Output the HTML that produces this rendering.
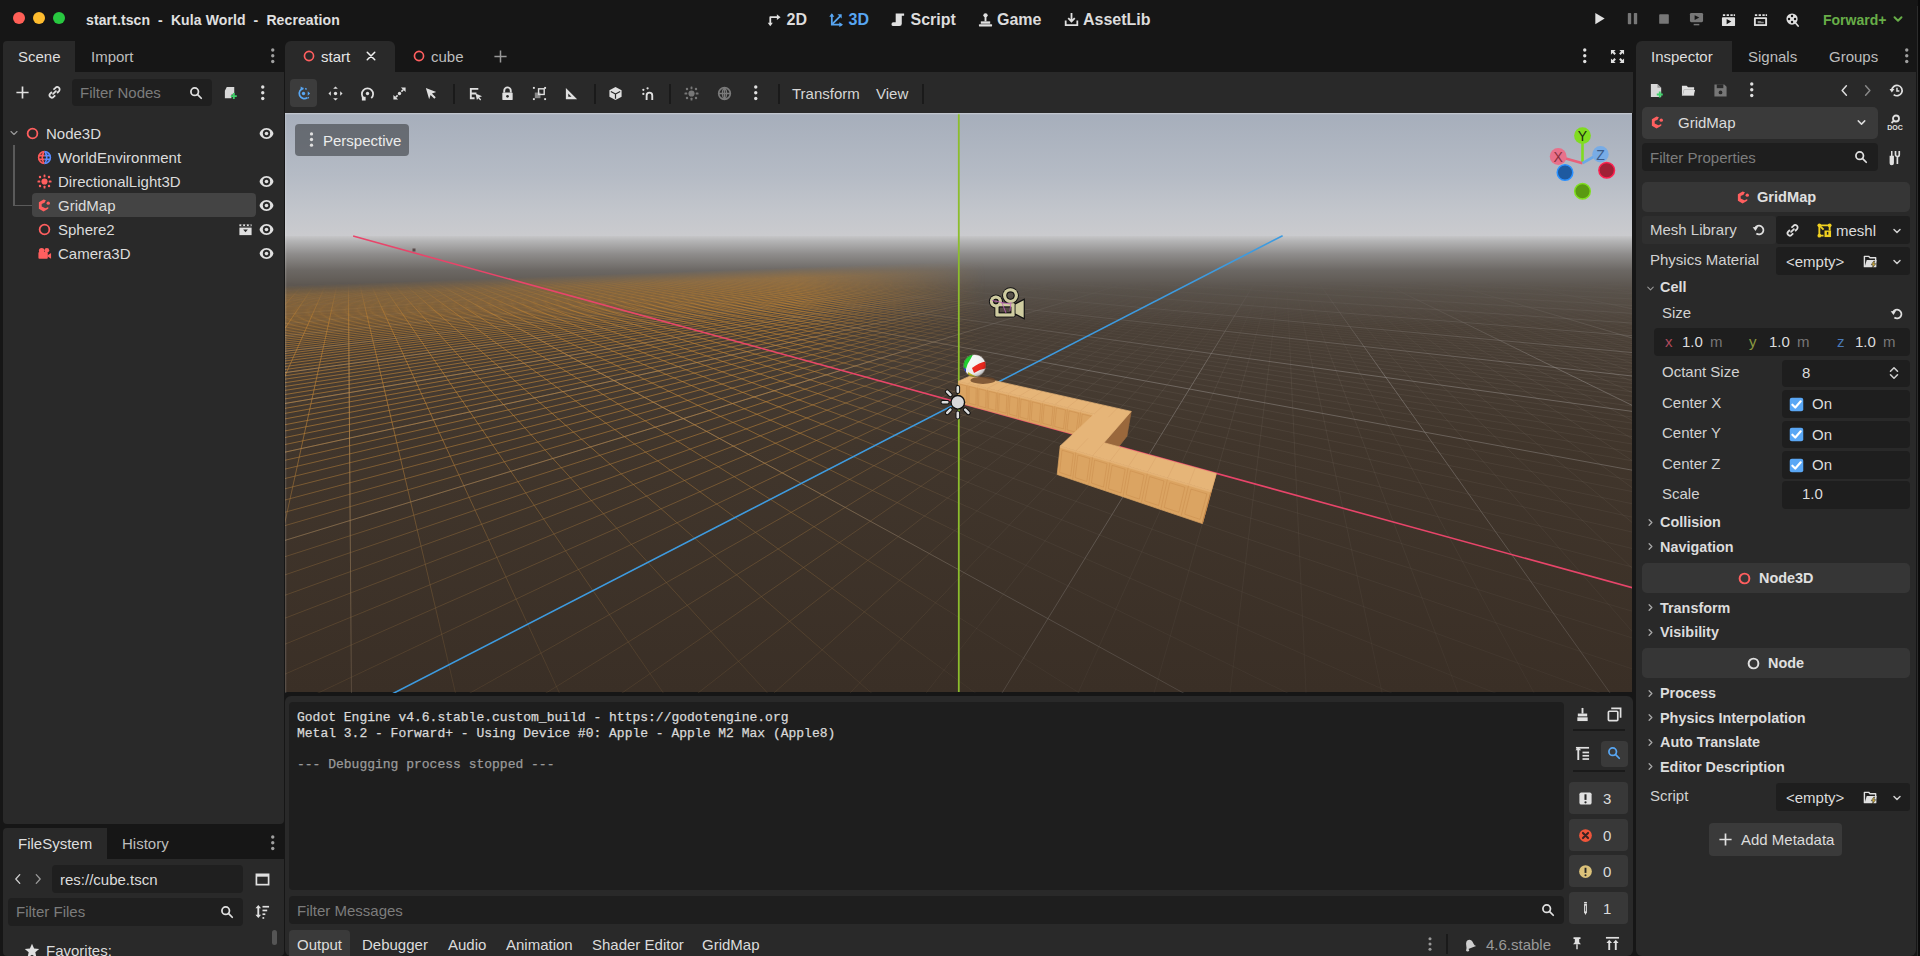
<!DOCTYPE html>
<html><head><meta charset="utf-8"><style>
html,body{margin:0;padding:0;}
body{width:1920px;height:956px;background:#161616;position:relative;overflow:hidden;font-family:"Liberation Sans", sans-serif;}
.t{position:absolute;white-space:pre;line-height:1;}
.r{position:absolute;}
.i{position:absolute;overflow:visible;}
</style></head><body>
<div class="r" style="left:12.5px;top:11.9px;width:12.6px;height:12.6px;background:#ff5f57;border-radius:6.3px;"></div>
<div class="r" style="left:32.6px;top:11.9px;width:12.6px;height:12.6px;background:#febc2e;border-radius:6.3px;"></div>
<div class="r" style="left:52.7px;top:11.9px;width:12.6px;height:12.6px;background:#28c840;border-radius:6.3px;"></div>
<div class="t" style="left:86px;top:12.7px;font-size:14px;font-weight:700;color:#e0e0e0;letter-spacing:0.11px;">start.tscn&nbsp; - &nbsp;Kula World &nbsp;- &nbsp;Recreation</div>
<div class="t" style="left:786.5px;top:12.2px;font-size:16px;font-weight:700;color:#dcdcdc;">2D</div>
<div class="t" style="left:848.5px;top:12.2px;font-size:16px;font-weight:700;color:#58a6f2;">3D</div>
<div class="t" style="left:910.5px;top:12.2px;font-size:16px;font-weight:700;color:#dcdcdc;">Script</div>
<div class="t" style="left:997px;top:12.2px;font-size:16px;font-weight:700;color:#dcdcdc;">Game</div>
<div class="t" style="left:1083px;top:12.2px;font-size:16px;font-weight:700;color:#dcdcdc;">AssetLib</div>
<div class="t" style="left:1823px;top:12.5px;font-size:14px;font-weight:700;color:#68ae48;">Forward+</div>
<div class="r" style="left:3px;top:41px;width:280.5px;height:783px;background:#292929;border-radius:4px;"></div>
<div class="r" style="left:75px;top:41px;width:209px;height:31px;background:#161616;"></div>
<div class="t" style="left:18px;top:48.7px;font-size:15px;color:#dedede;">Scene</div>
<div class="t" style="left:91px;top:48.7px;font-size:15px;color:#bdbdbd;">Import</div>
<div class="r" style="left:72px;top:79px;width:140px;height:27px;background:#1f1f1f;border-radius:4px;"></div>
<div class="t" style="left:80px;top:85.2px;font-size:15px;color:#7c7c7c;">Filter Nodes</div>
<div class="r" style="left:32px;top:193px;width:224px;height:24px;background:#444444;border-radius:4px;"></div>
<div class="t" style="left:46px;top:125.7px;font-size:15px;color:#dcdcdc;">Node3D</div>
<div class="t" style="left:58px;top:149.7px;font-size:15px;color:#dcdcdc;">WorldEnvironment</div>
<div class="t" style="left:58px;top:173.7px;font-size:15px;color:#dcdcdc;">DirectionalLight3D</div>
<div class="t" style="left:58px;top:197.7px;font-size:15px;color:#dcdcdc;">GridMap</div>
<div class="t" style="left:58px;top:221.7px;font-size:15px;color:#dcdcdc;">Sphere2</div>
<div class="t" style="left:58px;top:245.7px;font-size:15px;color:#dcdcdc;">Camera3D</div>
<div class="r" style="left:13px;top:145px;width:1.5px;height:61px;background:#5a5a5a;"></div>
<div class="r" style="left:13px;top:204.5px;width:19px;height:1.5px;background:#5a5a5a;"></div>
<div class="r" style="left:3px;top:828px;width:280.5px;height:128px;background:#292929;border-radius:4px;"></div>
<div class="r" style="left:107px;top:828px;width:177px;height:31px;background:#161616;"></div>
<div class="t" style="left:18px;top:835.7px;font-size:15px;color:#dedede;">FileSystem</div>
<div class="t" style="left:122px;top:835.7px;font-size:15px;color:#bdbdbd;">History</div>
<div class="r" style="left:52px;top:865px;width:191px;height:28px;background:#1f1f1f;border-radius:4px;"></div>
<div class="t" style="left:60px;top:871.7px;font-size:15px;color:#dcdcdc;">res://cube.tscn</div>
<div class="r" style="left:8px;top:898px;width:235px;height:28px;background:#1f1f1f;border-radius:4px;"></div>
<div class="t" style="left:16px;top:904.2px;font-size:15px;color:#7c7c7c;">Filter Files</div>
<div class="t" style="left:46px;top:942.7px;font-size:15px;color:#dcdcdc;">Favorites:</div>
<div class="r" style="left:285px;top:41px;width:110px;height:32px;background:#292929;border-radius:6px;border-bottom-left-radius:0;border-bottom-right-radius:0;"></div>
<div class="r" style="left:285px;top:72px;width:1348px;height:41px;background:#292929;"></div>
<div class="t" style="left:321px;top:48.7px;font-size:15px;color:#e6e6e6;">start</div>
<div class="t" style="left:431px;top:48.7px;font-size:15px;color:#bdbdbd;">cube</div>
<div class="r" style="left:290px;top:79px;width:27px;height:28px;background:#3c3c3c;border-radius:4px;"></div>
<div class="t" style="left:792px;top:85.7px;font-size:15px;color:#d6d6d6;">Transform</div>
<div class="t" style="left:876px;top:85.7px;font-size:15px;color:#d6d6d6;">View</div>
<div class="r" style="left:453px;top:84px;width:1.5px;height:20px;background:#1a1a1a;"></div>
<div class="r" style="left:594px;top:84px;width:1.5px;height:20px;background:#1a1a1a;"></div>
<div class="r" style="left:669px;top:84px;width:1.5px;height:20px;background:#1a1a1a;"></div>
<div class="r" style="left:778px;top:84px;width:1.5px;height:20px;background:#1a1a1a;"></div>
<div class="r" style="left:922px;top:84px;width:1.5px;height:20px;background:#1a1a1a;"></div>
<svg width="1347" height="580" viewBox="285 113 1347 580" style="position:absolute;left:285px;top:113px;display:block">
<defs>
<linearGradient id="sky" x1="0" y1="113" x2="0" y2="238" gradientUnits="userSpaceOnUse">
<stop offset="0" stop-color="#a6aebb"/><stop offset="0.5" stop-color="#b5bbc5"/><stop offset="0.8" stop-color="#c3c6cc"/><stop offset="1" stop-color="#cbcbce"/></linearGradient>
<linearGradient id="gnd" x1="0" y1="236" x2="0" y2="692" gradientUnits="userSpaceOnUse">
<stop offset="0" stop-color="#c6c6c8"/>
<stop offset="0.011" stop-color="#b4b4b5"/>
<stop offset="0.04" stop-color="#8e8c8b"/>
<stop offset="0.075" stop-color="#6c6864"/>
<stop offset="0.12" stop-color="#58514a"/>
<stop offset="0.2" stop-color="#4a4037"/>
<stop offset="0.45" stop-color="#41362c"/>
<stop offset="1" stop-color="#3a2f26"/></linearGradient>
<linearGradient id="fogv" x1="500" y1="236" x2="516.4" y2="692" gradientUnits="userSpaceOnUse">
<stop offset="0" stop-color="#fff" stop-opacity="0"/>
<stop offset="0.092" stop-color="#fff" stop-opacity="0"/>
<stop offset="0.115" stop-color="#fff" stop-opacity="0.55"/>
<stop offset="0.17" stop-color="#fff" stop-opacity="1"/>
<stop offset="0.38" stop-color="#fff" stop-opacity="1"/>
<stop offset="0.68" stop-color="#fff" stop-opacity="0.4"/>
<stop offset="1" stop-color="#fff" stop-opacity="0.14"/></linearGradient>
<linearGradient id="grayv" x1="0" y1="236" x2="0" y2="692" gradientUnits="userSpaceOnUse">
<stop offset="0" stop-color="#fff" stop-opacity="0"/>
<stop offset="0.1" stop-color="#fff" stop-opacity="0"/>
<stop offset="0.3" stop-color="#fff" stop-opacity="1"/>
<stop offset="0.6" stop-color="#fff" stop-opacity="0.75"/>
<stop offset="1" stop-color="#fff" stop-opacity="0.45"/></linearGradient>
<linearGradient id="orh" x1="285" y1="0" x2="1632" y2="0" gradientUnits="userSpaceOnUse">
<stop offset="0" stop-color="#fff" stop-opacity="1"/>
<stop offset="0.38" stop-color="#fff" stop-opacity="1"/>
<stop offset="0.52" stop-color="#fff" stop-opacity="0"/>
<stop offset="1" stop-color="#fff" stop-opacity="0"/></linearGradient>
<mask id="mfog" maskUnits="userSpaceOnUse" x="285" y="113" width="1347" height="580"><rect x="285" y="113" width="1347" height="580" fill="url(#fogv)"/></mask>
<mask id="mgray" maskUnits="userSpaceOnUse" x="285" y="113" width="1347" height="580"><rect x="285" y="113" width="1347" height="580" fill="url(#grayv)"/></mask>
<mask id="mor" maskUnits="userSpaceOnUse" x="285" y="113" width="1347" height="580"><rect x="285" y="113" width="1347" height="580" fill="url(#orh)"/></mask>
<clipPath id="vpclip"><rect x="285" y="113" width="1347" height="580"/></clipPath>
</defs>
<g clip-path="url(#vpclip)">
<rect x="285" y="113" width="1347" height="124" fill="url(#sky)"/>
<rect x="285" y="236" width="1347" height="456" fill="url(#gnd)"/>
<g mask="url(#mgray)"><line x1="-145336.6" y1="6409.7" x2="-13742.6" y2="831.9" stroke="rgba(155,150,145,0.5)" stroke-width="1"/><line x1="112173.1" y1="6409.7" x2="2248.4" y2="288.4" stroke="rgba(155,150,145,0.5)" stroke-width="1"/><line x1="-143935.4" y1="6409.7" x2="-11842.9" y2="756.4" stroke="rgba(125,115,105,0.2)" stroke-width="1"/><line x1="111149.0" y1="6409.7" x2="2230.5" y2="287.9" stroke="rgba(125,115,105,0.2)" stroke-width="1"/><line x1="-142534.1" y1="6409.7" x2="-10369.6" y2="697.9" stroke="rgba(125,115,105,0.2)" stroke-width="1"/><line x1="110125.0" y1="6409.7" x2="2212.9" y2="287.4" stroke="rgba(125,115,105,0.2)" stroke-width="1"/><line x1="-141132.9" y1="6409.7" x2="-9193.6" y2="651.2" stroke="rgba(125,115,105,0.2)" stroke-width="1"/><line x1="109100.9" y1="6409.7" x2="2195.7" y2="286.9" stroke="rgba(125,115,105,0.2)" stroke-width="1"/><line x1="-139731.6" y1="6409.7" x2="-8233.2" y2="613.0" stroke="rgba(125,115,105,0.2)" stroke-width="1"/><line x1="108076.8" y1="6409.7" x2="2178.8" y2="286.4" stroke="rgba(125,115,105,0.2)" stroke-width="1"/><line x1="-138330.4" y1="6409.7" x2="-7434.1" y2="581.2" stroke="rgba(125,115,105,0.2)" stroke-width="1"/><line x1="107052.8" y1="6409.7" x2="2162.2" y2="285.9" stroke="rgba(125,115,105,0.2)" stroke-width="1"/><line x1="-136929.1" y1="6409.7" x2="-6758.8" y2="554.4" stroke="rgba(125,115,105,0.2)" stroke-width="1"/><line x1="106028.7" y1="6409.7" x2="2145.8" y2="285.5" stroke="rgba(125,115,105,0.2)" stroke-width="1"/><line x1="-135527.8" y1="6409.7" x2="-6180.6" y2="531.4" stroke="rgba(125,115,105,0.2)" stroke-width="1"/><line x1="105004.6" y1="6409.7" x2="2129.8" y2="285.0" stroke="rgba(125,115,105,0.2)" stroke-width="1"/><line x1="-134126.6" y1="6409.7" x2="-5679.9" y2="511.5" stroke="rgba(155,150,145,0.5)" stroke-width="1"/><line x1="103980.6" y1="6409.7" x2="2114.1" y2="284.6" stroke="rgba(155,150,145,0.5)" stroke-width="1"/><line x1="-132725.3" y1="6409.7" x2="-5242.2" y2="494.1" stroke="rgba(125,115,105,0.2)" stroke-width="1"/><line x1="102956.5" y1="6409.7" x2="2098.6" y2="284.1" stroke="rgba(125,115,105,0.2)" stroke-width="1"/><line x1="-131324.1" y1="6409.7" x2="-4856.2" y2="478.8" stroke="rgba(125,115,105,0.2)" stroke-width="1"/><line x1="101932.5" y1="6409.7" x2="2083.4" y2="283.7" stroke="rgba(125,115,105,0.2)" stroke-width="1"/><line x1="-129922.8" y1="6409.7" x2="-4513.3" y2="465.1" stroke="rgba(125,115,105,0.2)" stroke-width="1"/><line x1="100908.4" y1="6409.7" x2="2068.5" y2="283.3" stroke="rgba(125,115,105,0.2)" stroke-width="1"/><line x1="-128521.6" y1="6409.7" x2="-4206.7" y2="453.0" stroke="rgba(125,115,105,0.2)" stroke-width="1"/><line x1="99884.3" y1="6409.7" x2="2053.8" y2="282.9" stroke="rgba(125,115,105,0.2)" stroke-width="1"/><line x1="-127120.3" y1="6409.7" x2="-3930.9" y2="442.0" stroke="rgba(125,115,105,0.2)" stroke-width="1"/><line x1="98860.3" y1="6409.7" x2="2039.4" y2="282.5" stroke="rgba(125,115,105,0.2)" stroke-width="1"/><line x1="-125719.1" y1="6409.7" x2="-3681.5" y2="432.1" stroke="rgba(125,115,105,0.2)" stroke-width="1"/><line x1="97836.2" y1="6409.7" x2="2025.2" y2="282.1" stroke="rgba(125,115,105,0.2)" stroke-width="1"/><line x1="-124317.8" y1="6409.7" x2="-3454.9" y2="423.1" stroke="rgba(125,115,105,0.2)" stroke-width="1"/><line x1="96812.1" y1="6409.7" x2="2011.3" y2="281.7" stroke="rgba(125,115,105,0.2)" stroke-width="1"/><line x1="-122916.5" y1="6409.7" x2="-3248.0" y2="414.8" stroke="rgba(155,150,145,0.5)" stroke-width="1"/><line x1="95788.1" y1="6409.7" x2="1997.5" y2="281.3" stroke="rgba(155,150,145,0.5)" stroke-width="1"/><line x1="-121515.3" y1="6409.7" x2="-3058.4" y2="407.3" stroke="rgba(125,115,105,0.2)" stroke-width="1"/><line x1="94764.0" y1="6409.7" x2="1984.0" y2="280.9" stroke="rgba(125,115,105,0.2)" stroke-width="1"/><line x1="-120114.0" y1="6409.7" x2="-2884.1" y2="400.4" stroke="rgba(125,115,105,0.2)" stroke-width="1"/><line x1="93740.0" y1="6409.7" x2="1970.8" y2="280.5" stroke="rgba(125,115,105,0.2)" stroke-width="1"/><line x1="-118712.8" y1="6409.7" x2="-2723.2" y2="394.0" stroke="rgba(125,115,105,0.2)" stroke-width="1"/><line x1="92715.9" y1="6409.7" x2="1957.7" y2="280.2" stroke="rgba(125,115,105,0.2)" stroke-width="1"/><line x1="-117311.5" y1="6409.7" x2="-2574.3" y2="388.1" stroke="rgba(125,115,105,0.2)" stroke-width="1"/><line x1="91691.8" y1="6409.7" x2="1944.8" y2="279.8" stroke="rgba(125,115,105,0.2)" stroke-width="1"/><line x1="-115910.3" y1="6409.7" x2="-2436.0" y2="382.6" stroke="rgba(125,115,105,0.2)" stroke-width="1"/><line x1="90667.8" y1="6409.7" x2="1932.2" y2="279.4" stroke="rgba(125,115,105,0.2)" stroke-width="1"/><line x1="-114509.0" y1="6409.7" x2="-2307.3" y2="377.5" stroke="rgba(125,115,105,0.2)" stroke-width="1"/><line x1="89643.7" y1="6409.7" x2="1919.7" y2="279.1" stroke="rgba(125,115,105,0.2)" stroke-width="1"/><line x1="-113107.8" y1="6409.7" x2="-2187.2" y2="372.7" stroke="rgba(125,115,105,0.2)" stroke-width="1"/><line x1="88619.6" y1="6409.7" x2="1907.5" y2="278.7" stroke="rgba(125,115,105,0.2)" stroke-width="1"/><line x1="-111706.5" y1="6409.7" x2="-2074.9" y2="368.2" stroke="rgba(155,150,145,0.5)" stroke-width="1"/><line x1="87595.6" y1="6409.7" x2="1895.4" y2="278.4" stroke="rgba(155,150,145,0.5)" stroke-width="1"/><line x1="-110305.2" y1="6409.7" x2="-1969.6" y2="364.0" stroke="rgba(125,115,105,0.2)" stroke-width="1"/><line x1="86571.5" y1="6409.7" x2="1883.5" y2="278.1" stroke="rgba(125,115,105,0.2)" stroke-width="1"/><line x1="-108904.0" y1="6409.7" x2="-1870.8" y2="360.1" stroke="rgba(125,115,105,0.2)" stroke-width="1"/><line x1="85547.5" y1="6409.7" x2="1871.8" y2="277.7" stroke="rgba(125,115,105,0.2)" stroke-width="1"/><line x1="-107502.7" y1="6409.7" x2="-1777.7" y2="356.4" stroke="rgba(125,115,105,0.2)" stroke-width="1"/><line x1="84523.4" y1="6409.7" x2="1860.3" y2="277.4" stroke="rgba(125,115,105,0.2)" stroke-width="1"/><line x1="-106101.5" y1="6409.7" x2="-1690.0" y2="352.9" stroke="rgba(125,115,105,0.2)" stroke-width="1"/><line x1="83499.3" y1="6409.7" x2="1849.0" y2="277.1" stroke="rgba(125,115,105,0.2)" stroke-width="1"/><line x1="-104700.2" y1="6409.7" x2="-1607.2" y2="349.6" stroke="rgba(125,115,105,0.2)" stroke-width="1"/><line x1="82475.3" y1="6409.7" x2="1837.8" y2="276.8" stroke="rgba(125,115,105,0.2)" stroke-width="1"/><line x1="-103299.0" y1="6409.7" x2="-1528.8" y2="346.5" stroke="rgba(125,115,105,0.2)" stroke-width="1"/><line x1="81451.2" y1="6409.7" x2="1826.8" y2="276.5" stroke="rgba(125,115,105,0.2)" stroke-width="1"/><line x1="-101897.7" y1="6409.7" x2="-1454.6" y2="343.6" stroke="rgba(125,115,105,0.2)" stroke-width="1"/><line x1="80427.1" y1="6409.7" x2="1815.9" y2="276.2" stroke="rgba(125,115,105,0.2)" stroke-width="1"/><line x1="-100496.4" y1="6409.7" x2="-1384.2" y2="340.8" stroke="rgba(155,150,145,0.5)" stroke-width="1"/><line x1="79403.1" y1="6409.7" x2="1805.2" y2="275.9" stroke="rgba(155,150,145,0.5)" stroke-width="1"/><line x1="-99095.2" y1="6409.7" x2="-1317.3" y2="338.1" stroke="rgba(125,115,105,0.2)" stroke-width="1"/><line x1="78379.0" y1="6409.7" x2="1794.7" y2="275.6" stroke="rgba(125,115,105,0.2)" stroke-width="1"/><line x1="-97693.9" y1="6409.7" x2="-1253.7" y2="335.6" stroke="rgba(125,115,105,0.2)" stroke-width="1"/><line x1="77355.0" y1="6409.7" x2="1784.3" y2="275.3" stroke="rgba(125,115,105,0.2)" stroke-width="1"/><line x1="-96292.7" y1="6409.7" x2="-1193.2" y2="333.2" stroke="rgba(125,115,105,0.2)" stroke-width="1"/><line x1="76330.9" y1="6409.7" x2="1774.0" y2="275.0" stroke="rgba(125,115,105,0.2)" stroke-width="1"/><line x1="-94891.4" y1="6409.7" x2="-1135.4" y2="330.9" stroke="rgba(125,115,105,0.2)" stroke-width="1"/><line x1="75306.8" y1="6409.7" x2="1763.9" y2="274.7" stroke="rgba(125,115,105,0.2)" stroke-width="1"/><line x1="-93490.2" y1="6409.7" x2="-1080.3" y2="328.7" stroke="rgba(125,115,105,0.2)" stroke-width="1"/><line x1="74282.8" y1="6409.7" x2="1754.0" y2="274.4" stroke="rgba(125,115,105,0.2)" stroke-width="1"/><line x1="-92088.9" y1="6409.7" x2="-1027.7" y2="326.6" stroke="rgba(125,115,105,0.2)" stroke-width="1"/><line x1="73258.7" y1="6409.7" x2="1744.2" y2="274.1" stroke="rgba(125,115,105,0.2)" stroke-width="1"/><line x1="-90687.7" y1="6409.7" x2="-977.3" y2="324.6" stroke="rgba(125,115,105,0.2)" stroke-width="1"/><line x1="72234.6" y1="6409.7" x2="1734.5" y2="273.9" stroke="rgba(125,115,105,0.2)" stroke-width="1"/><line x1="-89286.4" y1="6409.7" x2="-929.1" y2="322.7" stroke="rgba(155,150,145,0.5)" stroke-width="1"/><line x1="71210.6" y1="6409.7" x2="1724.9" y2="273.6" stroke="rgba(155,150,145,0.5)" stroke-width="1"/><line x1="-87885.1" y1="6409.7" x2="-882.9" y2="320.8" stroke="rgba(125,115,105,0.2)" stroke-width="1"/><line x1="70186.5" y1="6409.7" x2="1715.5" y2="273.3" stroke="rgba(125,115,105,0.2)" stroke-width="1"/><line x1="-86483.9" y1="6409.7" x2="-838.6" y2="319.1" stroke="rgba(125,115,105,0.2)" stroke-width="1"/><line x1="69162.5" y1="6409.7" x2="1706.2" y2="273.1" stroke="rgba(125,115,105,0.2)" stroke-width="1"/><line x1="-85082.6" y1="6409.7" x2="-796.0" y2="317.4" stroke="rgba(125,115,105,0.2)" stroke-width="1"/><line x1="68138.4" y1="6409.7" x2="1697.1" y2="272.8" stroke="rgba(125,115,105,0.2)" stroke-width="1"/><line x1="-83681.4" y1="6409.7" x2="-755.2" y2="315.8" stroke="rgba(125,115,105,0.2)" stroke-width="1"/><line x1="67114.3" y1="6409.7" x2="1688.0" y2="272.5" stroke="rgba(125,115,105,0.2)" stroke-width="1"/><line x1="-82280.1" y1="6409.7" x2="-715.9" y2="314.2" stroke="rgba(125,115,105,0.2)" stroke-width="1"/><line x1="66090.3" y1="6409.7" x2="1679.1" y2="272.3" stroke="rgba(125,115,105,0.2)" stroke-width="1"/><line x1="-80878.9" y1="6409.7" x2="-678.1" y2="312.7" stroke="rgba(125,115,105,0.2)" stroke-width="1"/><line x1="65066.2" y1="6409.7" x2="1670.3" y2="272.0" stroke="rgba(125,115,105,0.2)" stroke-width="1"/><line x1="-79477.6" y1="6409.7" x2="-641.6" y2="311.3" stroke="rgba(125,115,105,0.2)" stroke-width="1"/><line x1="64042.1" y1="6409.7" x2="1661.6" y2="271.8" stroke="rgba(125,115,105,0.2)" stroke-width="1"/><line x1="-78076.4" y1="6409.7" x2="-606.6" y2="309.9" stroke="rgba(155,150,145,0.5)" stroke-width="1"/><line x1="63018.1" y1="6409.7" x2="1653.0" y2="271.6" stroke="rgba(155,150,145,0.5)" stroke-width="1"/><line x1="-76675.1" y1="6409.7" x2="-572.7" y2="308.5" stroke="rgba(125,115,105,0.2)" stroke-width="1"/><line x1="61994.0" y1="6409.7" x2="1644.6" y2="271.3" stroke="rgba(125,115,105,0.2)" stroke-width="1"/><line x1="-75273.8" y1="6409.7" x2="-540.1" y2="307.2" stroke="rgba(125,115,105,0.2)" stroke-width="1"/><line x1="60970.0" y1="6409.7" x2="1636.2" y2="271.1" stroke="rgba(125,115,105,0.2)" stroke-width="1"/><line x1="-73872.6" y1="6409.7" x2="-508.6" y2="306.0" stroke="rgba(125,115,105,0.2)" stroke-width="1"/><line x1="59945.9" y1="6409.7" x2="1628.0" y2="270.8" stroke="rgba(125,115,105,0.2)" stroke-width="1"/><line x1="-72471.3" y1="6409.7" x2="-478.2" y2="304.8" stroke="rgba(125,115,105,0.2)" stroke-width="1"/><line x1="58921.8" y1="6409.7" x2="1619.8" y2="270.6" stroke="rgba(125,115,105,0.2)" stroke-width="1"/><line x1="-71070.1" y1="6409.7" x2="-448.7" y2="303.6" stroke="rgba(125,115,105,0.2)" stroke-width="1"/><line x1="57897.8" y1="6409.7" x2="1611.8" y2="270.4" stroke="rgba(125,115,105,0.2)" stroke-width="1"/><line x1="-69668.8" y1="6409.7" x2="-420.3" y2="302.5" stroke="rgba(125,115,105,0.2)" stroke-width="1"/><line x1="56873.7" y1="6409.7" x2="1603.9" y2="270.2" stroke="rgba(125,115,105,0.2)" stroke-width="1"/><line x1="-68267.6" y1="6409.7" x2="-392.7" y2="301.4" stroke="rgba(125,115,105,0.2)" stroke-width="1"/><line x1="55849.6" y1="6409.7" x2="1596.0" y2="269.9" stroke="rgba(125,115,105,0.2)" stroke-width="1"/><line x1="-66866.3" y1="6409.7" x2="-366.1" y2="300.3" stroke="rgba(155,150,145,0.5)" stroke-width="1"/><line x1="54825.6" y1="6409.7" x2="1588.3" y2="269.7" stroke="rgba(155,150,145,0.5)" stroke-width="1"/><line x1="-65465.1" y1="6409.7" x2="-340.3" y2="299.3" stroke="rgba(125,115,105,0.2)" stroke-width="1"/><line x1="53801.5" y1="6409.7" x2="1580.6" y2="269.5" stroke="rgba(125,115,105,0.2)" stroke-width="1"/><line x1="-64063.8" y1="6409.7" x2="-315.2" y2="298.3" stroke="rgba(125,115,105,0.2)" stroke-width="1"/><line x1="52777.4" y1="6409.7" x2="1573.1" y2="269.3" stroke="rgba(125,115,105,0.2)" stroke-width="1"/><line x1="-62662.5" y1="6409.7" x2="-291.0" y2="297.3" stroke="rgba(125,115,105,0.2)" stroke-width="1"/><line x1="51753.4" y1="6409.7" x2="1565.6" y2="269.1" stroke="rgba(125,115,105,0.2)" stroke-width="1"/><line x1="-61261.3" y1="6409.7" x2="-267.4" y2="296.4" stroke="rgba(125,115,105,0.2)" stroke-width="1"/><line x1="50729.3" y1="6409.7" x2="1558.2" y2="268.9" stroke="rgba(125,115,105,0.2)" stroke-width="1"/><line x1="-59860.0" y1="6409.7" x2="-244.6" y2="295.5" stroke="rgba(125,115,105,0.2)" stroke-width="1"/><line x1="49705.3" y1="6409.7" x2="1551.0" y2="268.7" stroke="rgba(125,115,105,0.2)" stroke-width="1"/><line x1="-58458.8" y1="6409.7" x2="-222.4" y2="294.6" stroke="rgba(125,115,105,0.2)" stroke-width="1"/><line x1="48681.2" y1="6409.7" x2="1543.8" y2="268.5" stroke="rgba(125,115,105,0.2)" stroke-width="1"/><line x1="-57057.5" y1="6409.7" x2="-200.8" y2="293.7" stroke="rgba(125,115,105,0.2)" stroke-width="1"/><line x1="47657.1" y1="6409.7" x2="1536.7" y2="268.3" stroke="rgba(125,115,105,0.2)" stroke-width="1"/><line x1="-55656.3" y1="6409.7" x2="-179.9" y2="292.9" stroke="rgba(155,150,145,0.5)" stroke-width="1"/><line x1="46633.1" y1="6409.7" x2="1529.6" y2="268.1" stroke="rgba(155,150,145,0.5)" stroke-width="1"/><line x1="-54255.0" y1="6409.7" x2="-159.5" y2="292.1" stroke="rgba(125,115,105,0.2)" stroke-width="1"/><line x1="45609.0" y1="6409.7" x2="1522.7" y2="267.9" stroke="rgba(125,115,105,0.2)" stroke-width="1"/><line x1="-52853.8" y1="6409.7" x2="-139.7" y2="291.3" stroke="rgba(125,115,105,0.2)" stroke-width="1"/><line x1="44584.9" y1="6409.7" x2="1515.8" y2="267.7" stroke="rgba(125,115,105,0.2)" stroke-width="1"/><line x1="-51452.5" y1="6409.7" x2="-120.4" y2="290.5" stroke="rgba(125,115,105,0.2)" stroke-width="1"/><line x1="43560.9" y1="6409.7" x2="1509.1" y2="267.5" stroke="rgba(125,115,105,0.2)" stroke-width="1"/><line x1="-50051.2" y1="6409.7" x2="-101.7" y2="289.8" stroke="rgba(125,115,105,0.2)" stroke-width="1"/><line x1="42536.8" y1="6409.7" x2="1502.4" y2="267.3" stroke="rgba(125,115,105,0.2)" stroke-width="1"/><line x1="-48650.0" y1="6409.7" x2="-83.4" y2="289.1" stroke="rgba(125,115,105,0.2)" stroke-width="1"/><line x1="41512.8" y1="6409.7" x2="1495.7" y2="267.1" stroke="rgba(125,115,105,0.2)" stroke-width="1"/><line x1="-47248.7" y1="6409.7" x2="-65.6" y2="288.4" stroke="rgba(125,115,105,0.2)" stroke-width="1"/><line x1="40488.7" y1="6409.7" x2="1489.2" y2="266.9" stroke="rgba(125,115,105,0.2)" stroke-width="1"/><line x1="-45847.5" y1="6409.7" x2="-48.3" y2="287.7" stroke="rgba(125,115,105,0.2)" stroke-width="1"/><line x1="39464.6" y1="6409.7" x2="1482.7" y2="266.7" stroke="rgba(125,115,105,0.2)" stroke-width="1"/><line x1="-44446.2" y1="6409.7" x2="-31.4" y2="287.0" stroke="rgba(155,150,145,0.5)" stroke-width="1"/><line x1="38440.6" y1="6409.7" x2="1476.3" y2="266.6" stroke="rgba(155,150,145,0.5)" stroke-width="1"/><line x1="-43045.0" y1="6409.7" x2="-14.9" y2="286.3" stroke="rgba(125,115,105,0.2)" stroke-width="1"/><line x1="37416.5" y1="6409.7" x2="1470.0" y2="266.4" stroke="rgba(125,115,105,0.2)" stroke-width="1"/><line x1="-41643.7" y1="6409.7" x2="1.1" y2="285.7" stroke="rgba(125,115,105,0.2)" stroke-width="1"/><line x1="36392.4" y1="6409.7" x2="1463.7" y2="266.2" stroke="rgba(125,115,105,0.2)" stroke-width="1"/><line x1="-40242.4" y1="6409.7" x2="16.8" y2="285.1" stroke="rgba(125,115,105,0.2)" stroke-width="1"/><line x1="35368.4" y1="6409.7" x2="1457.5" y2="266.0" stroke="rgba(125,115,105,0.2)" stroke-width="1"/><line x1="-38841.2" y1="6409.7" x2="32.1" y2="284.5" stroke="rgba(125,115,105,0.2)" stroke-width="1"/><line x1="34344.3" y1="6409.7" x2="1451.4" y2="265.9" stroke="rgba(125,115,105,0.2)" stroke-width="1"/><line x1="-37439.9" y1="6409.7" x2="47.0" y2="283.9" stroke="rgba(125,115,105,0.2)" stroke-width="1"/><line x1="33320.3" y1="6409.7" x2="1445.3" y2="265.7" stroke="rgba(125,115,105,0.2)" stroke-width="1"/><line x1="-36038.7" y1="6409.7" x2="61.6" y2="283.3" stroke="rgba(125,115,105,0.2)" stroke-width="1"/><line x1="32296.2" y1="6409.7" x2="1439.4" y2="265.5" stroke="rgba(125,115,105,0.2)" stroke-width="1"/><line x1="-34637.4" y1="6409.7" x2="75.8" y2="282.7" stroke="rgba(125,115,105,0.2)" stroke-width="1"/><line x1="31272.1" y1="6409.7" x2="1433.4" y2="265.4" stroke="rgba(125,115,105,0.2)" stroke-width="1"/><line x1="-33236.2" y1="6409.7" x2="89.7" y2="282.2" stroke="rgba(155,150,145,0.5)" stroke-width="1"/><line x1="30248.1" y1="6409.7" x2="1427.6" y2="265.2" stroke="rgba(155,150,145,0.5)" stroke-width="1"/><line x1="-31834.9" y1="6409.7" x2="103.3" y2="281.6" stroke="rgba(125,115,105,0.2)" stroke-width="1"/><line x1="29224.0" y1="6409.7" x2="1421.8" y2="265.0" stroke="rgba(125,115,105,0.2)" stroke-width="1"/><line x1="-30433.7" y1="6409.7" x2="116.6" y2="281.1" stroke="rgba(125,115,105,0.2)" stroke-width="1"/><line x1="28199.9" y1="6409.7" x2="1416.0" y2="264.9" stroke="rgba(125,115,105,0.2)" stroke-width="1"/><line x1="-29032.4" y1="6409.7" x2="129.6" y2="280.6" stroke="rgba(125,115,105,0.2)" stroke-width="1"/><line x1="27175.9" y1="6409.7" x2="1410.4" y2="264.7" stroke="rgba(125,115,105,0.2)" stroke-width="1"/><line x1="-27631.1" y1="6409.7" x2="142.3" y2="280.1" stroke="rgba(125,115,105,0.2)" stroke-width="1"/><line x1="26151.8" y1="6409.7" x2="1404.7" y2="264.5" stroke="rgba(125,115,105,0.2)" stroke-width="1"/><line x1="-26229.9" y1="6409.7" x2="154.7" y2="279.6" stroke="rgba(125,115,105,0.2)" stroke-width="1"/><line x1="25127.8" y1="6409.7" x2="1399.2" y2="264.4" stroke="rgba(125,115,105,0.2)" stroke-width="1"/><line x1="-24828.6" y1="6409.7" x2="166.9" y2="279.1" stroke="rgba(125,115,105,0.2)" stroke-width="1"/><line x1="24103.7" y1="6409.7" x2="1393.7" y2="264.2" stroke="rgba(125,115,105,0.2)" stroke-width="1"/><line x1="-23427.4" y1="6409.7" x2="178.8" y2="278.6" stroke="rgba(125,115,105,0.2)" stroke-width="1"/><line x1="23079.6" y1="6409.7" x2="1388.3" y2="264.1" stroke="rgba(125,115,105,0.2)" stroke-width="1"/><line x1="-22026.1" y1="6409.7" x2="190.4" y2="278.2" stroke="rgba(155,150,145,0.5)" stroke-width="1"/><line x1="22055.6" y1="6409.7" x2="1382.9" y2="263.9" stroke="rgba(155,150,145,0.5)" stroke-width="1"/><line x1="-20624.9" y1="6409.7" x2="201.9" y2="277.7" stroke="rgba(125,115,105,0.2)" stroke-width="1"/><line x1="21031.5" y1="6409.7" x2="1377.5" y2="263.8" stroke="rgba(125,115,105,0.2)" stroke-width="1"/><line x1="-19223.6" y1="6409.7" x2="213.0" y2="277.3" stroke="rgba(125,115,105,0.2)" stroke-width="1"/><line x1="20007.4" y1="6409.7" x2="1372.3" y2="263.6" stroke="rgba(125,115,105,0.2)" stroke-width="1"/><line x1="-17822.4" y1="6409.7" x2="224.0" y2="276.9" stroke="rgba(125,115,105,0.2)" stroke-width="1"/><line x1="18983.4" y1="6409.7" x2="1367.0" y2="263.5" stroke="rgba(125,115,105,0.2)" stroke-width="1"/><line x1="-16421.1" y1="6409.7" x2="234.7" y2="276.4" stroke="rgba(125,115,105,0.2)" stroke-width="1"/><line x1="17959.3" y1="6409.7" x2="1361.9" y2="263.3" stroke="rgba(125,115,105,0.2)" stroke-width="1"/><line x1="-15019.8" y1="6409.7" x2="245.2" y2="276.0" stroke="rgba(125,115,105,0.2)" stroke-width="1"/><line x1="16935.3" y1="6409.7" x2="1356.8" y2="263.2" stroke="rgba(125,115,105,0.2)" stroke-width="1"/><line x1="-13618.6" y1="6409.7" x2="255.5" y2="275.6" stroke="rgba(125,115,105,0.2)" stroke-width="1"/><line x1="15911.2" y1="6409.7" x2="1351.7" y2="263.0" stroke="rgba(125,115,105,0.2)" stroke-width="1"/><line x1="-12217.3" y1="6409.7" x2="265.6" y2="275.2" stroke="rgba(125,115,105,0.2)" stroke-width="1"/><line x1="14887.1" y1="6409.7" x2="1346.7" y2="262.9" stroke="rgba(125,115,105,0.2)" stroke-width="1"/><line x1="-10816.1" y1="6409.7" x2="275.5" y2="274.8" stroke="rgba(155,150,145,0.5)" stroke-width="1"/><line x1="13863.1" y1="6409.7" x2="1341.7" y2="262.8" stroke="rgba(155,150,145,0.5)" stroke-width="1"/><line x1="-9414.8" y1="6409.7" x2="285.2" y2="274.4" stroke="rgba(125,115,105,0.2)" stroke-width="1"/><line x1="12839.0" y1="6409.7" x2="1336.8" y2="262.6" stroke="rgba(125,115,105,0.2)" stroke-width="1"/><line x1="-8013.6" y1="6409.7" x2="294.7" y2="274.0" stroke="rgba(125,115,105,0.2)" stroke-width="1"/><line x1="11814.9" y1="6409.7" x2="1331.9" y2="262.5" stroke="rgba(125,115,105,0.2)" stroke-width="1"/><line x1="-6612.3" y1="6409.7" x2="304.1" y2="273.7" stroke="rgba(125,115,105,0.2)" stroke-width="1"/><line x1="10790.9" y1="6409.7" x2="1327.1" y2="262.4" stroke="rgba(125,115,105,0.2)" stroke-width="1"/><line x1="-5211.1" y1="6409.7" x2="313.3" y2="273.3" stroke="rgba(125,115,105,0.2)" stroke-width="1"/><line x1="9766.8" y1="6409.7" x2="1322.4" y2="262.2" stroke="rgba(125,115,105,0.2)" stroke-width="1"/><line x1="-3809.8" y1="6409.7" x2="322.3" y2="272.9" stroke="rgba(125,115,105,0.2)" stroke-width="1"/><line x1="8742.8" y1="6409.7" x2="1317.6" y2="262.1" stroke="rgba(125,115,105,0.2)" stroke-width="1"/><line x1="-2408.5" y1="6409.7" x2="331.1" y2="272.6" stroke="rgba(125,115,105,0.2)" stroke-width="1"/><line x1="7718.7" y1="6409.7" x2="1313.0" y2="262.0" stroke="rgba(125,115,105,0.2)" stroke-width="1"/><line x1="-1007.3" y1="6409.7" x2="339.8" y2="272.3" stroke="rgba(125,115,105,0.2)" stroke-width="1"/><line x1="6694.6" y1="6409.7" x2="1308.3" y2="261.8" stroke="rgba(125,115,105,0.2)" stroke-width="1"/><line x1="394.0" y1="6409.7" x2="348.3" y2="271.9" stroke="rgba(155,150,145,0.5)" stroke-width="1"/><line x1="5670.6" y1="6409.7" x2="1303.7" y2="261.7" stroke="rgba(155,150,145,0.5)" stroke-width="1"/><line x1="1795.2" y1="6409.7" x2="356.7" y2="271.6" stroke="rgba(125,115,105,0.2)" stroke-width="1"/><line x1="4646.5" y1="6409.7" x2="1299.2" y2="261.6" stroke="rgba(125,115,105,0.2)" stroke-width="1"/><line x1="3196.5" y1="6409.7" x2="364.9" y2="271.3" stroke="rgba(125,115,105,0.2)" stroke-width="1"/><line x1="3622.4" y1="6409.7" x2="1294.7" y2="261.4" stroke="rgba(125,115,105,0.2)" stroke-width="1"/><line x1="4597.7" y1="6409.7" x2="372.9" y2="270.9" stroke="rgba(125,115,105,0.2)" stroke-width="1"/><line x1="2598.4" y1="6409.7" x2="1290.2" y2="261.3" stroke="rgba(125,115,105,0.2)" stroke-width="1"/><line x1="5999.0" y1="6409.7" x2="380.9" y2="270.6" stroke="rgba(125,115,105,0.2)" stroke-width="1"/><line x1="1574.3" y1="6409.7" x2="1285.8" y2="261.2" stroke="rgba(125,115,105,0.2)" stroke-width="1"/><line x1="7400.2" y1="6409.7" x2="388.7" y2="270.3" stroke="rgba(125,115,105,0.2)" stroke-width="1"/><line x1="550.3" y1="6409.7" x2="1281.4" y2="261.1" stroke="rgba(125,115,105,0.2)" stroke-width="1"/><line x1="8801.5" y1="6409.7" x2="396.3" y2="270.0" stroke="rgba(125,115,105,0.2)" stroke-width="1"/><line x1="-473.8" y1="6409.7" x2="1277.1" y2="260.9" stroke="rgba(125,115,105,0.2)" stroke-width="1"/><line x1="10202.8" y1="6409.7" x2="403.9" y2="269.7" stroke="rgba(125,115,105,0.2)" stroke-width="1"/><line x1="-1497.9" y1="6409.7" x2="1272.8" y2="260.8" stroke="rgba(125,115,105,0.2)" stroke-width="1"/><line x1="11604.0" y1="6409.7" x2="411.3" y2="269.4" stroke="rgba(155,150,145,0.5)" stroke-width="1"/><line x1="-2521.9" y1="6409.7" x2="1268.5" y2="260.7" stroke="rgba(155,150,145,0.5)" stroke-width="1"/><line x1="13005.3" y1="6409.7" x2="418.6" y2="269.1" stroke="rgba(125,115,105,0.2)" stroke-width="1"/><line x1="-3546.0" y1="6409.7" x2="1264.3" y2="260.6" stroke="rgba(125,115,105,0.2)" stroke-width="1"/><line x1="14406.5" y1="6409.7" x2="425.7" y2="268.8" stroke="rgba(125,115,105,0.2)" stroke-width="1"/><line x1="-4570.1" y1="6409.7" x2="1260.1" y2="260.5" stroke="rgba(125,115,105,0.2)" stroke-width="1"/><line x1="15807.8" y1="6409.7" x2="432.8" y2="268.6" stroke="rgba(125,115,105,0.2)" stroke-width="1"/><line x1="-5594.1" y1="6409.7" x2="1256.0" y2="260.3" stroke="rgba(125,115,105,0.2)" stroke-width="1"/><line x1="17209.0" y1="6409.7" x2="439.7" y2="268.3" stroke="rgba(125,115,105,0.2)" stroke-width="1"/><line x1="-6618.2" y1="6409.7" x2="1251.9" y2="260.2" stroke="rgba(125,115,105,0.2)" stroke-width="1"/><line x1="18610.3" y1="6409.7" x2="446.5" y2="268.0" stroke="rgba(125,115,105,0.2)" stroke-width="1"/><line x1="-7642.3" y1="6409.7" x2="1247.8" y2="260.1" stroke="rgba(125,115,105,0.2)" stroke-width="1"/><line x1="20011.6" y1="6409.7" x2="453.2" y2="267.7" stroke="rgba(125,115,105,0.2)" stroke-width="1"/><line x1="-8666.3" y1="6409.7" x2="1243.8" y2="260.0" stroke="rgba(125,115,105,0.2)" stroke-width="1"/><line x1="21412.8" y1="6409.7" x2="459.8" y2="267.5" stroke="rgba(125,115,105,0.2)" stroke-width="1"/><line x1="-9690.4" y1="6409.7" x2="1239.8" y2="259.9" stroke="rgba(125,115,105,0.2)" stroke-width="1"/><line x1="24215.3" y1="6409.7" x2="472.7" y2="267.0" stroke="rgba(125,115,105,0.2)" stroke-width="1"/><line x1="-11738.5" y1="6409.7" x2="1231.9" y2="259.7" stroke="rgba(125,115,105,0.2)" stroke-width="1"/><line x1="25616.6" y1="6409.7" x2="479.0" y2="266.7" stroke="rgba(125,115,105,0.2)" stroke-width="1"/><line x1="-12762.6" y1="6409.7" x2="1228.0" y2="259.6" stroke="rgba(125,115,105,0.2)" stroke-width="1"/><line x1="27017.8" y1="6409.7" x2="485.2" y2="266.5" stroke="rgba(125,115,105,0.2)" stroke-width="1"/><line x1="-13786.6" y1="6409.7" x2="1224.2" y2="259.4" stroke="rgba(125,115,105,0.2)" stroke-width="1"/><line x1="28419.1" y1="6409.7" x2="491.3" y2="266.2" stroke="rgba(125,115,105,0.2)" stroke-width="1"/><line x1="-14810.7" y1="6409.7" x2="1220.3" y2="259.3" stroke="rgba(125,115,105,0.2)" stroke-width="1"/><line x1="29820.3" y1="6409.7" x2="497.3" y2="266.0" stroke="rgba(125,115,105,0.2)" stroke-width="1"/><line x1="-15834.8" y1="6409.7" x2="1216.6" y2="259.2" stroke="rgba(125,115,105,0.2)" stroke-width="1"/><line x1="31221.6" y1="6409.7" x2="503.3" y2="265.8" stroke="rgba(125,115,105,0.2)" stroke-width="1"/><line x1="-16858.8" y1="6409.7" x2="1212.8" y2="259.1" stroke="rgba(125,115,105,0.2)" stroke-width="1"/><line x1="32622.9" y1="6409.7" x2="509.1" y2="265.5" stroke="rgba(125,115,105,0.2)" stroke-width="1"/><line x1="-17882.9" y1="6409.7" x2="1209.1" y2="259.0" stroke="rgba(125,115,105,0.2)" stroke-width="1"/><line x1="34024.1" y1="6409.7" x2="514.8" y2="265.3" stroke="rgba(155,150,145,0.5)" stroke-width="1"/><line x1="-18906.9" y1="6409.7" x2="1205.4" y2="258.9" stroke="rgba(155,150,145,0.5)" stroke-width="1"/><line x1="35425.4" y1="6409.7" x2="520.5" y2="265.1" stroke="rgba(125,115,105,0.2)" stroke-width="1"/><line x1="-19931.0" y1="6409.7" x2="1201.7" y2="258.8" stroke="rgba(125,115,105,0.2)" stroke-width="1"/><line x1="36826.6" y1="6409.7" x2="526.1" y2="264.8" stroke="rgba(125,115,105,0.2)" stroke-width="1"/><line x1="-20955.1" y1="6409.7" x2="1198.1" y2="258.7" stroke="rgba(125,115,105,0.2)" stroke-width="1"/><line x1="38227.9" y1="6409.7" x2="531.6" y2="264.6" stroke="rgba(125,115,105,0.2)" stroke-width="1"/><line x1="-21979.1" y1="6409.7" x2="1194.5" y2="258.6" stroke="rgba(125,115,105,0.2)" stroke-width="1"/><line x1="39629.1" y1="6409.7" x2="537.0" y2="264.4" stroke="rgba(125,115,105,0.2)" stroke-width="1"/><line x1="-23003.2" y1="6409.7" x2="1190.9" y2="258.5" stroke="rgba(125,115,105,0.2)" stroke-width="1"/><line x1="41030.4" y1="6409.7" x2="542.4" y2="264.2" stroke="rgba(125,115,105,0.2)" stroke-width="1"/><line x1="-24027.3" y1="6409.7" x2="1187.4" y2="258.4" stroke="rgba(125,115,105,0.2)" stroke-width="1"/><line x1="42431.6" y1="6409.7" x2="547.6" y2="264.0" stroke="rgba(125,115,105,0.2)" stroke-width="1"/><line x1="-25051.3" y1="6409.7" x2="1183.9" y2="258.3" stroke="rgba(125,115,105,0.2)" stroke-width="1"/><line x1="43832.9" y1="6409.7" x2="552.8" y2="263.8" stroke="rgba(125,115,105,0.2)" stroke-width="1"/><line x1="-26075.4" y1="6409.7" x2="1180.4" y2="258.2" stroke="rgba(125,115,105,0.2)" stroke-width="1"/><line x1="45234.2" y1="6409.7" x2="557.9" y2="263.6" stroke="rgba(155,150,145,0.5)" stroke-width="1"/><line x1="-27099.4" y1="6409.7" x2="1176.9" y2="258.1" stroke="rgba(155,150,145,0.5)" stroke-width="1"/><line x1="46635.4" y1="6409.7" x2="563.0" y2="263.4" stroke="rgba(125,115,105,0.2)" stroke-width="1"/><line x1="-28123.5" y1="6409.7" x2="1173.5" y2="258.0" stroke="rgba(125,115,105,0.2)" stroke-width="1"/><line x1="48036.7" y1="6409.7" x2="568.0" y2="263.2" stroke="rgba(125,115,105,0.2)" stroke-width="1"/><line x1="-29147.6" y1="6409.7" x2="1170.1" y2="257.9" stroke="rgba(125,115,105,0.2)" stroke-width="1"/><line x1="49437.9" y1="6409.7" x2="572.9" y2="263.0" stroke="rgba(125,115,105,0.2)" stroke-width="1"/><line x1="-30171.6" y1="6409.7" x2="1166.8" y2="257.8" stroke="rgba(125,115,105,0.2)" stroke-width="1"/><line x1="50839.2" y1="6409.7" x2="577.7" y2="262.8" stroke="rgba(125,115,105,0.2)" stroke-width="1"/><line x1="-31195.7" y1="6409.7" x2="1163.4" y2="257.7" stroke="rgba(125,115,105,0.2)" stroke-width="1"/><line x1="52240.4" y1="6409.7" x2="582.5" y2="262.6" stroke="rgba(125,115,105,0.2)" stroke-width="1"/><line x1="-32219.8" y1="6409.7" x2="1160.1" y2="257.6" stroke="rgba(125,115,105,0.2)" stroke-width="1"/><line x1="53641.7" y1="6409.7" x2="587.2" y2="262.4" stroke="rgba(125,115,105,0.2)" stroke-width="1"/><line x1="-33243.8" y1="6409.7" x2="1156.8" y2="257.5" stroke="rgba(125,115,105,0.2)" stroke-width="1"/><line x1="55042.9" y1="6409.7" x2="591.9" y2="262.2" stroke="rgba(125,115,105,0.2)" stroke-width="1"/><line x1="-34267.9" y1="6409.7" x2="1153.6" y2="257.5" stroke="rgba(125,115,105,0.2)" stroke-width="1"/><line x1="56444.2" y1="6409.7" x2="596.5" y2="262.0" stroke="rgba(155,150,145,0.5)" stroke-width="1"/><line x1="-35291.9" y1="6409.7" x2="1150.3" y2="257.4" stroke="rgba(155,150,145,0.5)" stroke-width="1"/><line x1="57845.5" y1="6409.7" x2="601.0" y2="261.9" stroke="rgba(125,115,105,0.2)" stroke-width="1"/><line x1="-36316.0" y1="6409.7" x2="1147.1" y2="257.3" stroke="rgba(125,115,105,0.2)" stroke-width="1"/><line x1="59246.7" y1="6409.7" x2="605.5" y2="261.7" stroke="rgba(125,115,105,0.2)" stroke-width="1"/><line x1="-37340.1" y1="6409.7" x2="1144.0" y2="257.2" stroke="rgba(125,115,105,0.2)" stroke-width="1"/><line x1="60648.0" y1="6409.7" x2="609.9" y2="261.5" stroke="rgba(125,115,105,0.2)" stroke-width="1"/><line x1="-38364.1" y1="6409.7" x2="1140.8" y2="257.1" stroke="rgba(125,115,105,0.2)" stroke-width="1"/><line x1="62049.2" y1="6409.7" x2="614.2" y2="261.3" stroke="rgba(125,115,105,0.2)" stroke-width="1"/><line x1="-39388.2" y1="6409.7" x2="1137.7" y2="257.0" stroke="rgba(125,115,105,0.2)" stroke-width="1"/><line x1="63450.5" y1="6409.7" x2="618.5" y2="261.2" stroke="rgba(125,115,105,0.2)" stroke-width="1"/><line x1="-40412.3" y1="6409.7" x2="1134.6" y2="256.9" stroke="rgba(125,115,105,0.2)" stroke-width="1"/><line x1="64851.7" y1="6409.7" x2="622.8" y2="261.0" stroke="rgba(125,115,105,0.2)" stroke-width="1"/><line x1="-41436.3" y1="6409.7" x2="1131.5" y2="256.8" stroke="rgba(125,115,105,0.2)" stroke-width="1"/><line x1="66253.0" y1="6409.7" x2="627.0" y2="260.8" stroke="rgba(125,115,105,0.2)" stroke-width="1"/><line x1="-42460.4" y1="6409.7" x2="1128.4" y2="256.7" stroke="rgba(125,115,105,0.2)" stroke-width="1"/><line x1="67654.2" y1="6409.7" x2="631.1" y2="260.7" stroke="rgba(155,150,145,0.5)" stroke-width="1"/><line x1="-43484.4" y1="6409.7" x2="1125.4" y2="256.7" stroke="rgba(155,150,145,0.5)" stroke-width="1"/><line x1="69055.5" y1="6409.7" x2="635.2" y2="260.5" stroke="rgba(125,115,105,0.2)" stroke-width="1"/><line x1="-44508.5" y1="6409.7" x2="1122.4" y2="256.6" stroke="rgba(125,115,105,0.2)" stroke-width="1"/><line x1="70456.8" y1="6409.7" x2="639.2" y2="260.3" stroke="rgba(125,115,105,0.2)" stroke-width="1"/><line x1="-45532.6" y1="6409.7" x2="1119.4" y2="256.5" stroke="rgba(125,115,105,0.2)" stroke-width="1"/><line x1="71858.0" y1="6409.7" x2="643.2" y2="260.2" stroke="rgba(125,115,105,0.2)" stroke-width="1"/><line x1="-46556.6" y1="6409.7" x2="1116.4" y2="256.4" stroke="rgba(125,115,105,0.2)" stroke-width="1"/><line x1="73259.3" y1="6409.7" x2="647.1" y2="260.0" stroke="rgba(125,115,105,0.2)" stroke-width="1"/><line x1="-47580.7" y1="6409.7" x2="1113.5" y2="256.3" stroke="rgba(125,115,105,0.2)" stroke-width="1"/><line x1="74660.5" y1="6409.7" x2="651.0" y2="259.9" stroke="rgba(125,115,105,0.2)" stroke-width="1"/><line x1="-48604.8" y1="6409.7" x2="1110.6" y2="256.2" stroke="rgba(125,115,105,0.2)" stroke-width="1"/><line x1="76061.8" y1="6409.7" x2="654.9" y2="259.7" stroke="rgba(125,115,105,0.2)" stroke-width="1"/><line x1="-49628.8" y1="6409.7" x2="1107.7" y2="256.2" stroke="rgba(125,115,105,0.2)" stroke-width="1"/><line x1="77463.0" y1="6409.7" x2="658.7" y2="259.6" stroke="rgba(125,115,105,0.2)" stroke-width="1"/><line x1="-50652.9" y1="6409.7" x2="1104.8" y2="256.1" stroke="rgba(125,115,105,0.2)" stroke-width="1"/><line x1="78864.3" y1="6409.7" x2="662.4" y2="259.4" stroke="rgba(155,150,145,0.5)" stroke-width="1"/><line x1="-51676.9" y1="6409.7" x2="1101.9" y2="256.0" stroke="rgba(155,150,145,0.5)" stroke-width="1"/><line x1="80265.5" y1="6409.7" x2="666.1" y2="259.3" stroke="rgba(125,115,105,0.2)" stroke-width="1"/><line x1="-52701.0" y1="6409.7" x2="1099.1" y2="255.9" stroke="rgba(125,115,105,0.2)" stroke-width="1"/><line x1="81666.8" y1="6409.7" x2="669.8" y2="259.1" stroke="rgba(125,115,105,0.2)" stroke-width="1"/><line x1="-53725.1" y1="6409.7" x2="1096.3" y2="255.8" stroke="rgba(125,115,105,0.2)" stroke-width="1"/><line x1="83068.1" y1="6409.7" x2="673.4" y2="259.0" stroke="rgba(125,115,105,0.2)" stroke-width="1"/><line x1="-54749.1" y1="6409.7" x2="1093.5" y2="255.8" stroke="rgba(125,115,105,0.2)" stroke-width="1"/><line x1="84469.3" y1="6409.7" x2="677.0" y2="258.8" stroke="rgba(125,115,105,0.2)" stroke-width="1"/><line x1="-55773.2" y1="6409.7" x2="1090.7" y2="255.7" stroke="rgba(125,115,105,0.2)" stroke-width="1"/><line x1="85870.6" y1="6409.7" x2="680.5" y2="258.7" stroke="rgba(125,115,105,0.2)" stroke-width="1"/><line x1="-56797.3" y1="6409.7" x2="1088.0" y2="255.6" stroke="rgba(125,115,105,0.2)" stroke-width="1"/><line x1="87271.8" y1="6409.7" x2="684.0" y2="258.6" stroke="rgba(125,115,105,0.2)" stroke-width="1"/><line x1="-57821.3" y1="6409.7" x2="1085.3" y2="255.5" stroke="rgba(125,115,105,0.2)" stroke-width="1"/><line x1="88673.1" y1="6409.7" x2="687.5" y2="258.4" stroke="rgba(125,115,105,0.2)" stroke-width="1"/><line x1="-58845.4" y1="6409.7" x2="1082.5" y2="255.4" stroke="rgba(125,115,105,0.2)" stroke-width="1"/><line x1="90074.3" y1="6409.7" x2="690.9" y2="258.3" stroke="rgba(155,150,145,0.5)" stroke-width="1"/><line x1="-59869.4" y1="6409.7" x2="1079.9" y2="255.4" stroke="rgba(155,150,145,0.5)" stroke-width="1"/><line x1="91475.6" y1="6409.7" x2="694.2" y2="258.2" stroke="rgba(125,115,105,0.2)" stroke-width="1"/><line x1="-60893.5" y1="6409.7" x2="1077.2" y2="255.3" stroke="rgba(125,115,105,0.2)" stroke-width="1"/><line x1="92876.9" y1="6409.7" x2="697.6" y2="258.0" stroke="rgba(125,115,105,0.2)" stroke-width="1"/><line x1="-61917.6" y1="6409.7" x2="1074.5" y2="255.2" stroke="rgba(125,115,105,0.2)" stroke-width="1"/><line x1="94278.1" y1="6409.7" x2="700.9" y2="257.9" stroke="rgba(125,115,105,0.2)" stroke-width="1"/><line x1="-62941.6" y1="6409.7" x2="1071.9" y2="255.1" stroke="rgba(125,115,105,0.2)" stroke-width="1"/><line x1="95679.4" y1="6409.7" x2="704.1" y2="257.8" stroke="rgba(125,115,105,0.2)" stroke-width="1"/><line x1="-63965.7" y1="6409.7" x2="1069.3" y2="255.1" stroke="rgba(125,115,105,0.2)" stroke-width="1"/><line x1="97080.6" y1="6409.7" x2="707.4" y2="257.6" stroke="rgba(125,115,105,0.2)" stroke-width="1"/><line x1="-64989.8" y1="6409.7" x2="1066.7" y2="255.0" stroke="rgba(125,115,105,0.2)" stroke-width="1"/><line x1="98481.9" y1="6409.7" x2="710.6" y2="257.5" stroke="rgba(125,115,105,0.2)" stroke-width="1"/><line x1="-66013.8" y1="6409.7" x2="1064.1" y2="254.9" stroke="rgba(125,115,105,0.2)" stroke-width="1"/><line x1="99883.1" y1="6409.7" x2="713.7" y2="257.4" stroke="rgba(125,115,105,0.2)" stroke-width="1"/><line x1="-67037.9" y1="6409.7" x2="1061.6" y2="254.9" stroke="rgba(125,115,105,0.2)" stroke-width="1"/><line x1="101284.4" y1="6409.7" x2="716.8" y2="257.3" stroke="rgba(155,150,145,0.5)" stroke-width="1"/><line x1="-68062.0" y1="6409.7" x2="1059.0" y2="254.8" stroke="rgba(155,150,145,0.5)" stroke-width="1"/><line x1="102685.6" y1="6409.7" x2="719.9" y2="257.1" stroke="rgba(125,115,105,0.2)" stroke-width="1"/><line x1="-69086.0" y1="6409.7" x2="1056.5" y2="254.7" stroke="rgba(125,115,105,0.2)" stroke-width="1"/><line x1="104086.9" y1="6409.7" x2="723.0" y2="257.0" stroke="rgba(125,115,105,0.2)" stroke-width="1"/><line x1="-70110.1" y1="6409.7" x2="1054.0" y2="254.6" stroke="rgba(125,115,105,0.2)" stroke-width="1"/><line x1="105488.2" y1="6409.7" x2="726.0" y2="256.9" stroke="rgba(125,115,105,0.2)" stroke-width="1"/><line x1="-71134.1" y1="6409.7" x2="1051.5" y2="254.6" stroke="rgba(125,115,105,0.2)" stroke-width="1"/><line x1="106889.4" y1="6409.7" x2="729.0" y2="256.8" stroke="rgba(125,115,105,0.2)" stroke-width="1"/><line x1="-72158.2" y1="6409.7" x2="1049.1" y2="254.5" stroke="rgba(125,115,105,0.2)" stroke-width="1"/><line x1="108290.7" y1="6409.7" x2="731.9" y2="256.7" stroke="rgba(125,115,105,0.2)" stroke-width="1"/><line x1="-73182.3" y1="6409.7" x2="1046.6" y2="254.4" stroke="rgba(125,115,105,0.2)" stroke-width="1"/><line x1="109691.9" y1="6409.7" x2="734.9" y2="256.5" stroke="rgba(125,115,105,0.2)" stroke-width="1"/><line x1="-74206.3" y1="6409.7" x2="1044.2" y2="254.4" stroke="rgba(125,115,105,0.2)" stroke-width="1"/><line x1="111093.2" y1="6409.7" x2="737.8" y2="256.4" stroke="rgba(125,115,105,0.2)" stroke-width="1"/><line x1="-75230.4" y1="6409.7" x2="1041.8" y2="254.3" stroke="rgba(125,115,105,0.2)" stroke-width="1"/><line x1="112494.4" y1="6409.7" x2="740.6" y2="256.3" stroke="rgba(155,150,145,0.5)" stroke-width="1"/><line x1="-76254.5" y1="6409.7" x2="1039.4" y2="254.2" stroke="rgba(155,150,145,0.5)" stroke-width="1"/><line x1="113895.7" y1="6409.7" x2="743.5" y2="256.2" stroke="rgba(125,115,105,0.2)" stroke-width="1"/><line x1="-77278.5" y1="6409.7" x2="1037.0" y2="254.2" stroke="rgba(125,115,105,0.2)" stroke-width="1"/><line x1="115296.9" y1="6409.7" x2="746.3" y2="256.1" stroke="rgba(125,115,105,0.2)" stroke-width="1"/><line x1="-78302.6" y1="6409.7" x2="1034.6" y2="254.1" stroke="rgba(125,115,105,0.2)" stroke-width="1"/><line x1="116698.2" y1="6409.7" x2="749.0" y2="256.0" stroke="rgba(125,115,105,0.2)" stroke-width="1"/><line x1="-79326.6" y1="6409.7" x2="1032.3" y2="254.0" stroke="rgba(125,115,105,0.2)" stroke-width="1"/><line x1="118099.5" y1="6409.7" x2="751.8" y2="255.9" stroke="rgba(125,115,105,0.2)" stroke-width="1"/><line x1="-80350.7" y1="6409.7" x2="1029.9" y2="254.0" stroke="rgba(125,115,105,0.2)" stroke-width="1"/><line x1="119500.7" y1="6409.7" x2="754.5" y2="255.8" stroke="rgba(125,115,105,0.2)" stroke-width="1"/><line x1="-81374.8" y1="6409.7" x2="1027.6" y2="253.9" stroke="rgba(125,115,105,0.2)" stroke-width="1"/><line x1="120902.0" y1="6409.7" x2="757.2" y2="255.7" stroke="rgba(125,115,105,0.2)" stroke-width="1"/><line x1="-82398.8" y1="6409.7" x2="1025.3" y2="253.8" stroke="rgba(125,115,105,0.2)" stroke-width="1"/><line x1="122303.2" y1="6409.7" x2="759.9" y2="255.6" stroke="rgba(125,115,105,0.2)" stroke-width="1"/><line x1="-83422.9" y1="6409.7" x2="1023.0" y2="253.8" stroke="rgba(125,115,105,0.2)" stroke-width="1"/><line x1="123704.5" y1="6409.7" x2="762.5" y2="255.4" stroke="rgba(155,150,145,0.5)" stroke-width="1"/><line x1="-84447.0" y1="6409.7" x2="1020.8" y2="253.7" stroke="rgba(155,150,145,0.5)" stroke-width="1"/><line x1="125105.7" y1="6409.7" x2="765.1" y2="255.3" stroke="rgba(125,115,105,0.2)" stroke-width="1"/><line x1="-85471.0" y1="6409.7" x2="1018.5" y2="253.6" stroke="rgba(125,115,105,0.2)" stroke-width="1"/><line x1="126507.0" y1="6409.7" x2="767.7" y2="255.2" stroke="rgba(125,115,105,0.2)" stroke-width="1"/><line x1="-86495.1" y1="6409.7" x2="1016.3" y2="253.6" stroke="rgba(125,115,105,0.2)" stroke-width="1"/><line x1="127908.2" y1="6409.7" x2="770.3" y2="255.1" stroke="rgba(125,115,105,0.2)" stroke-width="1"/><line x1="-87519.1" y1="6409.7" x2="1014.0" y2="253.5" stroke="rgba(125,115,105,0.2)" stroke-width="1"/><line x1="129309.5" y1="6409.7" x2="772.8" y2="255.0" stroke="rgba(125,115,105,0.2)" stroke-width="1"/><line x1="-88543.2" y1="6409.7" x2="1011.8" y2="253.4" stroke="rgba(125,115,105,0.2)" stroke-width="1"/><line x1="130710.8" y1="6409.7" x2="775.3" y2="254.9" stroke="rgba(125,115,105,0.2)" stroke-width="1"/><line x1="-89567.3" y1="6409.7" x2="1009.6" y2="253.4" stroke="rgba(125,115,105,0.2)" stroke-width="1"/><line x1="132112.0" y1="6409.7" x2="777.8" y2="254.8" stroke="rgba(125,115,105,0.2)" stroke-width="1"/><line x1="-90591.3" y1="6409.7" x2="1007.5" y2="253.3" stroke="rgba(125,115,105,0.2)" stroke-width="1"/><line x1="69809.0" y1="3455.7" x2="780.3" y2="254.7" stroke="rgba(125,115,105,0.2)" stroke-width="1"/><line x1="-91615.4" y1="6409.7" x2="1005.3" y2="253.3" stroke="rgba(125,115,105,0.2)" stroke-width="1"/><line x1="39772.1" y1="2043.8" x2="782.7" y2="254.6" stroke="rgba(155,150,145,0.5)" stroke-width="1"/><line x1="-92639.5" y1="6409.7" x2="1003.1" y2="253.2" stroke="rgba(155,150,145,0.5)" stroke-width="1"/><line x1="28042.8" y1="1492.5" x2="785.1" y2="254.6" stroke="rgba(125,115,105,0.2)" stroke-width="1"/><line x1="-93663.5" y1="6409.7" x2="1001.0" y2="253.1" stroke="rgba(125,115,105,0.2)" stroke-width="1"/><line x1="21792.9" y1="1198.7" x2="787.5" y2="254.5" stroke="rgba(125,115,105,0.2)" stroke-width="1"/><line x1="-94687.6" y1="6409.7" x2="998.9" y2="253.1" stroke="rgba(125,115,105,0.2)" stroke-width="1"/><line x1="17909.7" y1="1016.2" x2="789.9" y2="254.4" stroke="rgba(125,115,105,0.2)" stroke-width="1"/><line x1="-95711.6" y1="6409.7" x2="996.8" y2="253.0" stroke="rgba(125,115,105,0.2)" stroke-width="1"/><line x1="15262.9" y1="891.8" x2="792.2" y2="254.3" stroke="rgba(125,115,105,0.2)" stroke-width="1"/><line x1="-96735.7" y1="6409.7" x2="994.7" y2="253.0" stroke="rgba(125,115,105,0.2)" stroke-width="1"/><line x1="13343.2" y1="801.5" x2="794.5" y2="254.2" stroke="rgba(125,115,105,0.2)" stroke-width="1"/><line x1="-97759.8" y1="6409.7" x2="992.6" y2="252.9" stroke="rgba(125,115,105,0.2)" stroke-width="1"/><line x1="11887.1" y1="733.1" x2="796.8" y2="254.1" stroke="rgba(125,115,105,0.2)" stroke-width="1"/><line x1="-98783.8" y1="6409.7" x2="990.5" y2="252.8" stroke="rgba(125,115,105,0.2)" stroke-width="1"/><line x1="10744.7" y1="679.4" x2="799.1" y2="254.0" stroke="rgba(125,115,105,0.2)" stroke-width="1"/><line x1="-99807.9" y1="6409.7" x2="988.4" y2="252.8" stroke="rgba(125,115,105,0.2)" stroke-width="1"/><line x1="9824.6" y1="636.1" x2="801.4" y2="253.9" stroke="rgba(155,150,145,0.5)" stroke-width="1"/><line x1="-100832.0" y1="6409.7" x2="986.4" y2="252.7" stroke="rgba(155,150,145,0.5)" stroke-width="1"/><line x1="9067.6" y1="600.5" x2="803.6" y2="253.8" stroke="rgba(125,115,105,0.2)" stroke-width="1"/><line x1="-101856.0" y1="6409.7" x2="984.4" y2="252.7" stroke="rgba(125,115,105,0.2)" stroke-width="1"/><line x1="8433.9" y1="570.8" x2="805.8" y2="253.7" stroke="rgba(125,115,105,0.2)" stroke-width="1"/><line x1="-102880.1" y1="6409.7" x2="982.3" y2="252.6" stroke="rgba(125,115,105,0.2)" stroke-width="1"/><line x1="7895.6" y1="545.5" x2="808.0" y2="253.6" stroke="rgba(125,115,105,0.2)" stroke-width="1"/><line x1="-103904.1" y1="6409.7" x2="980.3" y2="252.6" stroke="rgba(125,115,105,0.2)" stroke-width="1"/><line x1="7432.7" y1="523.7" x2="810.2" y2="253.6" stroke="rgba(125,115,105,0.2)" stroke-width="1"/><line x1="-104928.2" y1="6409.7" x2="978.4" y2="252.5" stroke="rgba(125,115,105,0.2)" stroke-width="1"/><line x1="7030.3" y1="504.8" x2="812.4" y2="253.5" stroke="rgba(125,115,105,0.2)" stroke-width="1"/><line x1="-105952.3" y1="6409.7" x2="976.4" y2="252.4" stroke="rgba(125,115,105,0.2)" stroke-width="1"/><line x1="6677.4" y1="488.2" x2="814.5" y2="253.4" stroke="rgba(125,115,105,0.2)" stroke-width="1"/><line x1="-106976.3" y1="6409.7" x2="974.4" y2="252.4" stroke="rgba(125,115,105,0.2)" stroke-width="1"/><line x1="6365.4" y1="473.5" x2="816.6" y2="253.3" stroke="rgba(125,115,105,0.2)" stroke-width="1"/><line x1="-108000.4" y1="6409.7" x2="972.4" y2="252.3" stroke="rgba(125,115,105,0.2)" stroke-width="1"/><line x1="6087.4" y1="460.5" x2="818.7" y2="253.2" stroke="rgba(155,150,145,0.5)" stroke-width="1"/><line x1="-109024.5" y1="6409.7" x2="970.5" y2="252.3" stroke="rgba(155,150,145,0.5)" stroke-width="1"/><line x1="5838.3" y1="448.8" x2="820.8" y2="253.1" stroke="rgba(125,115,105,0.2)" stroke-width="1"/><line x1="-110048.5" y1="6409.7" x2="968.6" y2="252.2" stroke="rgba(125,115,105,0.2)" stroke-width="1"/><line x1="5613.8" y1="438.2" x2="822.9" y2="253.1" stroke="rgba(125,115,105,0.2)" stroke-width="1"/><line x1="-111072.6" y1="6409.7" x2="966.6" y2="252.2" stroke="rgba(125,115,105,0.2)" stroke-width="1"/><line x1="5410.4" y1="428.6" x2="824.9" y2="253.0" stroke="rgba(125,115,105,0.2)" stroke-width="1"/><line x1="-112096.6" y1="6409.7" x2="964.7" y2="252.1" stroke="rgba(125,115,105,0.2)" stroke-width="1"/><line x1="5225.2" y1="419.9" x2="826.9" y2="252.9" stroke="rgba(125,115,105,0.2)" stroke-width="1"/><line x1="-113120.7" y1="6409.7" x2="962.8" y2="252.1" stroke="rgba(125,115,105,0.2)" stroke-width="1"/><line x1="5055.9" y1="412.0" x2="828.9" y2="252.8" stroke="rgba(125,115,105,0.2)" stroke-width="1"/><line x1="-114144.8" y1="6409.7" x2="961.0" y2="252.0" stroke="rgba(125,115,105,0.2)" stroke-width="1"/><line x1="4900.6" y1="404.7" x2="830.9" y2="252.7" stroke="rgba(125,115,105,0.2)" stroke-width="1"/><line x1="-115168.8" y1="6409.7" x2="959.1" y2="252.0" stroke="rgba(125,115,105,0.2)" stroke-width="1"/><line x1="4757.6" y1="398.0" x2="832.9" y2="252.7" stroke="rgba(125,115,105,0.2)" stroke-width="1"/><line x1="-116192.9" y1="6409.7" x2="957.2" y2="251.9" stroke="rgba(125,115,105,0.2)" stroke-width="1"/><line x1="4625.4" y1="391.7" x2="834.9" y2="252.6" stroke="rgba(155,150,145,0.5)" stroke-width="1"/><line x1="-117217.0" y1="6409.7" x2="955.4" y2="251.9" stroke="rgba(155,150,145,0.5)" stroke-width="1"/><line x1="4503.0" y1="386.0" x2="836.8" y2="252.5" stroke="rgba(125,115,105,0.2)" stroke-width="1"/><line x1="-118241.0" y1="6409.7" x2="953.5" y2="251.8" stroke="rgba(125,115,105,0.2)" stroke-width="1"/><line x1="4389.2" y1="380.6" x2="838.7" y2="252.4" stroke="rgba(125,115,105,0.2)" stroke-width="1"/><line x1="-119265.1" y1="6409.7" x2="951.7" y2="251.8" stroke="rgba(125,115,105,0.2)" stroke-width="1"/><line x1="4283.2" y1="375.6" x2="840.6" y2="252.3" stroke="rgba(125,115,105,0.2)" stroke-width="1"/><line x1="-120289.1" y1="6409.7" x2="949.9" y2="251.7" stroke="rgba(125,115,105,0.2)" stroke-width="1"/><line x1="4184.1" y1="371.0" x2="842.5" y2="252.3" stroke="rgba(125,115,105,0.2)" stroke-width="1"/><line x1="-121313.2" y1="6409.7" x2="948.1" y2="251.6" stroke="rgba(125,115,105,0.2)" stroke-width="1"/><line x1="4091.4" y1="366.6" x2="844.4" y2="252.2" stroke="rgba(125,115,105,0.2)" stroke-width="1"/><line x1="-122337.3" y1="6409.7" x2="946.3" y2="251.6" stroke="rgba(125,115,105,0.2)" stroke-width="1"/><line x1="4004.5" y1="362.6" x2="846.2" y2="252.1" stroke="rgba(125,115,105,0.2)" stroke-width="1"/><line x1="-123361.3" y1="6409.7" x2="944.5" y2="251.5" stroke="rgba(125,115,105,0.2)" stroke-width="1"/><line x1="3922.8" y1="358.7" x2="848.1" y2="252.0" stroke="rgba(125,115,105,0.2)" stroke-width="1"/><line x1="-124385.4" y1="6409.7" x2="942.7" y2="251.5" stroke="rgba(125,115,105,0.2)" stroke-width="1"/><line x1="3845.8" y1="355.1" x2="849.9" y2="252.0" stroke="rgba(155,150,145,0.5)" stroke-width="1"/><line x1="-125409.5" y1="6409.7" x2="941.0" y2="251.4" stroke="rgba(155,150,145,0.5)" stroke-width="1"/><line x1="3773.2" y1="351.7" x2="851.7" y2="251.9" stroke="rgba(125,115,105,0.2)" stroke-width="1"/><line x1="-126433.5" y1="6409.7" x2="939.2" y2="251.4" stroke="rgba(125,115,105,0.2)" stroke-width="1"/><line x1="3704.6" y1="348.5" x2="853.5" y2="251.8" stroke="rgba(125,115,105,0.2)" stroke-width="1"/><line x1="-127457.6" y1="6409.7" x2="937.5" y2="251.3" stroke="rgba(125,115,105,0.2)" stroke-width="1"/><line x1="3639.7" y1="345.4" x2="855.3" y2="251.8" stroke="rgba(125,115,105,0.2)" stroke-width="1"/><line x1="-128481.7" y1="6409.7" x2="935.7" y2="251.3" stroke="rgba(125,115,105,0.2)" stroke-width="1"/><line x1="3578.2" y1="342.5" x2="857.1" y2="251.7" stroke="rgba(125,115,105,0.2)" stroke-width="1"/><line x1="-129505.7" y1="6409.7" x2="934.0" y2="251.3" stroke="rgba(125,115,105,0.2)" stroke-width="1"/><line x1="3519.8" y1="339.8" x2="858.8" y2="251.6" stroke="rgba(125,115,105,0.2)" stroke-width="1"/><line x1="-130529.8" y1="6409.7" x2="932.3" y2="251.2" stroke="rgba(125,115,105,0.2)" stroke-width="1"/><line x1="3464.3" y1="337.2" x2="860.6" y2="251.6" stroke="rgba(125,115,105,0.2)" stroke-width="1"/><line x1="-131553.8" y1="6409.7" x2="930.6" y2="251.2" stroke="rgba(125,115,105,0.2)" stroke-width="1"/><line x1="3411.5" y1="334.7" x2="862.3" y2="251.5" stroke="rgba(125,115,105,0.2)" stroke-width="1"/><line x1="-132577.9" y1="6409.7" x2="928.9" y2="251.1" stroke="rgba(125,115,105,0.2)" stroke-width="1"/><line x1="3361.2" y1="332.3" x2="864.0" y2="251.4" stroke="rgba(155,150,145,0.5)" stroke-width="1"/><line x1="-133602.0" y1="6409.7" x2="927.2" y2="251.1" stroke="rgba(155,150,145,0.5)" stroke-width="1"/></g>
<g mask="url(#mfog)"><g mask="url(#mor)"><line x1="-145336.6" y1="6409.7" x2="-13742.6" y2="831.9" stroke="rgba(196,132,48,0.56)" stroke-width="1"/><line x1="112173.1" y1="6409.7" x2="2248.4" y2="288.4" stroke="rgba(196,132,48,0.56)" stroke-width="1"/><line x1="-143935.4" y1="6409.7" x2="-11842.9" y2="756.4" stroke="rgba(196,132,48,0.56)" stroke-width="1"/><line x1="111149.0" y1="6409.7" x2="2230.5" y2="287.9" stroke="rgba(196,132,48,0.56)" stroke-width="1"/><line x1="-142534.1" y1="6409.7" x2="-10369.6" y2="697.9" stroke="rgba(196,132,48,0.56)" stroke-width="1"/><line x1="110125.0" y1="6409.7" x2="2212.9" y2="287.4" stroke="rgba(196,132,48,0.56)" stroke-width="1"/><line x1="-141132.9" y1="6409.7" x2="-9193.6" y2="651.2" stroke="rgba(196,132,48,0.56)" stroke-width="1"/><line x1="109100.9" y1="6409.7" x2="2195.7" y2="286.9" stroke="rgba(196,132,48,0.56)" stroke-width="1"/><line x1="-139731.6" y1="6409.7" x2="-8233.2" y2="613.0" stroke="rgba(196,132,48,0.56)" stroke-width="1"/><line x1="108076.8" y1="6409.7" x2="2178.8" y2="286.4" stroke="rgba(196,132,48,0.56)" stroke-width="1"/><line x1="-138330.4" y1="6409.7" x2="-7434.1" y2="581.2" stroke="rgba(196,132,48,0.56)" stroke-width="1"/><line x1="107052.8" y1="6409.7" x2="2162.2" y2="285.9" stroke="rgba(196,132,48,0.56)" stroke-width="1"/><line x1="-136929.1" y1="6409.7" x2="-6758.8" y2="554.4" stroke="rgba(196,132,48,0.56)" stroke-width="1"/><line x1="106028.7" y1="6409.7" x2="2145.8" y2="285.5" stroke="rgba(196,132,48,0.56)" stroke-width="1"/><line x1="-135527.8" y1="6409.7" x2="-6180.6" y2="531.4" stroke="rgba(196,132,48,0.56)" stroke-width="1"/><line x1="105004.6" y1="6409.7" x2="2129.8" y2="285.0" stroke="rgba(196,132,48,0.56)" stroke-width="1"/><line x1="-134126.6" y1="6409.7" x2="-5679.9" y2="511.5" stroke="rgba(196,132,48,0.56)" stroke-width="1"/><line x1="103980.6" y1="6409.7" x2="2114.1" y2="284.6" stroke="rgba(196,132,48,0.56)" stroke-width="1"/><line x1="-132725.3" y1="6409.7" x2="-5242.2" y2="494.1" stroke="rgba(196,132,48,0.56)" stroke-width="1"/><line x1="102956.5" y1="6409.7" x2="2098.6" y2="284.1" stroke="rgba(196,132,48,0.56)" stroke-width="1"/><line x1="-131324.1" y1="6409.7" x2="-4856.2" y2="478.8" stroke="rgba(196,132,48,0.56)" stroke-width="1"/><line x1="101932.5" y1="6409.7" x2="2083.4" y2="283.7" stroke="rgba(196,132,48,0.56)" stroke-width="1"/><line x1="-129922.8" y1="6409.7" x2="-4513.3" y2="465.1" stroke="rgba(196,132,48,0.56)" stroke-width="1"/><line x1="100908.4" y1="6409.7" x2="2068.5" y2="283.3" stroke="rgba(196,132,48,0.56)" stroke-width="1"/><line x1="-128521.6" y1="6409.7" x2="-4206.7" y2="453.0" stroke="rgba(196,132,48,0.56)" stroke-width="1"/><line x1="99884.3" y1="6409.7" x2="2053.8" y2="282.9" stroke="rgba(196,132,48,0.56)" stroke-width="1"/><line x1="-127120.3" y1="6409.7" x2="-3930.9" y2="442.0" stroke="rgba(196,132,48,0.56)" stroke-width="1"/><line x1="98860.3" y1="6409.7" x2="2039.4" y2="282.5" stroke="rgba(196,132,48,0.56)" stroke-width="1"/><line x1="-125719.1" y1="6409.7" x2="-3681.5" y2="432.1" stroke="rgba(196,132,48,0.56)" stroke-width="1"/><line x1="97836.2" y1="6409.7" x2="2025.2" y2="282.1" stroke="rgba(196,132,48,0.56)" stroke-width="1"/><line x1="-124317.8" y1="6409.7" x2="-3454.9" y2="423.1" stroke="rgba(196,132,48,0.56)" stroke-width="1"/><line x1="96812.1" y1="6409.7" x2="2011.3" y2="281.7" stroke="rgba(196,132,48,0.56)" stroke-width="1"/><line x1="-122916.5" y1="6409.7" x2="-3248.0" y2="414.8" stroke="rgba(196,132,48,0.56)" stroke-width="1"/><line x1="95788.1" y1="6409.7" x2="1997.5" y2="281.3" stroke="rgba(196,132,48,0.56)" stroke-width="1"/><line x1="-121515.3" y1="6409.7" x2="-3058.4" y2="407.3" stroke="rgba(196,132,48,0.56)" stroke-width="1"/><line x1="94764.0" y1="6409.7" x2="1984.0" y2="280.9" stroke="rgba(196,132,48,0.56)" stroke-width="1"/><line x1="-120114.0" y1="6409.7" x2="-2884.1" y2="400.4" stroke="rgba(196,132,48,0.56)" stroke-width="1"/><line x1="93740.0" y1="6409.7" x2="1970.8" y2="280.5" stroke="rgba(196,132,48,0.56)" stroke-width="1"/><line x1="-118712.8" y1="6409.7" x2="-2723.2" y2="394.0" stroke="rgba(196,132,48,0.56)" stroke-width="1"/><line x1="92715.9" y1="6409.7" x2="1957.7" y2="280.2" stroke="rgba(196,132,48,0.56)" stroke-width="1"/><line x1="-117311.5" y1="6409.7" x2="-2574.3" y2="388.1" stroke="rgba(196,132,48,0.56)" stroke-width="1"/><line x1="91691.8" y1="6409.7" x2="1944.8" y2="279.8" stroke="rgba(196,132,48,0.56)" stroke-width="1"/><line x1="-115910.3" y1="6409.7" x2="-2436.0" y2="382.6" stroke="rgba(196,132,48,0.56)" stroke-width="1"/><line x1="90667.8" y1="6409.7" x2="1932.2" y2="279.4" stroke="rgba(196,132,48,0.56)" stroke-width="1"/><line x1="-114509.0" y1="6409.7" x2="-2307.3" y2="377.5" stroke="rgba(196,132,48,0.56)" stroke-width="1"/><line x1="89643.7" y1="6409.7" x2="1919.7" y2="279.1" stroke="rgba(196,132,48,0.56)" stroke-width="1"/><line x1="-113107.8" y1="6409.7" x2="-2187.2" y2="372.7" stroke="rgba(196,132,48,0.56)" stroke-width="1"/><line x1="88619.6" y1="6409.7" x2="1907.5" y2="278.7" stroke="rgba(196,132,48,0.56)" stroke-width="1"/><line x1="-111706.5" y1="6409.7" x2="-2074.9" y2="368.2" stroke="rgba(196,132,48,0.56)" stroke-width="1"/><line x1="87595.6" y1="6409.7" x2="1895.4" y2="278.4" stroke="rgba(196,132,48,0.56)" stroke-width="1"/><line x1="-110305.2" y1="6409.7" x2="-1969.6" y2="364.0" stroke="rgba(196,132,48,0.56)" stroke-width="1"/><line x1="86571.5" y1="6409.7" x2="1883.5" y2="278.1" stroke="rgba(196,132,48,0.56)" stroke-width="1"/><line x1="-108904.0" y1="6409.7" x2="-1870.8" y2="360.1" stroke="rgba(196,132,48,0.56)" stroke-width="1"/><line x1="85547.5" y1="6409.7" x2="1871.8" y2="277.7" stroke="rgba(196,132,48,0.56)" stroke-width="1"/><line x1="-107502.7" y1="6409.7" x2="-1777.7" y2="356.4" stroke="rgba(196,132,48,0.56)" stroke-width="1"/><line x1="84523.4" y1="6409.7" x2="1860.3" y2="277.4" stroke="rgba(196,132,48,0.56)" stroke-width="1"/><line x1="-106101.5" y1="6409.7" x2="-1690.0" y2="352.9" stroke="rgba(196,132,48,0.56)" stroke-width="1"/><line x1="83499.3" y1="6409.7" x2="1849.0" y2="277.1" stroke="rgba(196,132,48,0.56)" stroke-width="1"/><line x1="-104700.2" y1="6409.7" x2="-1607.2" y2="349.6" stroke="rgba(196,132,48,0.56)" stroke-width="1"/><line x1="82475.3" y1="6409.7" x2="1837.8" y2="276.8" stroke="rgba(196,132,48,0.56)" stroke-width="1"/><line x1="-103299.0" y1="6409.7" x2="-1528.8" y2="346.5" stroke="rgba(196,132,48,0.56)" stroke-width="1"/><line x1="81451.2" y1="6409.7" x2="1826.8" y2="276.5" stroke="rgba(196,132,48,0.56)" stroke-width="1"/><line x1="-101897.7" y1="6409.7" x2="-1454.6" y2="343.6" stroke="rgba(196,132,48,0.56)" stroke-width="1"/><line x1="80427.1" y1="6409.7" x2="1815.9" y2="276.2" stroke="rgba(196,132,48,0.56)" stroke-width="1"/><line x1="-100496.4" y1="6409.7" x2="-1384.2" y2="340.8" stroke="rgba(196,132,48,0.56)" stroke-width="1"/><line x1="79403.1" y1="6409.7" x2="1805.2" y2="275.9" stroke="rgba(196,132,48,0.56)" stroke-width="1"/><line x1="-99095.2" y1="6409.7" x2="-1317.3" y2="338.1" stroke="rgba(196,132,48,0.56)" stroke-width="1"/><line x1="78379.0" y1="6409.7" x2="1794.7" y2="275.6" stroke="rgba(196,132,48,0.56)" stroke-width="1"/><line x1="-97693.9" y1="6409.7" x2="-1253.7" y2="335.6" stroke="rgba(196,132,48,0.56)" stroke-width="1"/><line x1="77355.0" y1="6409.7" x2="1784.3" y2="275.3" stroke="rgba(196,132,48,0.56)" stroke-width="1"/><line x1="-96292.7" y1="6409.7" x2="-1193.2" y2="333.2" stroke="rgba(196,132,48,0.56)" stroke-width="1"/><line x1="76330.9" y1="6409.7" x2="1774.0" y2="275.0" stroke="rgba(196,132,48,0.56)" stroke-width="1"/><line x1="-94891.4" y1="6409.7" x2="-1135.4" y2="330.9" stroke="rgba(196,132,48,0.56)" stroke-width="1"/><line x1="75306.8" y1="6409.7" x2="1763.9" y2="274.7" stroke="rgba(196,132,48,0.56)" stroke-width="1"/><line x1="-93490.2" y1="6409.7" x2="-1080.3" y2="328.7" stroke="rgba(196,132,48,0.56)" stroke-width="1"/><line x1="74282.8" y1="6409.7" x2="1754.0" y2="274.4" stroke="rgba(196,132,48,0.56)" stroke-width="1"/><line x1="-92088.9" y1="6409.7" x2="-1027.7" y2="326.6" stroke="rgba(196,132,48,0.56)" stroke-width="1"/><line x1="73258.7" y1="6409.7" x2="1744.2" y2="274.1" stroke="rgba(196,132,48,0.56)" stroke-width="1"/><line x1="-90687.7" y1="6409.7" x2="-977.3" y2="324.6" stroke="rgba(196,132,48,0.56)" stroke-width="1"/><line x1="72234.6" y1="6409.7" x2="1734.5" y2="273.9" stroke="rgba(196,132,48,0.56)" stroke-width="1"/><line x1="-89286.4" y1="6409.7" x2="-929.1" y2="322.7" stroke="rgba(196,132,48,0.56)" stroke-width="1"/><line x1="71210.6" y1="6409.7" x2="1724.9" y2="273.6" stroke="rgba(196,132,48,0.56)" stroke-width="1"/><line x1="-87885.1" y1="6409.7" x2="-882.9" y2="320.8" stroke="rgba(196,132,48,0.56)" stroke-width="1"/><line x1="70186.5" y1="6409.7" x2="1715.5" y2="273.3" stroke="rgba(196,132,48,0.56)" stroke-width="1"/><line x1="-86483.9" y1="6409.7" x2="-838.6" y2="319.1" stroke="rgba(196,132,48,0.56)" stroke-width="1"/><line x1="69162.5" y1="6409.7" x2="1706.2" y2="273.1" stroke="rgba(196,132,48,0.56)" stroke-width="1"/><line x1="-85082.6" y1="6409.7" x2="-796.0" y2="317.4" stroke="rgba(196,132,48,0.56)" stroke-width="1"/><line x1="68138.4" y1="6409.7" x2="1697.1" y2="272.8" stroke="rgba(196,132,48,0.56)" stroke-width="1"/><line x1="-83681.4" y1="6409.7" x2="-755.2" y2="315.8" stroke="rgba(196,132,48,0.56)" stroke-width="1"/><line x1="67114.3" y1="6409.7" x2="1688.0" y2="272.5" stroke="rgba(196,132,48,0.56)" stroke-width="1"/><line x1="-82280.1" y1="6409.7" x2="-715.9" y2="314.2" stroke="rgba(196,132,48,0.56)" stroke-width="1"/><line x1="66090.3" y1="6409.7" x2="1679.1" y2="272.3" stroke="rgba(196,132,48,0.56)" stroke-width="1"/><line x1="-80878.9" y1="6409.7" x2="-678.1" y2="312.7" stroke="rgba(196,132,48,0.56)" stroke-width="1"/><line x1="65066.2" y1="6409.7" x2="1670.3" y2="272.0" stroke="rgba(196,132,48,0.56)" stroke-width="1"/><line x1="-79477.6" y1="6409.7" x2="-641.6" y2="311.3" stroke="rgba(196,132,48,0.56)" stroke-width="1"/><line x1="64042.1" y1="6409.7" x2="1661.6" y2="271.8" stroke="rgba(196,132,48,0.56)" stroke-width="1"/><line x1="-78076.4" y1="6409.7" x2="-606.6" y2="309.9" stroke="rgba(196,132,48,0.56)" stroke-width="1"/><line x1="63018.1" y1="6409.7" x2="1653.0" y2="271.6" stroke="rgba(196,132,48,0.56)" stroke-width="1"/><line x1="-76675.1" y1="6409.7" x2="-572.7" y2="308.5" stroke="rgba(196,132,48,0.56)" stroke-width="1"/><line x1="61994.0" y1="6409.7" x2="1644.6" y2="271.3" stroke="rgba(196,132,48,0.56)" stroke-width="1"/><line x1="-75273.8" y1="6409.7" x2="-540.1" y2="307.2" stroke="rgba(196,132,48,0.56)" stroke-width="1"/><line x1="60970.0" y1="6409.7" x2="1636.2" y2="271.1" stroke="rgba(196,132,48,0.56)" stroke-width="1"/><line x1="-73872.6" y1="6409.7" x2="-508.6" y2="306.0" stroke="rgba(196,132,48,0.56)" stroke-width="1"/><line x1="59945.9" y1="6409.7" x2="1628.0" y2="270.8" stroke="rgba(196,132,48,0.56)" stroke-width="1"/><line x1="-72471.3" y1="6409.7" x2="-478.2" y2="304.8" stroke="rgba(196,132,48,0.56)" stroke-width="1"/><line x1="58921.8" y1="6409.7" x2="1619.8" y2="270.6" stroke="rgba(196,132,48,0.56)" stroke-width="1"/><line x1="-71070.1" y1="6409.7" x2="-448.7" y2="303.6" stroke="rgba(196,132,48,0.56)" stroke-width="1"/><line x1="57897.8" y1="6409.7" x2="1611.8" y2="270.4" stroke="rgba(196,132,48,0.56)" stroke-width="1"/><line x1="-69668.8" y1="6409.7" x2="-420.3" y2="302.5" stroke="rgba(196,132,48,0.56)" stroke-width="1"/><line x1="56873.7" y1="6409.7" x2="1603.9" y2="270.2" stroke="rgba(196,132,48,0.56)" stroke-width="1"/><line x1="-68267.6" y1="6409.7" x2="-392.7" y2="301.4" stroke="rgba(196,132,48,0.56)" stroke-width="1"/><line x1="55849.6" y1="6409.7" x2="1596.0" y2="269.9" stroke="rgba(196,132,48,0.56)" stroke-width="1"/><line x1="-66866.3" y1="6409.7" x2="-366.1" y2="300.3" stroke="rgba(196,132,48,0.56)" stroke-width="1"/><line x1="54825.6" y1="6409.7" x2="1588.3" y2="269.7" stroke="rgba(196,132,48,0.56)" stroke-width="1"/><line x1="-65465.1" y1="6409.7" x2="-340.3" y2="299.3" stroke="rgba(196,132,48,0.56)" stroke-width="1"/><line x1="53801.5" y1="6409.7" x2="1580.6" y2="269.5" stroke="rgba(196,132,48,0.56)" stroke-width="1"/><line x1="-64063.8" y1="6409.7" x2="-315.2" y2="298.3" stroke="rgba(196,132,48,0.56)" stroke-width="1"/><line x1="52777.4" y1="6409.7" x2="1573.1" y2="269.3" stroke="rgba(196,132,48,0.56)" stroke-width="1"/><line x1="-62662.5" y1="6409.7" x2="-291.0" y2="297.3" stroke="rgba(196,132,48,0.56)" stroke-width="1"/><line x1="51753.4" y1="6409.7" x2="1565.6" y2="269.1" stroke="rgba(196,132,48,0.56)" stroke-width="1"/><line x1="-61261.3" y1="6409.7" x2="-267.4" y2="296.4" stroke="rgba(196,132,48,0.56)" stroke-width="1"/><line x1="50729.3" y1="6409.7" x2="1558.2" y2="268.9" stroke="rgba(196,132,48,0.56)" stroke-width="1"/><line x1="-59860.0" y1="6409.7" x2="-244.6" y2="295.5" stroke="rgba(196,132,48,0.56)" stroke-width="1"/><line x1="49705.3" y1="6409.7" x2="1551.0" y2="268.7" stroke="rgba(196,132,48,0.56)" stroke-width="1"/><line x1="-58458.8" y1="6409.7" x2="-222.4" y2="294.6" stroke="rgba(196,132,48,0.56)" stroke-width="1"/><line x1="48681.2" y1="6409.7" x2="1543.8" y2="268.5" stroke="rgba(196,132,48,0.56)" stroke-width="1"/><line x1="-57057.5" y1="6409.7" x2="-200.8" y2="293.7" stroke="rgba(196,132,48,0.56)" stroke-width="1"/><line x1="47657.1" y1="6409.7" x2="1536.7" y2="268.3" stroke="rgba(196,132,48,0.56)" stroke-width="1"/><line x1="-55656.3" y1="6409.7" x2="-179.9" y2="292.9" stroke="rgba(196,132,48,0.56)" stroke-width="1"/><line x1="46633.1" y1="6409.7" x2="1529.6" y2="268.1" stroke="rgba(196,132,48,0.56)" stroke-width="1"/><line x1="-54255.0" y1="6409.7" x2="-159.5" y2="292.1" stroke="rgba(196,132,48,0.56)" stroke-width="1"/><line x1="45609.0" y1="6409.7" x2="1522.7" y2="267.9" stroke="rgba(196,132,48,0.56)" stroke-width="1"/><line x1="-52853.8" y1="6409.7" x2="-139.7" y2="291.3" stroke="rgba(196,132,48,0.56)" stroke-width="1"/><line x1="44584.9" y1="6409.7" x2="1515.8" y2="267.7" stroke="rgba(196,132,48,0.56)" stroke-width="1"/><line x1="-51452.5" y1="6409.7" x2="-120.4" y2="290.5" stroke="rgba(196,132,48,0.56)" stroke-width="1"/><line x1="43560.9" y1="6409.7" x2="1509.1" y2="267.5" stroke="rgba(196,132,48,0.56)" stroke-width="1"/><line x1="-50051.2" y1="6409.7" x2="-101.7" y2="289.8" stroke="rgba(196,132,48,0.56)" stroke-width="1"/><line x1="42536.8" y1="6409.7" x2="1502.4" y2="267.3" stroke="rgba(196,132,48,0.56)" stroke-width="1"/><line x1="-48650.0" y1="6409.7" x2="-83.4" y2="289.1" stroke="rgba(196,132,48,0.56)" stroke-width="1"/><line x1="41512.8" y1="6409.7" x2="1495.7" y2="267.1" stroke="rgba(196,132,48,0.56)" stroke-width="1"/><line x1="-47248.7" y1="6409.7" x2="-65.6" y2="288.4" stroke="rgba(196,132,48,0.56)" stroke-width="1"/><line x1="40488.7" y1="6409.7" x2="1489.2" y2="266.9" stroke="rgba(196,132,48,0.56)" stroke-width="1"/><line x1="-45847.5" y1="6409.7" x2="-48.3" y2="287.7" stroke="rgba(196,132,48,0.56)" stroke-width="1"/><line x1="39464.6" y1="6409.7" x2="1482.7" y2="266.7" stroke="rgba(196,132,48,0.56)" stroke-width="1"/><line x1="-44446.2" y1="6409.7" x2="-31.4" y2="287.0" stroke="rgba(196,132,48,0.56)" stroke-width="1"/><line x1="38440.6" y1="6409.7" x2="1476.3" y2="266.6" stroke="rgba(196,132,48,0.56)" stroke-width="1"/><line x1="-43045.0" y1="6409.7" x2="-14.9" y2="286.3" stroke="rgba(196,132,48,0.56)" stroke-width="1"/><line x1="37416.5" y1="6409.7" x2="1470.0" y2="266.4" stroke="rgba(196,132,48,0.56)" stroke-width="1"/><line x1="-41643.7" y1="6409.7" x2="1.1" y2="285.7" stroke="rgba(196,132,48,0.56)" stroke-width="1"/><line x1="36392.4" y1="6409.7" x2="1463.7" y2="266.2" stroke="rgba(196,132,48,0.56)" stroke-width="1"/><line x1="-40242.4" y1="6409.7" x2="16.8" y2="285.1" stroke="rgba(196,132,48,0.56)" stroke-width="1"/><line x1="35368.4" y1="6409.7" x2="1457.5" y2="266.0" stroke="rgba(196,132,48,0.56)" stroke-width="1"/><line x1="-38841.2" y1="6409.7" x2="32.1" y2="284.5" stroke="rgba(196,132,48,0.56)" stroke-width="1"/><line x1="34344.3" y1="6409.7" x2="1451.4" y2="265.9" stroke="rgba(196,132,48,0.56)" stroke-width="1"/><line x1="-37439.9" y1="6409.7" x2="47.0" y2="283.9" stroke="rgba(196,132,48,0.56)" stroke-width="1"/><line x1="33320.3" y1="6409.7" x2="1445.3" y2="265.7" stroke="rgba(196,132,48,0.56)" stroke-width="1"/><line x1="-36038.7" y1="6409.7" x2="61.6" y2="283.3" stroke="rgba(196,132,48,0.56)" stroke-width="1"/><line x1="32296.2" y1="6409.7" x2="1439.4" y2="265.5" stroke="rgba(196,132,48,0.56)" stroke-width="1"/><line x1="-34637.4" y1="6409.7" x2="75.8" y2="282.7" stroke="rgba(196,132,48,0.56)" stroke-width="1"/><line x1="31272.1" y1="6409.7" x2="1433.4" y2="265.4" stroke="rgba(196,132,48,0.56)" stroke-width="1"/><line x1="-33236.2" y1="6409.7" x2="89.7" y2="282.2" stroke="rgba(196,132,48,0.56)" stroke-width="1"/><line x1="30248.1" y1="6409.7" x2="1427.6" y2="265.2" stroke="rgba(196,132,48,0.56)" stroke-width="1"/><line x1="-31834.9" y1="6409.7" x2="103.3" y2="281.6" stroke="rgba(196,132,48,0.56)" stroke-width="1"/><line x1="29224.0" y1="6409.7" x2="1421.8" y2="265.0" stroke="rgba(196,132,48,0.56)" stroke-width="1"/><line x1="-30433.7" y1="6409.7" x2="116.6" y2="281.1" stroke="rgba(196,132,48,0.56)" stroke-width="1"/><line x1="28199.9" y1="6409.7" x2="1416.0" y2="264.9" stroke="rgba(196,132,48,0.56)" stroke-width="1"/><line x1="-29032.4" y1="6409.7" x2="129.6" y2="280.6" stroke="rgba(196,132,48,0.56)" stroke-width="1"/><line x1="27175.9" y1="6409.7" x2="1410.4" y2="264.7" stroke="rgba(196,132,48,0.56)" stroke-width="1"/><line x1="-27631.1" y1="6409.7" x2="142.3" y2="280.1" stroke="rgba(196,132,48,0.56)" stroke-width="1"/><line x1="26151.8" y1="6409.7" x2="1404.7" y2="264.5" stroke="rgba(196,132,48,0.56)" stroke-width="1"/><line x1="-26229.9" y1="6409.7" x2="154.7" y2="279.6" stroke="rgba(196,132,48,0.56)" stroke-width="1"/><line x1="25127.8" y1="6409.7" x2="1399.2" y2="264.4" stroke="rgba(196,132,48,0.56)" stroke-width="1"/><line x1="-24828.6" y1="6409.7" x2="166.9" y2="279.1" stroke="rgba(196,132,48,0.56)" stroke-width="1"/><line x1="24103.7" y1="6409.7" x2="1393.7" y2="264.2" stroke="rgba(196,132,48,0.56)" stroke-width="1"/><line x1="-23427.4" y1="6409.7" x2="178.8" y2="278.6" stroke="rgba(196,132,48,0.56)" stroke-width="1"/><line x1="23079.6" y1="6409.7" x2="1388.3" y2="264.1" stroke="rgba(196,132,48,0.56)" stroke-width="1"/><line x1="-22026.1" y1="6409.7" x2="190.4" y2="278.2" stroke="rgba(196,132,48,0.56)" stroke-width="1"/><line x1="22055.6" y1="6409.7" x2="1382.9" y2="263.9" stroke="rgba(196,132,48,0.56)" stroke-width="1"/><line x1="-20624.9" y1="6409.7" x2="201.9" y2="277.7" stroke="rgba(196,132,48,0.56)" stroke-width="1"/><line x1="21031.5" y1="6409.7" x2="1377.5" y2="263.8" stroke="rgba(196,132,48,0.56)" stroke-width="1"/><line x1="-19223.6" y1="6409.7" x2="213.0" y2="277.3" stroke="rgba(196,132,48,0.56)" stroke-width="1"/><line x1="20007.4" y1="6409.7" x2="1372.3" y2="263.6" stroke="rgba(196,132,48,0.56)" stroke-width="1"/><line x1="-17822.4" y1="6409.7" x2="224.0" y2="276.9" stroke="rgba(196,132,48,0.56)" stroke-width="1"/><line x1="18983.4" y1="6409.7" x2="1367.0" y2="263.5" stroke="rgba(196,132,48,0.56)" stroke-width="1"/><line x1="-16421.1" y1="6409.7" x2="234.7" y2="276.4" stroke="rgba(196,132,48,0.56)" stroke-width="1"/><line x1="17959.3" y1="6409.7" x2="1361.9" y2="263.3" stroke="rgba(196,132,48,0.56)" stroke-width="1"/><line x1="-15019.8" y1="6409.7" x2="245.2" y2="276.0" stroke="rgba(196,132,48,0.56)" stroke-width="1"/><line x1="16935.3" y1="6409.7" x2="1356.8" y2="263.2" stroke="rgba(196,132,48,0.56)" stroke-width="1"/><line x1="-13618.6" y1="6409.7" x2="255.5" y2="275.6" stroke="rgba(196,132,48,0.56)" stroke-width="1"/><line x1="15911.2" y1="6409.7" x2="1351.7" y2="263.0" stroke="rgba(196,132,48,0.56)" stroke-width="1"/><line x1="-12217.3" y1="6409.7" x2="265.6" y2="275.2" stroke="rgba(196,132,48,0.56)" stroke-width="1"/><line x1="14887.1" y1="6409.7" x2="1346.7" y2="262.9" stroke="rgba(196,132,48,0.56)" stroke-width="1"/><line x1="-10816.1" y1="6409.7" x2="275.5" y2="274.8" stroke="rgba(196,132,48,0.56)" stroke-width="1"/><line x1="13863.1" y1="6409.7" x2="1341.7" y2="262.8" stroke="rgba(196,132,48,0.56)" stroke-width="1"/><line x1="-9414.8" y1="6409.7" x2="285.2" y2="274.4" stroke="rgba(196,132,48,0.56)" stroke-width="1"/><line x1="12839.0" y1="6409.7" x2="1336.8" y2="262.6" stroke="rgba(196,132,48,0.56)" stroke-width="1"/><line x1="-8013.6" y1="6409.7" x2="294.7" y2="274.0" stroke="rgba(196,132,48,0.56)" stroke-width="1"/><line x1="11814.9" y1="6409.7" x2="1331.9" y2="262.5" stroke="rgba(196,132,48,0.56)" stroke-width="1"/><line x1="-6612.3" y1="6409.7" x2="304.1" y2="273.7" stroke="rgba(196,132,48,0.56)" stroke-width="1"/><line x1="10790.9" y1="6409.7" x2="1327.1" y2="262.4" stroke="rgba(196,132,48,0.56)" stroke-width="1"/><line x1="-5211.1" y1="6409.7" x2="313.3" y2="273.3" stroke="rgba(196,132,48,0.56)" stroke-width="1"/><line x1="9766.8" y1="6409.7" x2="1322.4" y2="262.2" stroke="rgba(196,132,48,0.56)" stroke-width="1"/><line x1="-3809.8" y1="6409.7" x2="322.3" y2="272.9" stroke="rgba(196,132,48,0.56)" stroke-width="1"/><line x1="8742.8" y1="6409.7" x2="1317.6" y2="262.1" stroke="rgba(196,132,48,0.56)" stroke-width="1"/><line x1="-2408.5" y1="6409.7" x2="331.1" y2="272.6" stroke="rgba(196,132,48,0.56)" stroke-width="1"/><line x1="7718.7" y1="6409.7" x2="1313.0" y2="262.0" stroke="rgba(196,132,48,0.56)" stroke-width="1"/><line x1="-1007.3" y1="6409.7" x2="339.8" y2="272.3" stroke="rgba(196,132,48,0.56)" stroke-width="1"/><line x1="6694.6" y1="6409.7" x2="1308.3" y2="261.8" stroke="rgba(196,132,48,0.56)" stroke-width="1"/><line x1="394.0" y1="6409.7" x2="348.3" y2="271.9" stroke="rgba(196,132,48,0.56)" stroke-width="1"/><line x1="5670.6" y1="6409.7" x2="1303.7" y2="261.7" stroke="rgba(196,132,48,0.56)" stroke-width="1"/><line x1="1795.2" y1="6409.7" x2="356.7" y2="271.6" stroke="rgba(196,132,48,0.56)" stroke-width="1"/><line x1="4646.5" y1="6409.7" x2="1299.2" y2="261.6" stroke="rgba(196,132,48,0.56)" stroke-width="1"/><line x1="3196.5" y1="6409.7" x2="364.9" y2="271.3" stroke="rgba(196,132,48,0.56)" stroke-width="1"/><line x1="3622.4" y1="6409.7" x2="1294.7" y2="261.4" stroke="rgba(196,132,48,0.56)" stroke-width="1"/><line x1="4597.7" y1="6409.7" x2="372.9" y2="270.9" stroke="rgba(196,132,48,0.56)" stroke-width="1"/><line x1="2598.4" y1="6409.7" x2="1290.2" y2="261.3" stroke="rgba(196,132,48,0.56)" stroke-width="1"/><line x1="5999.0" y1="6409.7" x2="380.9" y2="270.6" stroke="rgba(196,132,48,0.56)" stroke-width="1"/><line x1="1574.3" y1="6409.7" x2="1285.8" y2="261.2" stroke="rgba(196,132,48,0.56)" stroke-width="1"/><line x1="7400.2" y1="6409.7" x2="388.7" y2="270.3" stroke="rgba(196,132,48,0.56)" stroke-width="1"/><line x1="550.3" y1="6409.7" x2="1281.4" y2="261.1" stroke="rgba(196,132,48,0.56)" stroke-width="1"/><line x1="8801.5" y1="6409.7" x2="396.3" y2="270.0" stroke="rgba(196,132,48,0.56)" stroke-width="1"/><line x1="-473.8" y1="6409.7" x2="1277.1" y2="260.9" stroke="rgba(196,132,48,0.56)" stroke-width="1"/><line x1="10202.8" y1="6409.7" x2="403.9" y2="269.7" stroke="rgba(196,132,48,0.56)" stroke-width="1"/><line x1="-1497.9" y1="6409.7" x2="1272.8" y2="260.8" stroke="rgba(196,132,48,0.56)" stroke-width="1"/><line x1="11604.0" y1="6409.7" x2="411.3" y2="269.4" stroke="rgba(196,132,48,0.56)" stroke-width="1"/><line x1="-2521.9" y1="6409.7" x2="1268.5" y2="260.7" stroke="rgba(196,132,48,0.56)" stroke-width="1"/><line x1="13005.3" y1="6409.7" x2="418.6" y2="269.1" stroke="rgba(196,132,48,0.56)" stroke-width="1"/><line x1="-3546.0" y1="6409.7" x2="1264.3" y2="260.6" stroke="rgba(196,132,48,0.56)" stroke-width="1"/><line x1="14406.5" y1="6409.7" x2="425.7" y2="268.8" stroke="rgba(196,132,48,0.56)" stroke-width="1"/><line x1="-4570.1" y1="6409.7" x2="1260.1" y2="260.5" stroke="rgba(196,132,48,0.56)" stroke-width="1"/><line x1="15807.8" y1="6409.7" x2="432.8" y2="268.6" stroke="rgba(196,132,48,0.56)" stroke-width="1"/><line x1="-5594.1" y1="6409.7" x2="1256.0" y2="260.3" stroke="rgba(196,132,48,0.56)" stroke-width="1"/><line x1="17209.0" y1="6409.7" x2="439.7" y2="268.3" stroke="rgba(196,132,48,0.56)" stroke-width="1"/><line x1="-6618.2" y1="6409.7" x2="1251.9" y2="260.2" stroke="rgba(196,132,48,0.56)" stroke-width="1"/><line x1="18610.3" y1="6409.7" x2="446.5" y2="268.0" stroke="rgba(196,132,48,0.56)" stroke-width="1"/><line x1="-7642.3" y1="6409.7" x2="1247.8" y2="260.1" stroke="rgba(196,132,48,0.56)" stroke-width="1"/><line x1="20011.6" y1="6409.7" x2="453.2" y2="267.7" stroke="rgba(196,132,48,0.56)" stroke-width="1"/><line x1="-8666.3" y1="6409.7" x2="1243.8" y2="260.0" stroke="rgba(196,132,48,0.56)" stroke-width="1"/><line x1="21412.8" y1="6409.7" x2="459.8" y2="267.5" stroke="rgba(196,132,48,0.56)" stroke-width="1"/><line x1="-9690.4" y1="6409.7" x2="1239.8" y2="259.9" stroke="rgba(196,132,48,0.56)" stroke-width="1"/><line x1="22814.1" y1="6409.7" x2="466.3" y2="267.2" stroke="rgba(196,132,48,0.56)" stroke-width="1"/><line x1="-10714.4" y1="6409.7" x2="1235.8" y2="259.8" stroke="rgba(196,132,48,0.56)" stroke-width="1"/><line x1="24215.3" y1="6409.7" x2="472.7" y2="267.0" stroke="rgba(196,132,48,0.56)" stroke-width="1"/><line x1="-11738.5" y1="6409.7" x2="1231.9" y2="259.7" stroke="rgba(196,132,48,0.56)" stroke-width="1"/><line x1="25616.6" y1="6409.7" x2="479.0" y2="266.7" stroke="rgba(196,132,48,0.56)" stroke-width="1"/><line x1="-12762.6" y1="6409.7" x2="1228.0" y2="259.6" stroke="rgba(196,132,48,0.56)" stroke-width="1"/><line x1="27017.8" y1="6409.7" x2="485.2" y2="266.5" stroke="rgba(196,132,48,0.56)" stroke-width="1"/><line x1="-13786.6" y1="6409.7" x2="1224.2" y2="259.4" stroke="rgba(196,132,48,0.56)" stroke-width="1"/><line x1="28419.1" y1="6409.7" x2="491.3" y2="266.2" stroke="rgba(196,132,48,0.56)" stroke-width="1"/><line x1="-14810.7" y1="6409.7" x2="1220.3" y2="259.3" stroke="rgba(196,132,48,0.56)" stroke-width="1"/><line x1="29820.3" y1="6409.7" x2="497.3" y2="266.0" stroke="rgba(196,132,48,0.56)" stroke-width="1"/><line x1="-15834.8" y1="6409.7" x2="1216.6" y2="259.2" stroke="rgba(196,132,48,0.56)" stroke-width="1"/><line x1="31221.6" y1="6409.7" x2="503.3" y2="265.8" stroke="rgba(196,132,48,0.56)" stroke-width="1"/><line x1="-16858.8" y1="6409.7" x2="1212.8" y2="259.1" stroke="rgba(196,132,48,0.56)" stroke-width="1"/><line x1="32622.9" y1="6409.7" x2="509.1" y2="265.5" stroke="rgba(196,132,48,0.56)" stroke-width="1"/><line x1="-17882.9" y1="6409.7" x2="1209.1" y2="259.0" stroke="rgba(196,132,48,0.56)" stroke-width="1"/><line x1="34024.1" y1="6409.7" x2="514.8" y2="265.3" stroke="rgba(196,132,48,0.56)" stroke-width="1"/><line x1="-18906.9" y1="6409.7" x2="1205.4" y2="258.9" stroke="rgba(196,132,48,0.56)" stroke-width="1"/><line x1="35425.4" y1="6409.7" x2="520.5" y2="265.1" stroke="rgba(196,132,48,0.56)" stroke-width="1"/><line x1="-19931.0" y1="6409.7" x2="1201.7" y2="258.8" stroke="rgba(196,132,48,0.56)" stroke-width="1"/><line x1="36826.6" y1="6409.7" x2="526.1" y2="264.8" stroke="rgba(196,132,48,0.56)" stroke-width="1"/><line x1="-20955.1" y1="6409.7" x2="1198.1" y2="258.7" stroke="rgba(196,132,48,0.56)" stroke-width="1"/><line x1="38227.9" y1="6409.7" x2="531.6" y2="264.6" stroke="rgba(196,132,48,0.56)" stroke-width="1"/><line x1="-21979.1" y1="6409.7" x2="1194.5" y2="258.6" stroke="rgba(196,132,48,0.56)" stroke-width="1"/><line x1="39629.1" y1="6409.7" x2="537.0" y2="264.4" stroke="rgba(196,132,48,0.56)" stroke-width="1"/><line x1="-23003.2" y1="6409.7" x2="1190.9" y2="258.5" stroke="rgba(196,132,48,0.56)" stroke-width="1"/><line x1="41030.4" y1="6409.7" x2="542.4" y2="264.2" stroke="rgba(196,132,48,0.56)" stroke-width="1"/><line x1="-24027.3" y1="6409.7" x2="1187.4" y2="258.4" stroke="rgba(196,132,48,0.56)" stroke-width="1"/><line x1="42431.6" y1="6409.7" x2="547.6" y2="264.0" stroke="rgba(196,132,48,0.56)" stroke-width="1"/><line x1="-25051.3" y1="6409.7" x2="1183.9" y2="258.3" stroke="rgba(196,132,48,0.56)" stroke-width="1"/><line x1="43832.9" y1="6409.7" x2="552.8" y2="263.8" stroke="rgba(196,132,48,0.56)" stroke-width="1"/><line x1="-26075.4" y1="6409.7" x2="1180.4" y2="258.2" stroke="rgba(196,132,48,0.56)" stroke-width="1"/><line x1="45234.2" y1="6409.7" x2="557.9" y2="263.6" stroke="rgba(196,132,48,0.56)" stroke-width="1"/><line x1="-27099.4" y1="6409.7" x2="1176.9" y2="258.1" stroke="rgba(196,132,48,0.56)" stroke-width="1"/><line x1="46635.4" y1="6409.7" x2="563.0" y2="263.4" stroke="rgba(196,132,48,0.56)" stroke-width="1"/><line x1="-28123.5" y1="6409.7" x2="1173.5" y2="258.0" stroke="rgba(196,132,48,0.56)" stroke-width="1"/><line x1="48036.7" y1="6409.7" x2="568.0" y2="263.2" stroke="rgba(196,132,48,0.56)" stroke-width="1"/><line x1="-29147.6" y1="6409.7" x2="1170.1" y2="257.9" stroke="rgba(196,132,48,0.56)" stroke-width="1"/><line x1="49437.9" y1="6409.7" x2="572.9" y2="263.0" stroke="rgba(196,132,48,0.56)" stroke-width="1"/><line x1="-30171.6" y1="6409.7" x2="1166.8" y2="257.8" stroke="rgba(196,132,48,0.56)" stroke-width="1"/><line x1="50839.2" y1="6409.7" x2="577.7" y2="262.8" stroke="rgba(196,132,48,0.56)" stroke-width="1"/><line x1="-31195.7" y1="6409.7" x2="1163.4" y2="257.7" stroke="rgba(196,132,48,0.56)" stroke-width="1"/><line x1="52240.4" y1="6409.7" x2="582.5" y2="262.6" stroke="rgba(196,132,48,0.56)" stroke-width="1"/><line x1="-32219.8" y1="6409.7" x2="1160.1" y2="257.6" stroke="rgba(196,132,48,0.56)" stroke-width="1"/><line x1="53641.7" y1="6409.7" x2="587.2" y2="262.4" stroke="rgba(196,132,48,0.56)" stroke-width="1"/><line x1="-33243.8" y1="6409.7" x2="1156.8" y2="257.5" stroke="rgba(196,132,48,0.56)" stroke-width="1"/><line x1="55042.9" y1="6409.7" x2="591.9" y2="262.2" stroke="rgba(196,132,48,0.56)" stroke-width="1"/><line x1="-34267.9" y1="6409.7" x2="1153.6" y2="257.5" stroke="rgba(196,132,48,0.56)" stroke-width="1"/><line x1="56444.2" y1="6409.7" x2="596.5" y2="262.0" stroke="rgba(196,132,48,0.56)" stroke-width="1"/><line x1="-35291.9" y1="6409.7" x2="1150.3" y2="257.4" stroke="rgba(196,132,48,0.56)" stroke-width="1"/><line x1="57845.5" y1="6409.7" x2="601.0" y2="261.9" stroke="rgba(196,132,48,0.56)" stroke-width="1"/><line x1="-36316.0" y1="6409.7" x2="1147.1" y2="257.3" stroke="rgba(196,132,48,0.56)" stroke-width="1"/><line x1="59246.7" y1="6409.7" x2="605.5" y2="261.7" stroke="rgba(196,132,48,0.56)" stroke-width="1"/><line x1="-37340.1" y1="6409.7" x2="1144.0" y2="257.2" stroke="rgba(196,132,48,0.56)" stroke-width="1"/><line x1="60648.0" y1="6409.7" x2="609.9" y2="261.5" stroke="rgba(196,132,48,0.56)" stroke-width="1"/><line x1="-38364.1" y1="6409.7" x2="1140.8" y2="257.1" stroke="rgba(196,132,48,0.56)" stroke-width="1"/><line x1="62049.2" y1="6409.7" x2="614.2" y2="261.3" stroke="rgba(196,132,48,0.56)" stroke-width="1"/><line x1="-39388.2" y1="6409.7" x2="1137.7" y2="257.0" stroke="rgba(196,132,48,0.56)" stroke-width="1"/><line x1="63450.5" y1="6409.7" x2="618.5" y2="261.2" stroke="rgba(196,132,48,0.56)" stroke-width="1"/><line x1="-40412.3" y1="6409.7" x2="1134.6" y2="256.9" stroke="rgba(196,132,48,0.56)" stroke-width="1"/><line x1="64851.7" y1="6409.7" x2="622.8" y2="261.0" stroke="rgba(196,132,48,0.56)" stroke-width="1"/><line x1="-41436.3" y1="6409.7" x2="1131.5" y2="256.8" stroke="rgba(196,132,48,0.56)" stroke-width="1"/><line x1="66253.0" y1="6409.7" x2="627.0" y2="260.8" stroke="rgba(196,132,48,0.56)" stroke-width="1"/><line x1="-42460.4" y1="6409.7" x2="1128.4" y2="256.7" stroke="rgba(196,132,48,0.56)" stroke-width="1"/><line x1="67654.2" y1="6409.7" x2="631.1" y2="260.7" stroke="rgba(196,132,48,0.56)" stroke-width="1"/><line x1="-43484.4" y1="6409.7" x2="1125.4" y2="256.7" stroke="rgba(196,132,48,0.56)" stroke-width="1"/><line x1="69055.5" y1="6409.7" x2="635.2" y2="260.5" stroke="rgba(196,132,48,0.56)" stroke-width="1"/><line x1="-44508.5" y1="6409.7" x2="1122.4" y2="256.6" stroke="rgba(196,132,48,0.56)" stroke-width="1"/><line x1="70456.8" y1="6409.7" x2="639.2" y2="260.3" stroke="rgba(196,132,48,0.56)" stroke-width="1"/><line x1="-45532.6" y1="6409.7" x2="1119.4" y2="256.5" stroke="rgba(196,132,48,0.56)" stroke-width="1"/><line x1="71858.0" y1="6409.7" x2="643.2" y2="260.2" stroke="rgba(196,132,48,0.56)" stroke-width="1"/><line x1="-46556.6" y1="6409.7" x2="1116.4" y2="256.4" stroke="rgba(196,132,48,0.56)" stroke-width="1"/><line x1="73259.3" y1="6409.7" x2="647.1" y2="260.0" stroke="rgba(196,132,48,0.56)" stroke-width="1"/><line x1="-47580.7" y1="6409.7" x2="1113.5" y2="256.3" stroke="rgba(196,132,48,0.56)" stroke-width="1"/><line x1="74660.5" y1="6409.7" x2="651.0" y2="259.9" stroke="rgba(196,132,48,0.56)" stroke-width="1"/><line x1="-48604.8" y1="6409.7" x2="1110.6" y2="256.2" stroke="rgba(196,132,48,0.56)" stroke-width="1"/><line x1="76061.8" y1="6409.7" x2="654.9" y2="259.7" stroke="rgba(196,132,48,0.56)" stroke-width="1"/><line x1="-49628.8" y1="6409.7" x2="1107.7" y2="256.2" stroke="rgba(196,132,48,0.56)" stroke-width="1"/><line x1="77463.0" y1="6409.7" x2="658.7" y2="259.6" stroke="rgba(196,132,48,0.56)" stroke-width="1"/><line x1="-50652.9" y1="6409.7" x2="1104.8" y2="256.1" stroke="rgba(196,132,48,0.56)" stroke-width="1"/><line x1="78864.3" y1="6409.7" x2="662.4" y2="259.4" stroke="rgba(196,132,48,0.56)" stroke-width="1"/><line x1="-51676.9" y1="6409.7" x2="1101.9" y2="256.0" stroke="rgba(196,132,48,0.56)" stroke-width="1"/><line x1="80265.5" y1="6409.7" x2="666.1" y2="259.3" stroke="rgba(196,132,48,0.56)" stroke-width="1"/><line x1="-52701.0" y1="6409.7" x2="1099.1" y2="255.9" stroke="rgba(196,132,48,0.56)" stroke-width="1"/><line x1="81666.8" y1="6409.7" x2="669.8" y2="259.1" stroke="rgba(196,132,48,0.56)" stroke-width="1"/><line x1="-53725.1" y1="6409.7" x2="1096.3" y2="255.8" stroke="rgba(196,132,48,0.56)" stroke-width="1"/><line x1="83068.1" y1="6409.7" x2="673.4" y2="259.0" stroke="rgba(196,132,48,0.56)" stroke-width="1"/><line x1="-54749.1" y1="6409.7" x2="1093.5" y2="255.8" stroke="rgba(196,132,48,0.56)" stroke-width="1"/><line x1="84469.3" y1="6409.7" x2="677.0" y2="258.8" stroke="rgba(196,132,48,0.56)" stroke-width="1"/><line x1="-55773.2" y1="6409.7" x2="1090.7" y2="255.7" stroke="rgba(196,132,48,0.56)" stroke-width="1"/><line x1="85870.6" y1="6409.7" x2="680.5" y2="258.7" stroke="rgba(196,132,48,0.56)" stroke-width="1"/><line x1="-56797.3" y1="6409.7" x2="1088.0" y2="255.6" stroke="rgba(196,132,48,0.56)" stroke-width="1"/><line x1="87271.8" y1="6409.7" x2="684.0" y2="258.6" stroke="rgba(196,132,48,0.56)" stroke-width="1"/><line x1="-57821.3" y1="6409.7" x2="1085.3" y2="255.5" stroke="rgba(196,132,48,0.56)" stroke-width="1"/><line x1="88673.1" y1="6409.7" x2="687.5" y2="258.4" stroke="rgba(196,132,48,0.56)" stroke-width="1"/><line x1="-58845.4" y1="6409.7" x2="1082.5" y2="255.4" stroke="rgba(196,132,48,0.56)" stroke-width="1"/><line x1="90074.3" y1="6409.7" x2="690.9" y2="258.3" stroke="rgba(196,132,48,0.56)" stroke-width="1"/><line x1="-59869.4" y1="6409.7" x2="1079.9" y2="255.4" stroke="rgba(196,132,48,0.56)" stroke-width="1"/><line x1="91475.6" y1="6409.7" x2="694.2" y2="258.2" stroke="rgba(196,132,48,0.56)" stroke-width="1"/><line x1="-60893.5" y1="6409.7" x2="1077.2" y2="255.3" stroke="rgba(196,132,48,0.56)" stroke-width="1"/><line x1="92876.9" y1="6409.7" x2="697.6" y2="258.0" stroke="rgba(196,132,48,0.56)" stroke-width="1"/><line x1="-61917.6" y1="6409.7" x2="1074.5" y2="255.2" stroke="rgba(196,132,48,0.56)" stroke-width="1"/><line x1="94278.1" y1="6409.7" x2="700.9" y2="257.9" stroke="rgba(196,132,48,0.56)" stroke-width="1"/><line x1="-62941.6" y1="6409.7" x2="1071.9" y2="255.1" stroke="rgba(196,132,48,0.56)" stroke-width="1"/><line x1="95679.4" y1="6409.7" x2="704.1" y2="257.8" stroke="rgba(196,132,48,0.56)" stroke-width="1"/><line x1="-63965.7" y1="6409.7" x2="1069.3" y2="255.1" stroke="rgba(196,132,48,0.56)" stroke-width="1"/><line x1="97080.6" y1="6409.7" x2="707.4" y2="257.6" stroke="rgba(196,132,48,0.56)" stroke-width="1"/><line x1="-64989.8" y1="6409.7" x2="1066.7" y2="255.0" stroke="rgba(196,132,48,0.56)" stroke-width="1"/><line x1="98481.9" y1="6409.7" x2="710.6" y2="257.5" stroke="rgba(196,132,48,0.56)" stroke-width="1"/><line x1="-66013.8" y1="6409.7" x2="1064.1" y2="254.9" stroke="rgba(196,132,48,0.56)" stroke-width="1"/><line x1="99883.1" y1="6409.7" x2="713.7" y2="257.4" stroke="rgba(196,132,48,0.56)" stroke-width="1"/><line x1="-67037.9" y1="6409.7" x2="1061.6" y2="254.9" stroke="rgba(196,132,48,0.56)" stroke-width="1"/><line x1="101284.4" y1="6409.7" x2="716.8" y2="257.3" stroke="rgba(196,132,48,0.56)" stroke-width="1"/><line x1="-68062.0" y1="6409.7" x2="1059.0" y2="254.8" stroke="rgba(196,132,48,0.56)" stroke-width="1"/><line x1="102685.6" y1="6409.7" x2="719.9" y2="257.1" stroke="rgba(196,132,48,0.56)" stroke-width="1"/><line x1="-69086.0" y1="6409.7" x2="1056.5" y2="254.7" stroke="rgba(196,132,48,0.56)" stroke-width="1"/><line x1="104086.9" y1="6409.7" x2="723.0" y2="257.0" stroke="rgba(196,132,48,0.56)" stroke-width="1"/><line x1="-70110.1" y1="6409.7" x2="1054.0" y2="254.6" stroke="rgba(196,132,48,0.56)" stroke-width="1"/><line x1="105488.2" y1="6409.7" x2="726.0" y2="256.9" stroke="rgba(196,132,48,0.56)" stroke-width="1"/><line x1="-71134.1" y1="6409.7" x2="1051.5" y2="254.6" stroke="rgba(196,132,48,0.56)" stroke-width="1"/><line x1="106889.4" y1="6409.7" x2="729.0" y2="256.8" stroke="rgba(196,132,48,0.56)" stroke-width="1"/><line x1="-72158.2" y1="6409.7" x2="1049.1" y2="254.5" stroke="rgba(196,132,48,0.56)" stroke-width="1"/><line x1="108290.7" y1="6409.7" x2="731.9" y2="256.7" stroke="rgba(196,132,48,0.56)" stroke-width="1"/><line x1="-73182.3" y1="6409.7" x2="1046.6" y2="254.4" stroke="rgba(196,132,48,0.56)" stroke-width="1"/><line x1="109691.9" y1="6409.7" x2="734.9" y2="256.5" stroke="rgba(196,132,48,0.56)" stroke-width="1"/><line x1="-74206.3" y1="6409.7" x2="1044.2" y2="254.4" stroke="rgba(196,132,48,0.56)" stroke-width="1"/><line x1="111093.2" y1="6409.7" x2="737.8" y2="256.4" stroke="rgba(196,132,48,0.56)" stroke-width="1"/><line x1="-75230.4" y1="6409.7" x2="1041.8" y2="254.3" stroke="rgba(196,132,48,0.56)" stroke-width="1"/><line x1="112494.4" y1="6409.7" x2="740.6" y2="256.3" stroke="rgba(196,132,48,0.56)" stroke-width="1"/><line x1="-76254.5" y1="6409.7" x2="1039.4" y2="254.2" stroke="rgba(196,132,48,0.56)" stroke-width="1"/><line x1="113895.7" y1="6409.7" x2="743.5" y2="256.2" stroke="rgba(196,132,48,0.56)" stroke-width="1"/><line x1="-77278.5" y1="6409.7" x2="1037.0" y2="254.2" stroke="rgba(196,132,48,0.56)" stroke-width="1"/><line x1="115296.9" y1="6409.7" x2="746.3" y2="256.1" stroke="rgba(196,132,48,0.56)" stroke-width="1"/><line x1="-78302.6" y1="6409.7" x2="1034.6" y2="254.1" stroke="rgba(196,132,48,0.56)" stroke-width="1"/><line x1="116698.2" y1="6409.7" x2="749.0" y2="256.0" stroke="rgba(196,132,48,0.56)" stroke-width="1"/><line x1="-79326.6" y1="6409.7" x2="1032.3" y2="254.0" stroke="rgba(196,132,48,0.56)" stroke-width="1"/><line x1="118099.5" y1="6409.7" x2="751.8" y2="255.9" stroke="rgba(196,132,48,0.56)" stroke-width="1"/><line x1="-80350.7" y1="6409.7" x2="1029.9" y2="254.0" stroke="rgba(196,132,48,0.56)" stroke-width="1"/><line x1="119500.7" y1="6409.7" x2="754.5" y2="255.8" stroke="rgba(196,132,48,0.56)" stroke-width="1"/><line x1="-81374.8" y1="6409.7" x2="1027.6" y2="253.9" stroke="rgba(196,132,48,0.56)" stroke-width="1"/><line x1="120902.0" y1="6409.7" x2="757.2" y2="255.7" stroke="rgba(196,132,48,0.56)" stroke-width="1"/><line x1="-82398.8" y1="6409.7" x2="1025.3" y2="253.8" stroke="rgba(196,132,48,0.56)" stroke-width="1"/><line x1="122303.2" y1="6409.7" x2="759.9" y2="255.6" stroke="rgba(196,132,48,0.56)" stroke-width="1"/><line x1="-83422.9" y1="6409.7" x2="1023.0" y2="253.8" stroke="rgba(196,132,48,0.56)" stroke-width="1"/><line x1="123704.5" y1="6409.7" x2="762.5" y2="255.4" stroke="rgba(196,132,48,0.56)" stroke-width="1"/><line x1="-84447.0" y1="6409.7" x2="1020.8" y2="253.7" stroke="rgba(196,132,48,0.56)" stroke-width="1"/><line x1="125105.7" y1="6409.7" x2="765.1" y2="255.3" stroke="rgba(196,132,48,0.56)" stroke-width="1"/><line x1="-85471.0" y1="6409.7" x2="1018.5" y2="253.6" stroke="rgba(196,132,48,0.56)" stroke-width="1"/><line x1="126507.0" y1="6409.7" x2="767.7" y2="255.2" stroke="rgba(196,132,48,0.56)" stroke-width="1"/><line x1="-86495.1" y1="6409.7" x2="1016.3" y2="253.6" stroke="rgba(196,132,48,0.56)" stroke-width="1"/><line x1="127908.2" y1="6409.7" x2="770.3" y2="255.1" stroke="rgba(196,132,48,0.56)" stroke-width="1"/><line x1="-87519.1" y1="6409.7" x2="1014.0" y2="253.5" stroke="rgba(196,132,48,0.56)" stroke-width="1"/><line x1="129309.5" y1="6409.7" x2="772.8" y2="255.0" stroke="rgba(196,132,48,0.56)" stroke-width="1"/><line x1="-88543.2" y1="6409.7" x2="1011.8" y2="253.4" stroke="rgba(196,132,48,0.56)" stroke-width="1"/><line x1="130710.8" y1="6409.7" x2="775.3" y2="254.9" stroke="rgba(196,132,48,0.56)" stroke-width="1"/><line x1="-89567.3" y1="6409.7" x2="1009.6" y2="253.4" stroke="rgba(196,132,48,0.56)" stroke-width="1"/><line x1="132112.0" y1="6409.7" x2="777.8" y2="254.8" stroke="rgba(196,132,48,0.56)" stroke-width="1"/><line x1="-90591.3" y1="6409.7" x2="1007.5" y2="253.3" stroke="rgba(196,132,48,0.56)" stroke-width="1"/><line x1="69809.0" y1="3455.7" x2="780.3" y2="254.7" stroke="rgba(196,132,48,0.56)" stroke-width="1"/><line x1="-91615.4" y1="6409.7" x2="1005.3" y2="253.3" stroke="rgba(196,132,48,0.56)" stroke-width="1"/><line x1="39772.1" y1="2043.8" x2="782.7" y2="254.6" stroke="rgba(196,132,48,0.56)" stroke-width="1"/><line x1="-92639.5" y1="6409.7" x2="1003.1" y2="253.2" stroke="rgba(196,132,48,0.56)" stroke-width="1"/><line x1="28042.8" y1="1492.5" x2="785.1" y2="254.6" stroke="rgba(196,132,48,0.56)" stroke-width="1"/><line x1="-93663.5" y1="6409.7" x2="1001.0" y2="253.1" stroke="rgba(196,132,48,0.56)" stroke-width="1"/><line x1="21792.9" y1="1198.7" x2="787.5" y2="254.5" stroke="rgba(196,132,48,0.56)" stroke-width="1"/><line x1="-94687.6" y1="6409.7" x2="998.9" y2="253.1" stroke="rgba(196,132,48,0.56)" stroke-width="1"/><line x1="17909.7" y1="1016.2" x2="789.9" y2="254.4" stroke="rgba(196,132,48,0.56)" stroke-width="1"/><line x1="-95711.6" y1="6409.7" x2="996.8" y2="253.0" stroke="rgba(196,132,48,0.56)" stroke-width="1"/><line x1="15262.9" y1="891.8" x2="792.2" y2="254.3" stroke="rgba(196,132,48,0.56)" stroke-width="1"/><line x1="-96735.7" y1="6409.7" x2="994.7" y2="253.0" stroke="rgba(196,132,48,0.56)" stroke-width="1"/><line x1="13343.2" y1="801.5" x2="794.5" y2="254.2" stroke="rgba(196,132,48,0.56)" stroke-width="1"/><line x1="-97759.8" y1="6409.7" x2="992.6" y2="252.9" stroke="rgba(196,132,48,0.56)" stroke-width="1"/><line x1="11887.1" y1="733.1" x2="796.8" y2="254.1" stroke="rgba(196,132,48,0.56)" stroke-width="1"/><line x1="-98783.8" y1="6409.7" x2="990.5" y2="252.8" stroke="rgba(196,132,48,0.56)" stroke-width="1"/><line x1="10744.7" y1="679.4" x2="799.1" y2="254.0" stroke="rgba(196,132,48,0.56)" stroke-width="1"/><line x1="-99807.9" y1="6409.7" x2="988.4" y2="252.8" stroke="rgba(196,132,48,0.56)" stroke-width="1"/><line x1="9824.6" y1="636.1" x2="801.4" y2="253.9" stroke="rgba(196,132,48,0.56)" stroke-width="1"/><line x1="-100832.0" y1="6409.7" x2="986.4" y2="252.7" stroke="rgba(196,132,48,0.56)" stroke-width="1"/><line x1="9067.6" y1="600.5" x2="803.6" y2="253.8" stroke="rgba(196,132,48,0.56)" stroke-width="1"/><line x1="-101856.0" y1="6409.7" x2="984.4" y2="252.7" stroke="rgba(196,132,48,0.56)" stroke-width="1"/><line x1="8433.9" y1="570.8" x2="805.8" y2="253.7" stroke="rgba(196,132,48,0.56)" stroke-width="1"/><line x1="-102880.1" y1="6409.7" x2="982.3" y2="252.6" stroke="rgba(196,132,48,0.56)" stroke-width="1"/><line x1="7895.6" y1="545.5" x2="808.0" y2="253.6" stroke="rgba(196,132,48,0.56)" stroke-width="1"/><line x1="-103904.1" y1="6409.7" x2="980.3" y2="252.6" stroke="rgba(196,132,48,0.56)" stroke-width="1"/><line x1="7432.7" y1="523.7" x2="810.2" y2="253.6" stroke="rgba(196,132,48,0.56)" stroke-width="1"/><line x1="-104928.2" y1="6409.7" x2="978.4" y2="252.5" stroke="rgba(196,132,48,0.56)" stroke-width="1"/><line x1="7030.3" y1="504.8" x2="812.4" y2="253.5" stroke="rgba(196,132,48,0.56)" stroke-width="1"/><line x1="-105952.3" y1="6409.7" x2="976.4" y2="252.4" stroke="rgba(196,132,48,0.56)" stroke-width="1"/><line x1="6677.4" y1="488.2" x2="814.5" y2="253.4" stroke="rgba(196,132,48,0.56)" stroke-width="1"/><line x1="-106976.3" y1="6409.7" x2="974.4" y2="252.4" stroke="rgba(196,132,48,0.56)" stroke-width="1"/><line x1="6365.4" y1="473.5" x2="816.6" y2="253.3" stroke="rgba(196,132,48,0.56)" stroke-width="1"/><line x1="-108000.4" y1="6409.7" x2="972.4" y2="252.3" stroke="rgba(196,132,48,0.56)" stroke-width="1"/><line x1="6087.4" y1="460.5" x2="818.7" y2="253.2" stroke="rgba(196,132,48,0.56)" stroke-width="1"/><line x1="-109024.5" y1="6409.7" x2="970.5" y2="252.3" stroke="rgba(196,132,48,0.56)" stroke-width="1"/><line x1="5838.3" y1="448.8" x2="820.8" y2="253.1" stroke="rgba(196,132,48,0.56)" stroke-width="1"/><line x1="-110048.5" y1="6409.7" x2="968.6" y2="252.2" stroke="rgba(196,132,48,0.56)" stroke-width="1"/><line x1="5613.8" y1="438.2" x2="822.9" y2="253.1" stroke="rgba(196,132,48,0.56)" stroke-width="1"/><line x1="-111072.6" y1="6409.7" x2="966.6" y2="252.2" stroke="rgba(196,132,48,0.56)" stroke-width="1"/><line x1="5410.4" y1="428.6" x2="824.9" y2="253.0" stroke="rgba(196,132,48,0.56)" stroke-width="1"/><line x1="-112096.6" y1="6409.7" x2="964.7" y2="252.1" stroke="rgba(196,132,48,0.56)" stroke-width="1"/><line x1="5225.2" y1="419.9" x2="826.9" y2="252.9" stroke="rgba(196,132,48,0.56)" stroke-width="1"/><line x1="-113120.7" y1="6409.7" x2="962.8" y2="252.1" stroke="rgba(196,132,48,0.56)" stroke-width="1"/><line x1="5055.9" y1="412.0" x2="828.9" y2="252.8" stroke="rgba(196,132,48,0.56)" stroke-width="1"/><line x1="-114144.8" y1="6409.7" x2="961.0" y2="252.0" stroke="rgba(196,132,48,0.56)" stroke-width="1"/><line x1="4900.6" y1="404.7" x2="830.9" y2="252.7" stroke="rgba(196,132,48,0.56)" stroke-width="1"/><line x1="-115168.8" y1="6409.7" x2="959.1" y2="252.0" stroke="rgba(196,132,48,0.56)" stroke-width="1"/><line x1="4757.6" y1="398.0" x2="832.9" y2="252.7" stroke="rgba(196,132,48,0.56)" stroke-width="1"/><line x1="-116192.9" y1="6409.7" x2="957.2" y2="251.9" stroke="rgba(196,132,48,0.56)" stroke-width="1"/><line x1="4625.4" y1="391.7" x2="834.9" y2="252.6" stroke="rgba(196,132,48,0.56)" stroke-width="1"/><line x1="-117217.0" y1="6409.7" x2="955.4" y2="251.9" stroke="rgba(196,132,48,0.56)" stroke-width="1"/><line x1="4503.0" y1="386.0" x2="836.8" y2="252.5" stroke="rgba(196,132,48,0.56)" stroke-width="1"/><line x1="-118241.0" y1="6409.7" x2="953.5" y2="251.8" stroke="rgba(196,132,48,0.56)" stroke-width="1"/><line x1="4389.2" y1="380.6" x2="838.7" y2="252.4" stroke="rgba(196,132,48,0.56)" stroke-width="1"/><line x1="-119265.1" y1="6409.7" x2="951.7" y2="251.8" stroke="rgba(196,132,48,0.56)" stroke-width="1"/><line x1="4283.2" y1="375.6" x2="840.6" y2="252.3" stroke="rgba(196,132,48,0.56)" stroke-width="1"/><line x1="-120289.1" y1="6409.7" x2="949.9" y2="251.7" stroke="rgba(196,132,48,0.56)" stroke-width="1"/><line x1="4184.1" y1="371.0" x2="842.5" y2="252.3" stroke="rgba(196,132,48,0.56)" stroke-width="1"/><line x1="-121313.2" y1="6409.7" x2="948.1" y2="251.6" stroke="rgba(196,132,48,0.56)" stroke-width="1"/><line x1="4091.4" y1="366.6" x2="844.4" y2="252.2" stroke="rgba(196,132,48,0.56)" stroke-width="1"/><line x1="-122337.3" y1="6409.7" x2="946.3" y2="251.6" stroke="rgba(196,132,48,0.56)" stroke-width="1"/><line x1="4004.5" y1="362.6" x2="846.2" y2="252.1" stroke="rgba(196,132,48,0.56)" stroke-width="1"/><line x1="-123361.3" y1="6409.7" x2="944.5" y2="251.5" stroke="rgba(196,132,48,0.56)" stroke-width="1"/><line x1="3922.8" y1="358.7" x2="848.1" y2="252.0" stroke="rgba(196,132,48,0.56)" stroke-width="1"/><line x1="-124385.4" y1="6409.7" x2="942.7" y2="251.5" stroke="rgba(196,132,48,0.56)" stroke-width="1"/><line x1="3845.8" y1="355.1" x2="849.9" y2="252.0" stroke="rgba(196,132,48,0.56)" stroke-width="1"/><line x1="-125409.5" y1="6409.7" x2="941.0" y2="251.4" stroke="rgba(196,132,48,0.56)" stroke-width="1"/><line x1="3773.2" y1="351.7" x2="851.7" y2="251.9" stroke="rgba(196,132,48,0.56)" stroke-width="1"/><line x1="-126433.5" y1="6409.7" x2="939.2" y2="251.4" stroke="rgba(196,132,48,0.56)" stroke-width="1"/><line x1="3704.6" y1="348.5" x2="853.5" y2="251.8" stroke="rgba(196,132,48,0.56)" stroke-width="1"/><line x1="-127457.6" y1="6409.7" x2="937.5" y2="251.3" stroke="rgba(196,132,48,0.56)" stroke-width="1"/><line x1="3639.7" y1="345.4" x2="855.3" y2="251.8" stroke="rgba(196,132,48,0.56)" stroke-width="1"/><line x1="-128481.7" y1="6409.7" x2="935.7" y2="251.3" stroke="rgba(196,132,48,0.56)" stroke-width="1"/><line x1="3578.2" y1="342.5" x2="857.1" y2="251.7" stroke="rgba(196,132,48,0.56)" stroke-width="1"/><line x1="-129505.7" y1="6409.7" x2="934.0" y2="251.3" stroke="rgba(196,132,48,0.56)" stroke-width="1"/><line x1="3519.8" y1="339.8" x2="858.8" y2="251.6" stroke="rgba(196,132,48,0.56)" stroke-width="1"/><line x1="-130529.8" y1="6409.7" x2="932.3" y2="251.2" stroke="rgba(196,132,48,0.56)" stroke-width="1"/><line x1="3464.3" y1="337.2" x2="860.6" y2="251.6" stroke="rgba(196,132,48,0.56)" stroke-width="1"/><line x1="-131553.8" y1="6409.7" x2="930.6" y2="251.2" stroke="rgba(196,132,48,0.56)" stroke-width="1"/><line x1="3411.5" y1="334.7" x2="862.3" y2="251.5" stroke="rgba(196,132,48,0.56)" stroke-width="1"/><line x1="-132577.9" y1="6409.7" x2="928.9" y2="251.1" stroke="rgba(196,132,48,0.56)" stroke-width="1"/><line x1="3361.2" y1="332.3" x2="864.0" y2="251.4" stroke="rgba(196,132,48,0.56)" stroke-width="1"/><line x1="-133602.0" y1="6409.7" x2="927.2" y2="251.1" stroke="rgba(196,132,48,0.56)" stroke-width="1"/></g></g>
<line x1="22814.1" y1="6409.7" x2="353.1" y2="236.1" stroke="#e8456a" stroke-width="1.6"/>
<line x1="-10714.4" y1="6409.7" x2="1282.6" y2="235.7" stroke="#3d9be0" stroke-width="1.6"/>
<line x1="958.8" y1="113" x2="958.8" y2="692" stroke="#8cbd2c" stroke-width="1.8"/>
<polygon points="958.5,402.5 1091.0,438.9 1094.3,413.9 958.5,381.2" fill="#dba462" stroke="#dba462" stroke-width="0.7" stroke-linejoin="round"/>
<polygon points="1126.9,436.2 1099.9,470.8 1104.0,442.7 1131.2,411.4" fill="#9a683c" stroke="#9a683c" stroke-width="0.7" stroke-linejoin="round"/>
<polygon points="1057.2,474.5 1202.3,523.6 1211.2,490.8 1060.2,446.0" fill="#dba462" stroke="#dba462" stroke-width="0.7" stroke-linejoin="round"/>
<polygon points="1202.3,523.6 1207.7,504.7 1216.2,473.5 1211.2,490.8" fill="#c48a4e" stroke="#c48a4e" stroke-width="0.7" stroke-linejoin="round"/>
<path d="M959.8 400.8 L966.4 402.6 L966.5 385.8 L959.8 384.2Z M967.7 404.6 L967.9 383.9 M969.0 403.3 L975.9 405.1 L976.2 388.2 L969.2 386.5Z M977.2 407.2 L977.6 386.3 M978.6 405.9 L985.6 407.8 L986.1 390.6 L978.9 388.8Z M987.0 409.9 L987.6 388.7 M988.4 408.5 L995.7 410.5 L996.4 393.1 L988.9 391.3Z M997.1 412.7 L997.9 391.2 M998.6 411.3 L1006.1 413.3 L1006.9 395.7 L999.3 393.8Z M1007.5 415.5 L1008.6 393.7 M1009.1 414.1 L1016.8 416.3 L1017.9 398.4 L1010.0 396.4Z M1018.3 418.5 L1019.6 396.4 M1019.9 417.1 L1027.9 419.3 L1029.2 401.1 L1021.0 399.1Z M1029.4 421.5 L1031.0 399.1 M1031.1 420.1 L1039.4 422.4 L1040.9 404.0 L1032.4 401.9Z M1040.9 424.7 L1042.8 402.0 M1042.7 423.3 L1051.3 425.6 L1053.0 406.9 L1044.2 404.8Z M1052.8 427.9 L1055.0 404.9 M1054.7 426.5 L1063.5 428.9 L1065.5 410.0 L1056.5 407.8Z M1065.1 431.3 L1067.6 407.9 M1067.0 429.9 L1076.2 432.4 L1078.5 413.2 L1069.1 410.9Z M1077.8 434.8 L1080.7 411.1 M1079.9 433.4 L1089.4 435.9 L1092.0 416.5 L1082.2 414.1Z M1091.0 438.4 L1094.3 414.4 M1059.6 472.4 L1070.7 476.1 L1073.4 453.6 L1062.0 450.2Z M1072.7 479.1 L1076.0 451.3 M1075.1 477.6 L1086.8 481.5 L1089.9 458.6 L1077.9 455.0Z M1088.7 484.6 L1092.7 456.3 M1091.4 483.0 L1103.5 487.1 L1107.1 463.8 L1094.6 460.0Z M1105.5 490.2 L1110.1 461.5 M1108.3 488.7 L1121.0 493.0 L1125.2 469.3 L1112.1 465.3Z M1123.1 496.2 L1128.3 466.9 M1126.1 494.6 L1139.4 499.1 L1144.1 475.0 L1130.4 470.8Z M1141.5 502.4 L1147.5 472.6 M1144.7 500.9 L1158.6 505.5 L1164.0 481.0 L1149.6 476.6Z M1160.9 508.9 L1167.6 478.6 M1164.2 507.4 L1178.9 512.3 L1184.9 487.3 L1169.8 482.7Z M1181.2 515.7 L1188.7 484.9 M1184.7 514.2 L1200.1 519.4 L1206.9 493.9 L1191.0 489.1Z M1202.5 522.9 L1211.0 491.5" fill="none" stroke="#b97636" stroke-width="0.8" opacity="0.32"/>
<polygon points="971.5,375.4 1131.2,411.4 1104.0,442.7 1216.2,473.5 1211.2,490.8 1060.2,446.0 1094.3,413.9 958.5,381.2" fill="#e6b578" stroke="#e6b578" stroke-width="0.7" stroke-linejoin="round"/>
<path d="M967.9 383.5 L980.7 377.5 M977.6 385.8 L990.2 379.6 M987.6 388.2 L1000.0 381.8 M997.9 390.7 L1010.1 384.1 M1008.6 393.3 L1020.5 386.5 M1019.6 395.9 L1031.2 388.9 M1031.0 398.7 L1042.3 391.4 M1042.8 401.5 L1053.7 394.0 M1055.0 404.4 L1065.5 396.6 M1067.6 407.4 L1077.8 399.4 M1080.7 410.6 L1090.4 402.2 M1094.3 413.9 L1103.5 405.2 M1108.4 417.2 L1117.1 408.3 M1076.1 450.7 L1088.1 438.3 M1092.7 455.7 L1104.0 442.7 M1110.2 460.9 L1120.7 447.2 M1128.4 466.3 L1138.1 452.0 M1147.6 472.0 L1156.2 457.0 M1167.7 477.9 L1175.3 462.3 M1188.9 484.2 L1195.2 467.8" fill="none" stroke="#c8905a" stroke-width="0.7" opacity="0.35"/>
<line x1="958.5" y1="382.2" x2="1094.3" y2="414.9" stroke="#eabb80" stroke-width="1.5" opacity="0.6"/>
<line x1="1060.2" y1="447.0" x2="1211.2" y2="491.8" stroke="#eabb80" stroke-width="1.5" opacity="0.6"/>
<ellipse cx="983" cy="380.3" rx="12.5" ry="3.6" fill="#6a4528" opacity="0.8"/>
<defs><clipPath id="ballc"><circle cx="974.7" cy="365.6" r="11.2"/></clipPath>
<radialGradient id="ballg" cx="0.35" cy="0.3" r="0.8"><stop offset="0" stop-color="#fff" stop-opacity="0"/><stop offset="0.7" stop-color="#000" stop-opacity="0.05"/><stop offset="1" stop-color="#000" stop-opacity="0.35"/></radialGradient></defs>
<g clip-path="url(#ballc)"><rect x="960" y="350" width="30" height="30" fill="#f6f6f6"/>
<path d="M965 356 Q968 352 973 354.5 L970 360 Q967 364 966 369 L963 368 Q963 361 965 356Z" fill="#1fd02e"/>
<path d="M972 368 Q980 362 987 361 L987 368 Q980 369 974 373Z" fill="#f0281e"/>
<path d="M963 367 L966 369 L966 374 L962 371Z" fill="#1e3ee0"/>
<path d="M968 372 Q972 375 978 377 L976 381 L968 380Z" fill="#c8c628"/>
<circle cx="974.7" cy="365.6" r="11.2" fill="url(#ballg)"/></g>
<circle cx="974.7" cy="365.6" r="11.2" fill="none" stroke="#3a2a20" stroke-width="0.8" opacity="0.6"/>
<path d="M965.2 409.7L968.4 412.9M957.8 412.8L957.8 417.3M950.4 409.7L947.2 412.9M947.3 402.3L942.8 402.3M950.4 394.9L947.2 391.7M957.8 391.8L957.8 387.3" stroke="#111" stroke-width="4.6" stroke-linecap="round"/><path d="M965.2 409.7L968.4 412.9M957.8 412.8L957.8 417.3M950.4 409.7L947.2 412.9M947.3 402.3L942.8 402.3M950.4 394.9L947.2 391.7M957.8 391.8L957.8 387.3" stroke="#dcdcdc" stroke-width="2.6" stroke-linecap="round"/>
<circle cx="957.8" cy="402.3" r="6.8" fill="#d8d8da" stroke="#111" stroke-width="1.4"/>
<defs><mask id="camo" maskUnits="userSpaceOnUse" x="980" y="280" width="60" height="50"><circle cx="995.9" cy="301.5" r="7" fill="#fff"/><circle cx="1010.5" cy="295.6" r="8.4" fill="#fff"/><rect x="994.4" y="302.2" width="21.2" height="15.4" rx="2" fill="#fff"/><circle cx="995.9" cy="301.5" r="6" fill="#000"/><circle cx="1010.5" cy="295.6" r="7.4" fill="#000"/><rect x="995.4" y="303.2" width="19.2" height="13.4" rx="1" fill="#000"/></mask><mask id="camb" maskUnits="userSpaceOnUse" x="980" y="280" width="60" height="50"><circle cx="995.9" cy="301.5" r="6" fill="#fff"/><circle cx="1010.5" cy="295.6" r="7.4" fill="#fff"/><rect x="995.4" y="303.2" width="19.2" height="13.4" rx="1" fill="#fff"/><circle cx="995.9" cy="301.5" r="2.7" fill="#000"/><circle cx="1010.5" cy="295.6" r="4.1000000000000005" fill="#000"/><rect x="998.6999999999999" y="306.5" width="12.6" height="6.800000000000001" rx="0.5" fill="#000"/></mask><mask id="cami" maskUnits="userSpaceOnUse" x="980" y="280" width="60" height="50"><circle cx="995.9" cy="301.5" r="2.7" fill="#fff"/><circle cx="1010.5" cy="295.6" r="4.1000000000000005" fill="#fff"/><rect x="998.6999999999999" y="306.5" width="12.6" height="6.800000000000001" rx="0.5" fill="#fff"/><circle cx="995.9" cy="301.5" r="1.7000000000000002" fill="#000"/><circle cx="1010.5" cy="295.6" r="3.1000000000000005" fill="#000"/><rect x="999.6999999999999" y="307.5" width="10.6" height="4.800000000000001" rx="0.5" fill="#000"/></mask></defs>
<path d="M1014.5 303.5 L1024.8 298.3 L1024.8 319.7 L1014.5 314.5Z" fill="#111"/>
<g mask="url(#camo)"><rect x="980" y="280" width="60" height="50" fill="#111"/></g>
<g mask="url(#camb)"><rect x="980" y="280" width="60" height="50" fill="#cfcca0"/></g>
<g mask="url(#cami)"><rect x="980" y="280" width="60" height="50" fill="#111"/></g>
<path d="M1015.5 304.6 L1023.7 300.3 L1023.7 317.7 L1015.5 313.4Z" fill="#cfcca0"/>
<path d="M992 300.5 L1010 304 M1002 303 L1006 313 M1011 302 L1010 311" stroke="#c060c0" stroke-width="0.8"/>
<rect x="412.5" y="248.5" width="3" height="3" fill="#5a4a4a"/>
<g><path d="M1582.5 163.2 L1582.5 140" stroke="#80dc20" stroke-width="2.6"/><path d="M1582.5 163.2 L1564 158" stroke="#e8607a" stroke-width="2.6"/><path d="M1582.5 163.2 L1595 156" stroke="#6aa8e8" stroke-width="2.6"/>
<circle cx="1565" cy="172.5" r="7.8" fill="#1e5aa0" stroke="#2a90ff" stroke-width="1.5"/>
<circle cx="1606.7" cy="170.3" r="7.8" fill="#a02035" stroke="#ff2050" stroke-width="1.5"/>
<circle cx="1582.5" cy="191.2" r="7.8" fill="#5a9a12" stroke="#80e020" stroke-width="1.5"/>
<circle cx="1558.2" cy="156.5" r="8.4" fill="#e8708a"/><circle cx="1600.5" cy="154.3" r="8.2" fill="#78ace6"/><circle cx="1582.5" cy="135.6" r="8.4" fill="#80dc20"/>
<text x="1582.5" y="141" font-family="Liberation Sans" font-size="14" text-anchor="middle" fill="#1a2a10">Y</text>
<text x="1558.2" y="161.8" font-family="Liberation Sans" font-size="14" text-anchor="middle" fill="#8a3040">X</text>
<text x="1600.5" y="159.6" font-family="Liberation Sans" font-size="14" text-anchor="middle" fill="#3a5a88">Z</text></g>
<rect x="285" y="113" width="1347" height="1.3" fill="#c8ccd4" opacity="0.8"/><rect x="285" y="113" width="1.3" height="580" fill="#ffffff" opacity="0.15"/>
</g></svg>
<div class="r" style="left:295px;top:124px;width:114px;height:32px;background:rgba(80,84,90,0.75);border-radius:4px;"></div>
<div class="t" style="left:323px;top:132.7px;font-size:15px;color:#ececec;">Perspective</div>
<div class="r" style="left:285px;top:696px;width:1348px;height:260px;background:#292929;border-radius:6px;"></div>
<div class="r" style="left:289px;top:702px;width:1275px;height:188px;background:#1e1e1e;border-radius:4px;"></div>
<div class="t" style="left:297px;top:711.4px;font-size:13px;font-family:'Liberation Mono', monospace;color:#d9d9d9;-webkit-text-stroke:0.25px #d9d9d9;">Godot Engine v4.6.stable.custom_build - https://godotengine.org</div>
<div class="t" style="left:297px;top:726.9px;font-size:13px;font-family:'Liberation Mono', monospace;color:#d9d9d9;-webkit-text-stroke:0.25px #d9d9d9;">Metal 3.2 - Forward+ - Using Device #0: Apple - Apple M2 Max (Apple8)</div>
<div class="t" style="left:297px;top:758.4px;font-size:13px;font-family:'Liberation Mono', monospace;color:#9a9a9a;-webkit-text-stroke:0.25px #9a9a9a;">--- Debugging process stopped ---</div>
<div class="r" style="left:289px;top:896px;width:1275px;height:28px;background:#1e1e1e;border-radius:4px;"></div>
<div class="t" style="left:297px;top:902.7px;font-size:15px;color:#7c7c7c;">Filter Messages</div>
<div class="r" style="left:289px;top:930px;width:61px;height:30px;background:#3a3a3a;border-radius:4px;"></div>
<div class="t" style="left:297px;top:936.7px;font-size:15px;color:#dcdcdc;">Output</div>
<div class="t" style="left:362px;top:936.7px;font-size:15px;color:#dcdcdc;">Debugger</div>
<div class="t" style="left:448px;top:936.7px;font-size:15px;color:#dcdcdc;">Audio</div>
<div class="t" style="left:506px;top:936.7px;font-size:15px;color:#dcdcdc;">Animation</div>
<div class="t" style="left:592px;top:936.7px;font-size:15px;color:#dcdcdc;">Shader Editor</div>
<div class="t" style="left:702px;top:936.7px;font-size:15px;color:#dcdcdc;">GridMap</div>
<div class="t" style="left:1486px;top:936.7px;font-size:15px;color:#9a9a9a;">4.6.stable</div>
<div class="r" style="left:1569px;top:782px;width:59px;height:32px;background:#383838;border-radius:4px;"></div>
<div class="t" style="left:1603px;top:790.7px;font-size:15px;color:#dcdcdc;">3</div>
<div class="r" style="left:1569px;top:819px;width:59px;height:32px;background:#383838;border-radius:4px;"></div>
<div class="t" style="left:1603px;top:827.7px;font-size:15px;color:#dcdcdc;">0</div>
<div class="r" style="left:1569px;top:855px;width:59px;height:32px;background:#383838;border-radius:4px;"></div>
<div class="t" style="left:1603px;top:863.7px;font-size:15px;color:#dcdcdc;">0</div>
<div class="r" style="left:1569px;top:892px;width:59px;height:32px;background:#383838;border-radius:4px;"></div>
<div class="t" style="left:1603px;top:900.7px;font-size:15px;color:#dcdcdc;">1</div>
<div class="r" style="left:1601px;top:741px;width:27px;height:26px;background:#3a3a3a;border-radius:4px;"></div>
<div class="r" style="left:1636px;top:41px;width:280px;height:915px;background:#292929;border-radius:6px;"></div>
<div class="r" style="left:1732px;top:41px;width:184px;height:31px;background:#161616;"></div>
<div class="t" style="left:1651px;top:48.7px;font-size:15px;color:#dedede;">Inspector</div>
<div class="t" style="left:1748px;top:48.7px;font-size:15px;color:#bdbdbd;">Signals</div>
<div class="t" style="left:1829px;top:48.7px;font-size:15px;color:#bdbdbd;">Groups</div>
<div class="r" style="left:1642px;top:107px;width:236px;height:32px;background:#3a3a3a;border-radius:5px;"></div>
<div class="t" style="left:1678px;top:115.2px;font-size:15px;color:#dcdcdc;">GridMap</div>
<div class="r" style="left:1642px;top:143px;width:236px;height:28px;background:#1e1e1e;border-radius:4px;"></div>
<div class="t" style="left:1650px;top:149.7px;font-size:15px;color:#7c7c7c;">Filter Properties</div>
<div class="r" style="left:1642px;top:182px;width:268px;height:30px;background:#363636;border-radius:5px;"></div>
<div class="t" style="left:1757px;top:189.9px;font-size:14.6px;font-weight:700;color:#e0e0e0;">GridMap</div>
<div class="r" style="left:1642px;top:216px;width:134px;height:28px;background:#2f2f2f;border-radius:3px;"></div>
<div class="r" style="left:1776px;top:216px;width:134px;height:28px;background:#1e1e1e;border-radius:3px;"></div>
<div class="t" style="left:1650px;top:222.2px;font-size:15px;color:#d2d2d2;">Mesh Library</div>
<div class="t" style="left:1836px;top:222.7px;font-size:15px;color:#dcdcdc;">meshl</div>
<div class="r" style="left:1776px;top:247px;width:134px;height:28px;background:#1e1e1e;border-radius:3px;"></div>
<div class="t" style="left:1650px;top:251.9px;font-size:15px;color:#d2d2d2;">Physics Material</div>
<div class="t" style="left:1786px;top:253.7px;font-size:15px;color:#dcdcdc;">&lt;empty&gt;</div>
<div class="t" style="left:1660px;top:280.4px;font-size:14.4px;font-weight:700;color:#dcdcdc;">Cell</div>
<div class="t" style="left:1662px;top:305.0px;font-size:15px;color:#d2d2d2;">Size</div>
<div class="r" style="left:1654px;top:328px;width:256px;height:28px;background:#1e1e1e;border-radius:4px;"></div>
<div class="t" style="left:1665px;top:334.2px;font-size:15px;color:#b04a5c;">x</div>
<div class="t" style="left:1749px;top:334.2px;font-size:15px;color:#8a9a40;">y</div>
<div class="t" style="left:1837px;top:334.2px;font-size:15px;color:#4a7ab8;">z</div>
<div class="t" style="left:1682px;top:334.2px;font-size:15px;color:#dcdcdc;">1.0</div>
<div class="t" style="left:1769px;top:334.2px;font-size:15px;color:#dcdcdc;">1.0</div>
<div class="t" style="left:1855px;top:334.2px;font-size:15px;color:#dcdcdc;">1.0</div>
<div class="t" style="left:1710px;top:334.2px;font-size:15px;color:#777777;">m</div>
<div class="t" style="left:1797px;top:334.2px;font-size:15px;color:#777777;">m</div>
<div class="t" style="left:1883px;top:334.2px;font-size:15px;color:#777777;">m</div>
<div class="r" style="left:1782px;top:359.5px;width:128px;height:27.5px;background:#1e1e1e;border-radius:4px;"></div>
<div class="t" style="left:1662px;top:364.4px;font-size:15px;color:#d2d2d2;">Octant Size</div>
<div class="t" style="left:1802px;top:364.9px;font-size:15px;color:#dcdcdc;">8</div>
<div class="r" style="left:1782px;top:390.0px;width:128px;height:27.5px;background:#1e1e1e;border-radius:4px;"></div>
<div class="t" style="left:1662px;top:394.9px;font-size:15px;color:#d2d2d2;">Center X</div>
<div class="t" style="left:1812px;top:396.4px;font-size:15px;color:#dcdcdc;">On</div>
<div class="r" style="left:1782px;top:420.5px;width:128px;height:27.5px;background:#1e1e1e;border-radius:4px;"></div>
<div class="t" style="left:1662px;top:425.4px;font-size:15px;color:#d2d2d2;">Center Y</div>
<div class="t" style="left:1812px;top:426.9px;font-size:15px;color:#dcdcdc;">On</div>
<div class="r" style="left:1782px;top:451.0px;width:128px;height:27.5px;background:#1e1e1e;border-radius:4px;"></div>
<div class="t" style="left:1662px;top:455.9px;font-size:15px;color:#d2d2d2;">Center Z</div>
<div class="t" style="left:1812px;top:457.4px;font-size:15px;color:#dcdcdc;">On</div>
<div class="r" style="left:1782px;top:481.0px;width:128px;height:27.5px;background:#1e1e1e;border-radius:4px;"></div>
<div class="t" style="left:1662px;top:485.9px;font-size:15px;color:#d2d2d2;">Scale</div>
<div class="t" style="left:1802px;top:486.4px;font-size:15px;color:#dcdcdc;">1.0</div>
<div class="t" style="left:1660px;top:515.0px;font-size:14.4px;font-weight:700;color:#dcdcdc;">Collision</div>
<div class="t" style="left:1660px;top:539.5px;font-size:14.4px;font-weight:700;color:#dcdcdc;">Navigation</div>
<div class="t" style="left:1660px;top:600.5px;font-size:14.4px;font-weight:700;color:#dcdcdc;">Transform</div>
<div class="t" style="left:1660px;top:625.0px;font-size:14.4px;font-weight:700;color:#dcdcdc;">Visibility</div>
<div class="t" style="left:1660px;top:686.0px;font-size:14.4px;font-weight:700;color:#dcdcdc;">Process</div>
<div class="t" style="left:1660px;top:710.5px;font-size:14.4px;font-weight:700;color:#dcdcdc;">Physics Interpolation</div>
<div class="t" style="left:1660px;top:735.0px;font-size:14.4px;font-weight:700;color:#dcdcdc;">Auto Translate</div>
<div class="t" style="left:1660px;top:759.5px;font-size:14.4px;font-weight:700;color:#dcdcdc;">Editor Description</div>
<div class="r" style="left:1642px;top:563px;width:268px;height:30px;background:#363636;border-radius:5px;"></div>
<div class="t" style="left:1759px;top:571.0px;font-size:14.4px;font-weight:700;color:#e0e0e0;">Node3D</div>
<div class="r" style="left:1642px;top:648px;width:268px;height:30px;background:#363636;border-radius:5px;"></div>
<div class="t" style="left:1768px;top:656.0px;font-size:14.4px;font-weight:700;color:#e0e0e0;">Node</div>
<div class="t" style="left:1650px;top:787.7px;font-size:15px;color:#d2d2d2;">Script</div>
<div class="r" style="left:1776px;top:783px;width:134px;height:28px;background:#1e1e1e;border-radius:3px;"></div>
<div class="t" style="left:1786px;top:789.7px;font-size:15px;color:#dcdcdc;">&lt;empty&gt;</div>
<div class="r" style="left:1709px;top:823px;width:133px;height:33px;background:#3a3a3a;border-radius:4px;"></div>
<div class="t" style="left:1741px;top:832.2px;font-size:15px;color:#dcdcdc;">Add Metadata</div>
<svg class="i" style="left:766.5px;top:11.5px" width="15" height="15" viewBox="0 0 16 16"><g fill="none" stroke="#e0e0e0" stroke-width="1.9" stroke-linejoin="round"><path d="M3.5 13V5.5H12"/></g><path d="M10.5 2.5L14.5 5.5L10.5 8.5Z" fill="#e0e0e0"/><path d="M0.8 11.5L3.5 15.3L6.2 11.5Z" fill="#e0e0e0"/></svg>
<svg class="i" style="left:828.5px;top:11.5px" width="15" height="15" viewBox="0 0 16 16"><g fill="none" stroke="#58a6f2" stroke-width="1.9"><path d="M3 2.5V13.5H13.5"/><path d="M3.5 13L12 4.5"/></g><path d="M0.3 5L3 1.2L5.7 5Z" fill="#58a6f2"/><path d="M11 11L15 13.5L11 16Z" fill="#58a6f2"/><path d="M9 2.5H13.5V7Z" fill="#58a6f2"/></svg>
<svg class="i" style="left:890.5px;top:11.5px" width="15" height="15" viewBox="0 0 16 16"><path d="M5 1.5H14V4H11.5V12.5A2.5 2.5 0 0 1 9 15H2.5A2 2 0 0 1 2.5 11H5Z" fill="#e0e0e0"/></svg>
<svg class="i" style="left:977.5px;top:11.5px" width="15" height="15" viewBox="0 0 16 16"><circle cx="8" cy="3.5" r="2.3" fill="#e0e0e0"/><path d="M7 5H9V10H7Z" fill="#e0e0e0"/><path d="M3 10H13V12.5H3Z" fill="#e0e0e0"/><rect x="1" y="13" width="14" height="2.5" rx="0.5" fill="#e0e0e0"/></svg>
<svg class="i" style="left:1063.5px;top:11.5px" width="15" height="15" viewBox="0 0 16 16"><g fill="none" stroke="#e0e0e0" stroke-width="1.9"><path d="M8 1V10M4.5 6.5L8 10L11.5 6.5"/><path d="M1.8 9V14H14.2V9"/></g></svg>
<svg class="i" style="left:1592.0px;top:11.0px" width="15" height="15" viewBox="0 0 16 16"><path d="M3.5 2L13.5 8L3.5 14Z" fill="#e0e0e0"/></svg>
<svg class="i" style="left:1624.5px;top:11.0px" width="15" height="15" viewBox="0 0 16 16"><rect x="3" y="2" width="3.6" height="12" rx="0.8" fill="#777"/><rect x="9.4" y="2" width="3.6" height="12" rx="0.8" fill="#777"/></svg>
<svg class="i" style="left:1657.0px;top:11.5px" width="14" height="14" viewBox="0 0 16 16"><rect x="2.5" y="2.5" width="11" height="11" rx="1" fill="#777"/></svg>
<svg class="i" style="left:1688.5px;top:11.0px" width="15" height="15" viewBox="0 0 16 16"><rect x="1" y="2" width="14" height="10" rx="1.5" fill="#777"/><path d="M6 4.5L11 7L6 9.5Z" fill="#161616"/><path d="M5 14.5H11" stroke="#777" stroke-width="1.6"/></svg>
<svg class="i" style="left:1720.5px;top:11.5px" width="15" height="15" viewBox="0 0 16 16"><rect x="1" y="5.5" width="14" height="9.5" rx="1" fill="#e0e0e0"/><path d="M2 2.5h2.5v1.8H2zM6 2.5h2.5v1.8H6zM10 2.5h2.5v1.8H10zM13.5 2.5h1.5v1.8h-1.5z" fill="#e0e0e0"/><path d="M6 7.5L11 10.2L6 13Z" fill="#161616"/></svg>
<svg class="i" style="left:1752.5px;top:11.5px" width="15" height="15" viewBox="0 0 16 16"><rect x="1" y="5.5" width="14" height="9.5" rx="1" fill="#e0e0e0"/><path d="M2 2.5h2.5v1.8H2zM6 2.5h2.5v1.8H6zM10 2.5h2.5v1.8H10zM13.5 2.5h1.5v1.8h-1.5z" fill="#e0e0e0"/><rect x="3" y="7.5" width="10" height="5.5" fill="#161616"/><path d="M5 9.5H8L9 10.5H11.5V12H5Z" fill="#888"/></svg>
<svg class="i" style="left:1784.5px;top:11.5px" width="15" height="15" viewBox="0 0 16 16"><circle cx="7.5" cy="7.5" r="6" fill="#e0e0e0"/><g fill="#161616"><circle cx="7.5" cy="4.3" r="1.3"/><circle cx="7.5" cy="10.7" r="1.3"/><circle cx="4.3" cy="7.5" r="1.3"/><circle cx="10.7" cy="7.5" r="1.3"/></g><path d="M11.5 12L14 15" stroke="#e0e0e0" stroke-width="1.8" stroke-linecap="round"/></svg>
<svg class="i" style="left:1891.0px;top:11.5px" width="14" height="14" viewBox="0 0 16 16"><path d="M4 6L8 10L12 6" fill="none" stroke="#68ae48" stroke-width="2.2" stroke-linecap="round" stroke-linejoin="round"/></svg>
<svg class="i" style="left:265.25px;top:48.25px" width="15.5" height="15.5" viewBox="0 0 16 16"><circle cx="8" cy="2" r="1.75" fill="#a0a0a0"/><circle cx="8" cy="8" r="1.75" fill="#a0a0a0"/><circle cx="8" cy="14" r="1.75" fill="#a0a0a0"/></svg>
<svg class="i" style="left:14.5px;top:85.0px" width="15" height="15" viewBox="0 0 16 16"><path d="M8 1.5V14.5M1.5 8H14.5" stroke="#e0e0e0" stroke-width="1.8" fill="none"/></svg>
<svg class="i" style="left:46.5px;top:85.0px" width="15" height="15" viewBox="0 0 16 16"><g fill="none" stroke="#e0e0e0" stroke-width="1.9" stroke-linecap="round"><path d="M6.5 9.5L9.5 6.5"/><path d="M7.5 4.5L9 3a2.5 2.5 0 0 1 3.8 3.5L11.3 8"/><path d="M4.7 8L3.2 9.5a2.5 2.5 0 0 0 3.5 3.5L8.2 11.5"/></g></svg>
<svg class="i" style="left:188.5px;top:85.5px" width="14" height="14" viewBox="0 0 16 16"><g fill="none" stroke="#e0e0e0" stroke-width="2"><circle cx="6.5" cy="6.5" r="4.3"/><path d="M9.6 9.6L14 14" stroke-linecap="round"/></g></svg>
<svg class="i" style="left:223.0px;top:85.0px" width="15" height="15" viewBox="0 0 16 16"><path d="M4 2H12V10H9V14H2V6Z" fill="#d8d8d8"/><path d="M11.5 8.5V15M8.3 11.8H14.7" stroke="#3fd16a" stroke-width="2"/></svg>
<svg class="i" style="left:254.75px;top:84.75px" width="15.5" height="15.5" viewBox="0 0 16 16"><circle cx="8" cy="2" r="1.75" fill="#e0e0e0"/><circle cx="8" cy="8" r="1.75" fill="#e0e0e0"/><circle cx="8" cy="14" r="1.75" fill="#e0e0e0"/></svg>
<svg class="i" style="left:8.0px;top:127.0px" width="12" height="12" viewBox="0 0 16 16"><path d="M4 6L8 10L12 6" fill="none" stroke="#9a9a9a" stroke-width="1.5" stroke-linecap="round" stroke-linejoin="round"/></svg>
<svg class="i" style="left:24.5px;top:125.5px" width="15" height="15" viewBox="0 0 16 16"><circle cx="8" cy="8" r="5.2" fill="none" stroke="#ff5f5f" stroke-width="1.9"/></svg>
<svg class="i" style="left:36.5px;top:149.5px" width="15" height="15" viewBox="0 0 16 16"><defs><clipPath id="gl"><rect x="0" y="0" width="8" height="16"/></clipPath><clipPath id="gr"><rect x="8" y="0" width="8" height="16"/></clipPath></defs><g fill="none" stroke-width="1.7"><g clip-path="url(#gl)" stroke="#ff5a5a"><circle cx="8" cy="8" r="6.3"/><path d="M1.7 6H14.3M1.7 10H14.3M8 1.7C4.8 4.5 4.8 11.5 8 14.3"/></g><g clip-path="url(#gr)" stroke="#5a8cff"><circle cx="8" cy="8" r="6.3"/><path d="M1.7 6H14.3M1.7 10H14.3M8 1.7C11.2 4.5 11.2 11.5 8 14.3"/></g></g></svg>
<svg class="i" style="left:36.5px;top:173.5px" width="15" height="15" viewBox="0 0 16 16"><circle cx="8" cy="8" r="3.3" fill="#ff5f5f"/><g fill="#ff5f5f"><rect x="7" y="0.5" width="2" height="3" rx="0.6"/><rect x="7" y="12.5" width="2" height="3" rx="0.6"/><rect x="0.5" y="7" width="3" height="2" rx="0.6"/><rect x="12.5" y="7" width="3" height="2" rx="0.6"/><circle cx="3.2" cy="3.2" r="1.3"/><circle cx="12.8" cy="3.2" r="1.3"/><circle cx="3.2" cy="12.8" r="1.3"/><circle cx="12.8" cy="12.8" r="1.3"/></g></svg>
<svg class="i" style="left:36.5px;top:197.5px" width="15" height="15" viewBox="0 0 16 16"><path d="M7 1.5L2 4.5V11.5L7 14.5L12 11.5V9.5L9 11L5 9V6.5L8 5L9.5 2.5Z" fill="#ff5f5f"/><circle cx="12" cy="5.5" r="1.8" fill="#ff5f5f"/></svg>
<svg class="i" style="left:36.5px;top:221.5px" width="15" height="15" viewBox="0 0 16 16"><circle cx="8" cy="8" r="5.2" fill="none" stroke="#ff5f5f" stroke-width="1.9"/></svg>
<svg class="i" style="left:36.5px;top:245.5px" width="15" height="15" viewBox="0 0 16 16"><circle cx="5" cy="5" r="3" fill="#ff5f5f"/><circle cx="10.5" cy="4.5" r="2.5" fill="#ff5f5f"/><rect x="1.5" y="6.5" width="10" height="7" rx="1" fill="#ff5f5f"/><path d="M11 10L15 7.5V13.5L11 11Z" fill="#ff5f5f"/></svg>
<svg class="i" style="left:258.5px;top:125.5px" width="15" height="15" viewBox="0 0 16 16"><path d="M8 2.2C3.8 2.2 0.9 5.6 0.7 8 0.9 10.4 3.8 13.8 8 13.8s7.1-3.4 7.3-5.8C15.1 5.6 12.2 2.2 8 2.2z" fill="#e0e0e0"/><circle cx="8" cy="8" r="3.9" fill="#292929"/><circle cx="8" cy="8" r="1.9" fill="#e0e0e0"/></svg>
<svg class="i" style="left:258.5px;top:173.5px" width="15" height="15" viewBox="0 0 16 16"><path d="M8 2.2C3.8 2.2 0.9 5.6 0.7 8 0.9 10.4 3.8 13.8 8 13.8s7.1-3.4 7.3-5.8C15.1 5.6 12.2 2.2 8 2.2z" fill="#e0e0e0"/><circle cx="8" cy="8" r="3.9" fill="#292929"/><circle cx="8" cy="8" r="1.9" fill="#e0e0e0"/></svg>
<svg class="i" style="left:258.5px;top:197.5px" width="15" height="15" viewBox="0 0 16 16"><path d="M8 2.2C3.8 2.2 0.9 5.6 0.7 8 0.9 10.4 3.8 13.8 8 13.8s7.1-3.4 7.3-5.8C15.1 5.6 12.2 2.2 8 2.2z" fill="#e0e0e0"/><circle cx="8" cy="8" r="3.9" fill="#292929"/><circle cx="8" cy="8" r="1.9" fill="#e0e0e0"/></svg>
<svg class="i" style="left:258.5px;top:221.5px" width="15" height="15" viewBox="0 0 16 16"><path d="M8 2.2C3.8 2.2 0.9 5.6 0.7 8 0.9 10.4 3.8 13.8 8 13.8s7.1-3.4 7.3-5.8C15.1 5.6 12.2 2.2 8 2.2z" fill="#e0e0e0"/><circle cx="8" cy="8" r="3.9" fill="#292929"/><circle cx="8" cy="8" r="1.9" fill="#e0e0e0"/></svg>
<svg class="i" style="left:258.5px;top:245.5px" width="15" height="15" viewBox="0 0 16 16"><path d="M8 2.2C3.8 2.2 0.9 5.6 0.7 8 0.9 10.4 3.8 13.8 8 13.8s7.1-3.4 7.3-5.8C15.1 5.6 12.2 2.2 8 2.2z" fill="#e0e0e0"/><circle cx="8" cy="8" r="3.9" fill="#292929"/><circle cx="8" cy="8" r="1.9" fill="#e0e0e0"/></svg>
<svg class="i" style="left:237.5px;top:221.5px" width="15" height="15" viewBox="0 0 16 16"><rect x="1.5" y="6" width="13" height="8" fill="#e0e0e0"/><path d="M1.5 2.5L14.5 2.5L14.5 4.5L1.5 4.5Z" fill="#e0e0e0"/><path d="M3.5 2.5h2v2h-2zM7.5 2.5h2v2h-2zM11.5 2.5h2v2h-2z" fill="#292929"/><path d="M5.5 8H10.5L8 11Z" fill="#292929"/></svg>
<svg class="i" style="left:265.45px;top:834.95px" width="15.5" height="15.5" viewBox="0 0 16 16"><circle cx="8" cy="2" r="1.75" fill="#a0a0a0"/><circle cx="8" cy="8" r="1.75" fill="#a0a0a0"/><circle cx="8" cy="14" r="1.75" fill="#a0a0a0"/></svg>
<svg class="i" style="left:11.0px;top:872.0px" width="14" height="14" viewBox="0 0 16 16"><path d="M10 3L5.5 8L10 13" fill="none" stroke="#cfcfcf" stroke-width="1.5" stroke-linecap="round" stroke-linejoin="round"/></svg>
<svg class="i" style="left:30.5px;top:872.0px" width="14" height="14" viewBox="0 0 16 16"><path d="M6 3L10.5 8L6 13" fill="none" stroke="#999" stroke-width="1.5" stroke-linecap="round" stroke-linejoin="round"/></svg>
<svg class="i" style="left:254.5px;top:871.5px" width="15" height="15" viewBox="0 0 16 16"><rect x="1.5" y="2.5" width="13" height="11" fill="none" stroke="#e0e0e0" stroke-width="1.8"/><rect x="1.5" y="2.5" width="13" height="2.5" fill="#e0e0e0"/></svg>
<svg class="i" style="left:220.0px;top:904.5px" width="14" height="14" viewBox="0 0 16 16"><g fill="none" stroke="#e0e0e0" stroke-width="2"><circle cx="6.5" cy="6.5" r="4.3"/><path d="M9.6 9.6L14 14" stroke-linecap="round"/></g></svg>
<svg class="i" style="left:254.5px;top:904.0px" width="15" height="15" viewBox="0 0 16 16"><path d="M3.5 1L6.5 4.5H4.5V11.5H6.5L3.5 15L0.5 11.5H2.5V4.5H0.5Z" fill="#e0e0e0"/><g fill="#e0e0e0"><rect x="8" y="2" width="7" height="1.8"/><rect x="8" y="6" width="5" height="1.8"/><rect x="8" y="10" width="3" height="1.8"/><rect x="8" y="14" width="1.8" height="1.8"/></g></svg>
<div class="r" style="left:272px;top:930px;width:5px;height:15px;background:#555;border-radius:2.5px;"></div>
<svg class="i" style="left:24.0px;top:943.0px" width="16" height="16" viewBox="0 0 16 16"><path d="M8 0.8L10.1 5.6L15.2 5.9L11.3 9.3L12.5 14.5L8 11.8L3.5 14.5L4.7 9.3L0.8 5.9L5.9 5.6Z" fill="#e0e0e0"/></svg>
<svg class="i" style="left:302.0px;top:49.0px" width="14" height="14" viewBox="0 0 16 16"><circle cx="8" cy="8" r="5.2" fill="none" stroke="#ff5f5f" stroke-width="1.9"/></svg>
<svg class="i" style="left:365.0px;top:50.0px" width="12" height="12" viewBox="0 0 16 16"><path d="M3 3L13 13M13 3L3 13" stroke="#f0f0f0" stroke-width="2" stroke-linecap="round"/></svg>
<svg class="i" style="left:412.0px;top:49.0px" width="14" height="14" viewBox="0 0 16 16"><circle cx="8" cy="8" r="5.2" fill="none" stroke="#ff5f5f" stroke-width="1.9"/></svg>
<svg class="i" style="left:493.0px;top:48.5px" width="15" height="15" viewBox="0 0 16 16"><path d="M8 1.5V14.5M1.5 8H14.5" stroke="#999" stroke-width="1.6" fill="none"/></svg>
<svg class="i" style="left:1577.25px;top:48.25px" width="15.5" height="15.5" viewBox="0 0 16 16"><circle cx="8" cy="2" r="1.75" fill="#e0e0e0"/><circle cx="8" cy="8" r="1.75" fill="#e0e0e0"/><circle cx="8" cy="14" r="1.75" fill="#e0e0e0"/></svg>
<svg class="i" style="left:1609.5px;top:48.5px" width="15" height="15" viewBox="0 0 16 16"><g fill="#e0e0e0"><path d="M1 1H6L4.3 2.7L6.3 4.7L4.7 6.3L2.7 4.3L1 6Z"/><path d="M15 1H10L11.7 2.7L9.7 4.7L11.3 6.3L13.3 4.3L15 6Z"/><path d="M1 15H6L4.3 13.3L6.3 11.3L4.7 9.7L2.7 11.7L1 10Z"/><path d="M15 15H10L11.7 13.3L9.7 11.3L11.3 9.7L13.3 11.7L15 10Z"/></g></svg>
<svg class="i" style="left:296.0px;top:85.5px" width="15" height="15" viewBox="0 0 16 16"><circle cx="8" cy="8" r="1.8" fill="#58a6f2"/><path d="M8 2.5A5.5 5.5 0 1 0 12 12.5" fill="none" stroke="#58a6f2" stroke-width="1.8"/><path d="M5 0.5L8 2.5L5 5Z" fill="#58a6f2"/><path d="M12.5 5.5L15 8L12.5 10.5Z" fill="#58a6f2"/><path d="M10 2.5L11.2 3.7M12.6 12L13.5 13" stroke="#58a6f2" stroke-width="1.6"/></svg>
<svg class="i" style="left:327.5px;top:85.5px" width="15" height="15" viewBox="0 0 16 16"><circle cx="8" cy="8" r="1.8" fill="#e0e0e0"/><path d="M8 0.5L10.5 3H5.5Z M8 15.5L10.5 13H5.5Z M0.5 8L3 5.5V10.5Z M15.5 8L13 5.5V10.5Z" fill="#e0e0e0"/></svg>
<svg class="i" style="left:359.5px;top:85.5px" width="15" height="15" viewBox="0 0 16 16"><circle cx="8" cy="8" r="1.8" fill="#e0e0e0"/><path d="M4 13A6 6 0 1 1 12 13" fill="none" stroke="#e0e0e0" stroke-width="1.9"/><path d="M2 11.5H6V15.5H2Z" fill="#e0e0e0"/></svg>
<svg class="i" style="left:391.5px;top:85.5px" width="15" height="15" viewBox="0 0 16 16"><circle cx="8" cy="8" r="1.8" fill="#e0e0e0"/><path d="M9.5 1.5H14.5V6.5Z M1.5 9.5V14.5H6.5Z" fill="#e0e0e0"/><path d="M12 4L10 6M4 12L6 10" stroke="#e0e0e0" stroke-width="1.8"/></svg>
<svg class="i" style="left:423.5px;top:85.5px" width="15" height="15" viewBox="0 0 16 16"><path d="M2 2L13 6.5L8.5 8L12.5 12L11 13.5L7 9.5L5.5 14Z" fill="#e0e0e0"/></svg>
<svg class="i" style="left:467.5px;top:85.5px" width="15" height="15" viewBox="0 0 16 16"><path d="M2 2H11V4H4V7H9V9H4V12H7V14H2Z" fill="#e0e0e0"/><path d="M8 8L15 11L12 12L14 14.5L13 15.5L11 13L9.5 15Z" fill="#e0e0e0"/></svg>
<svg class="i" style="left:499.5px;top:85.5px" width="15" height="15" viewBox="0 0 16 16"><path d="M4.5 7V5A3.5 3.5 0 0 1 11.5 5V7" fill="none" stroke="#e0e0e0" stroke-width="2"/><rect x="2.5" y="7" width="11" height="8" rx="1" fill="#e0e0e0"/><circle cx="8" cy="11" r="1.4" fill="#292929"/></svg>
<svg class="i" style="left:531.5px;top:85.5px" width="15" height="15" viewBox="0 0 16 16"><rect x="3" y="7" width="6" height="6" fill="#888"/><rect x="7" y="3" width="6" height="6" fill="none" stroke="#e0e0e0" stroke-width="1.5"/><g fill="#e0e0e0"><rect x="1" y="1" width="2" height="2"/><rect x="13" y="13" width="2" height="2"/><rect x="1" y="13" width="2" height="2"/><rect x="13" y="1" width="2" height="2"/></g></svg>
<svg class="i" style="left:563.5px;top:85.5px" width="15" height="15" viewBox="0 0 16 16"><path d="M2 2V14H14Z" fill="#e0e0e0"/><path d="M4.5 8V11.5H8Z" fill="#292929"/></svg>
<svg class="i" style="left:607.5px;top:85.5px" width="15" height="15" viewBox="0 0 16 16"><path d="M8 1L14.5 4.5V11.5L8 15L1.5 11.5V4.5Z" fill="#e0e0e0"/><path d="M8 8.5V13.5M8 8.5L3 5.8M8 8.5L13 5.8" stroke="#282828" stroke-width="1.3"/><path d="M3 5L8 2.5L13 5L8 7.5Z" fill="#292929" opacity="0.0"/></svg>
<svg class="i" style="left:640.5px;top:85.5px" width="15" height="15" viewBox="0 0 16 16"><path d="M6 15V10A3 3 0 0 1 12 10V15" fill="none" stroke="#e0e0e0" stroke-width="2"/><g fill="#e0e0e0"><circle cx="2.5" cy="4" r="1.2"/><circle cx="2.5" cy="8.5" r="1.2"/><circle cx="7" cy="2.5" r="1.2"/></g></svg>
<svg class="i" style="left:683.5px;top:85.5px" width="15" height="15" viewBox="0 0 16 16"><circle cx="8" cy="8" r="3.3" fill="#777"/><g fill="#777"><rect x="7" y="0.5" width="2" height="3" rx="0.6"/><rect x="7" y="12.5" width="2" height="3" rx="0.6"/><rect x="0.5" y="7" width="3" height="2" rx="0.6"/><rect x="12.5" y="7" width="3" height="2" rx="0.6"/><circle cx="3.2" cy="3.2" r="1.3"/><circle cx="12.8" cy="3.2" r="1.3"/><circle cx="3.2" cy="12.8" r="1.3"/><circle cx="12.8" cy="12.8" r="1.3"/></g></svg>
<svg class="i" style="left:716.5px;top:85.5px" width="15" height="15" viewBox="0 0 16 16"><circle cx="8" cy="8" r="6.2" fill="none" stroke="#7a7a7a" stroke-width="1.8"/><path d="M2 8H14M8 2V14" stroke="#7a7a7a" stroke-width="1.4"/><path d="M8 2C5 4.5 5 11.5 8 14C11 11.5 11 4.5 8 2" fill="none" stroke="#7a7a7a" stroke-width="1.4"/></svg>
<svg class="i" style="left:748.25px;top:85.25px" width="15.5" height="15.5" viewBox="0 0 16 16"><circle cx="8" cy="2" r="1.75" fill="#e0e0e0"/><circle cx="8" cy="8" r="1.75" fill="#e0e0e0"/><circle cx="8" cy="14" r="1.75" fill="#e0e0e0"/></svg>
<svg class="i" style="left:304.0px;top:132.0px" width="15" height="15" viewBox="0 0 16 16"><circle cx="8" cy="2" r="1.75" fill="#e0e0e0"/><circle cx="8" cy="8" r="1.75" fill="#e0e0e0"/><circle cx="8" cy="14" r="1.75" fill="#e0e0e0"/></svg>
<svg class="i" style="left:1574.5px;top:706.5px" width="15" height="15" viewBox="0 0 16 16"><path d="M7 1H9V7H7Z" fill="#e0e0e0"/><path d="M3 7H13V10H3Z" fill="#e0e0e0"/><path d="M2.5 11H13.5V15H2.5Z" fill="#e0e0e0"/></svg>
<svg class="i" style="left:1606.5px;top:706.5px" width="15" height="15" viewBox="0 0 16 16"><rect x="1.5" y="4.5" width="10" height="10" rx="1" fill="none" stroke="#e0e0e0" stroke-width="1.8"/><path d="M4.5 1.5H14.5V11.5" fill="none" stroke="#e0e0e0" stroke-width="1.8"/></svg>
<div class="r" style="left:1573px;top:729px;width:52px;height:1.5px;background:#1a1a1a;"></div>
<svg class="i" style="left:1574.5px;top:745.5px" width="15" height="15" viewBox="0 0 16 16"><g fill="#e0e0e0"><path d="M3.5 1L6.5 4.5H4.5V15H2.5V4.5H0.5Z"/><rect x="1" y="1" width="14" height="1.8"/><rect x="8" y="6" width="7" height="1.8"/><rect x="8" y="9.5" width="7" height="1.8"/><rect x="8" y="13" width="7" height="1.8"/></g></svg>
<svg class="i" style="left:1607.0px;top:746.0px" width="14" height="14" viewBox="0 0 16 16"><g fill="none" stroke="#58a6f2" stroke-width="2"><circle cx="6.5" cy="6.5" r="4.3"/><path d="M9.6 9.6L14 14" stroke-linecap="round"/></g></svg>
<div class="r" style="left:1573px;top:770px;width:52px;height:1.5px;background:#1a1a1a;"></div>
<svg class="i" style="left:1577.5px;top:790.5px" width="15" height="15" viewBox="0 0 16 16"><rect x="1.5" y="1.5" width="13" height="13" rx="2" fill="#e0e0e0"/><path d="M8 3.5V9.5" stroke="#282828" stroke-width="2.2"/><circle cx="8" cy="12" r="1.2" fill="#292929"/></svg>
<svg class="i" style="left:1577.5px;top:827.5px" width="15" height="15" viewBox="0 0 16 16"><circle cx="8" cy="8" r="6.8" fill="#f0553a"/><path d="M5.3 5.3L10.7 10.7M10.7 5.3L5.3 10.7" stroke="#3a2222" stroke-width="2.2" stroke-linecap="round"/></svg>
<svg class="i" style="left:1577.5px;top:863.5px" width="15" height="15" viewBox="0 0 16 16"><circle cx="8" cy="8" r="6.8" fill="#dcc27a"/><path d="M8 4V9.5" stroke="#282828" stroke-width="2"/><circle cx="8" cy="12" r="1.1" fill="#292929"/></svg>
<svg class="i" style="left:1577.5px;top:900.5px" width="15" height="15" viewBox="0 0 16 16"><path d="M6.5 3H9.5V12L8 15L6.5 12Z" fill="#e0e0e0"/><rect x="6.5" y="1" width="3" height="1.5" fill="#e0e0e0"/><path d="M8 5V11" stroke="#383838" stroke-width="0.8"/></svg>
<svg class="i" style="left:1541.0px;top:902.5px" width="14" height="14" viewBox="0 0 16 16"><g fill="none" stroke="#e0e0e0" stroke-width="2"><circle cx="6.5" cy="6.5" r="4.3"/><path d="M9.6 9.6L14 14" stroke-linecap="round"/></g></svg>
<svg class="i" style="left:1423.0px;top:937.0px" width="14" height="14" viewBox="0 0 16 16"><circle cx="8" cy="2" r="1.75" fill="#999"/><circle cx="8" cy="8" r="1.75" fill="#999"/><circle cx="8" cy="14" r="1.75" fill="#999"/></svg>
<div class="r" style="left:1446px;top:934px;width:1.5px;height:20px;background:#1a1a1a;"></div>
<svg class="i" style="left:1461.5px;top:936.5px" width="15" height="15" viewBox="0 0 16 16"><path d="M3 12C4.5 10 4 6 6 4A3.5 3.5 0 0 1 12 6C12.5 8 12 10 14 12Z" fill="#cfcfcf" transform="rotate(-20 8 8)"/><circle cx="6" cy="14" r="1.5" fill="#cfcfcf"/></svg>
<svg class="i" style="left:1570.0px;top:936.0px" width="14" height="14" viewBox="0 0 16 16"><path d="M4 1.5H12V3.5H10.5V7L12.5 9.5H3.5L5.5 7V3.5H4Z" fill="#e0e0e0"/><path d="M8 9.5V15" stroke="#e0e0e0" stroke-width="1.6"/></svg>
<svg class="i" style="left:1604.5px;top:935.5px" width="15" height="15" viewBox="0 0 16 16"><rect x="1" y="1" width="14" height="1.8" fill="#e0e0e0"/><path d="M4.5 4L7.5 7.5H5.5V15H3.5V7.5H1.5Z M11.5 4L14.5 7.5H12.5V15H10.5V7.5H8.5Z" fill="#e0e0e0"/></svg>
<svg class="i" style="left:1899.25px;top:48.25px" width="15.5" height="15.5" viewBox="0 0 16 16"><circle cx="8" cy="2" r="1.75" fill="#a0a0a0"/><circle cx="8" cy="8" r="1.75" fill="#a0a0a0"/><circle cx="8" cy="14" r="1.75" fill="#a0a0a0"/></svg>
<svg class="i" style="left:1648.5px;top:82.5px" width="15" height="15" viewBox="0 0 16 16"><path d="M2 1H9L13 5V15H2Z" fill="#d8d8d8"/><path d="M9 1V5H13" fill="#999"/><path d="M11.5 9V15.5M8.3 12.3H14.7" stroke="#3fd16a" stroke-width="2"/></svg>
<svg class="i" style="left:1680.5px;top:82.5px" width="15" height="15" viewBox="0 0 16 16"><path d="M1 3H6L7.5 4.5H14V13.5H1Z" fill="#e0e0e0"/><path d="M3 7H15.5L14 13.5H1.5Z" fill="#292929" opacity="0.35"/><path d="M3.5 7.5H15L13.5 13H2Z" fill="#e0e0e0"/></svg>
<svg class="i" style="left:1712.5px;top:82.5px" width="15" height="15" viewBox="0 0 16 16"><path d="M1.5 1.5H12L14.5 4V14.5H1.5Z" fill="#777"/><rect x="4" y="1.5" width="7" height="4" fill="#292929"/><circle cx="8" cy="10" r="2" fill="#292929"/></svg>
<svg class="i" style="left:1744.25px;top:82.25px" width="15.5" height="15.5" viewBox="0 0 16 16"><circle cx="8" cy="2" r="1.75" fill="#e0e0e0"/><circle cx="8" cy="8" r="1.75" fill="#e0e0e0"/><circle cx="8" cy="14" r="1.75" fill="#e0e0e0"/></svg>
<svg class="i" style="left:1836.5px;top:82.5px" width="15" height="15" viewBox="0 0 16 16"><path d="M10 3L5.5 8L10 13" fill="none" stroke="#dcdcdc" stroke-width="1.6" stroke-linecap="round" stroke-linejoin="round"/></svg>
<svg class="i" style="left:1860.0px;top:82.5px" width="15" height="15" viewBox="0 0 16 16"><path d="M6 3L10.5 8L6 13" fill="none" stroke="#888" stroke-width="1.6" stroke-linecap="round" stroke-linejoin="round"/></svg>
<svg class="i" style="left:1888.5px;top:82.5px" width="15" height="15" viewBox="0 0 16 16"><path d="M3 8A5.5 5.5 0 1 1 5 12.3" fill="none" stroke="#e0e0e0" stroke-width="1.8"/><path d="M0.5 6.5L3 10L5.8 6.5Z" fill="#e0e0e0"/><path d="M8.5 5V8.5H11" fill="none" stroke="#e0e0e0" stroke-width="1.6"/></svg>
<svg class="i" style="left:1649.5px;top:115.0px" width="15" height="15" viewBox="0 0 16 16"><path d="M7 1.5L2 4.5V11.5L7 14.5L12 11.5V9.5L9 11L5 9V6.5L8 5L9.5 2.5Z" fill="#ff5f5f"/><circle cx="12" cy="5.5" r="1.8" fill="#ff5f5f"/></svg>
<svg class="i" style="left:1854.5px;top:116.0px" width="13" height="13" viewBox="0 0 16 16"><path d="M4 6L8 10L12 6" fill="none" stroke="#dcdcdc" stroke-width="1.8" stroke-linecap="round" stroke-linejoin="round"/></svg>
<svg class="i" style="left:1887.0px;top:114.0px" width="16" height="16" viewBox="0 0 16 16"><circle cx="9" cy="4.5" r="3" fill="none" stroke="#e0e0e0" stroke-width="1.8"/><path d="M6.8 6.8L4.5 9" stroke="#e0e0e0" stroke-width="1.8"/><text x="8" y="15.5" font-family="Liberation Sans" font-weight="700" font-size="7" fill="#e0e0e0" text-anchor="middle">DOC</text></svg>
<svg class="i" style="left:1854.0px;top:150.0px" width="14" height="14" viewBox="0 0 16 16"><g fill="none" stroke="#e0e0e0" stroke-width="2"><circle cx="6.5" cy="6.5" r="4.3"/><path d="M9.6 9.6L14 14" stroke-linecap="round"/></g></svg>
<svg class="i" style="left:1887.5px;top:149.5px" width="15" height="15" viewBox="0 0 16 16"><path d="M4 1V7M2.5 7H5.5V14A1.5 1.5 0 0 1 2.5 14Z" stroke="#e0e0e0" stroke-width="1.6" fill="#e0e0e0"/><path d="M10 15V7M8 1V5A2 2 0 0 0 12 5V1" fill="none" stroke="#e0e0e0" stroke-width="1.8"/></svg>
<svg class="i" style="left:1735.5px;top:189.5px" width="15" height="15" viewBox="0 0 16 16"><path d="M7 1.5L2 4.5V11.5L7 14.5L12 11.5V9.5L9 11L5 9V6.5L8 5L9.5 2.5Z" fill="#ff5f5f"/><circle cx="12" cy="5.5" r="1.8" fill="#ff5f5f"/></svg>
<svg class="i" style="left:1752.0px;top:223.0px" width="14" height="14" viewBox="0 0 16 16"><path d="M3.5 6A5 5 0 1 1 5 12" fill="none" stroke="#e0e0e0" stroke-width="2"/><path d="M0.8 4.8L4 9L6.8 4.5Z" fill="#e0e0e0"/></svg>
<svg class="i" style="left:1784.5px;top:222.5px" width="15" height="15" viewBox="0 0 16 16"><g fill="none" stroke="#e0e0e0" stroke-width="1.9" stroke-linecap="round"><path d="M6.5 9.5L9.5 6.5"/><path d="M7.5 4.5L9 3a2.5 2.5 0 0 1 3.8 3.5L11.3 8"/><path d="M4.7 8L3.2 9.5a2.5 2.5 0 0 0 3.5 3.5L8.2 11.5"/></g></svg>
<svg class="i" style="left:1816.5px;top:222.5px" width="15" height="15" viewBox="0 0 16 16"><g stroke="#f0d020" stroke-width="2" fill="none"><path d="M2.5 2.5H13.5V8M2.5 2.5V13.5H7"/><path d="M3 3L7 7"/></g><g fill="#f0d020"><circle cx="2.5" cy="2.5" r="2"/><circle cx="13.5" cy="2.5" r="2"/><circle cx="2.5" cy="13.5" r="2"/><rect x="8" y="8" width="7" height="7"/></g><rect x="10.5" y="9.5" width="1.6" height="3" fill="#1e1e1e"/></svg>
<svg class="i" style="left:1891.0px;top:225.0px" width="12" height="12" viewBox="0 0 16 16"><path d="M4 6L8 10L12 6" fill="none" stroke="#cfcfcf" stroke-width="2" stroke-linecap="round" stroke-linejoin="round"/></svg>
<svg class="i" style="left:1862.5px;top:253.5px" width="15" height="15" viewBox="0 0 16 16"><path d="M1.5 2.5H6L7.5 4H13.5V13.5H1.5Z" fill="none" stroke="#e0e0e0" stroke-width="1.5" stroke-linejoin="round"/><path d="M4 6.5H14.5L13.2 13.5H1.8Z" fill="#e0e0e0"/><path d="M11.5 7.5L8.8 11.5H10.8L9.8 15.3L13.5 10.3H11.5L12.5 7.5Z" fill="#e8c040" stroke="#1e1e1e" stroke-width="0.6"/></svg>
<svg class="i" style="left:1891.0px;top:255.5px" width="12" height="12" viewBox="0 0 16 16"><path d="M4 6L8 10L12 6" fill="none" stroke="#cfcfcf" stroke-width="2" stroke-linecap="round" stroke-linejoin="round"/></svg>
<svg class="i" style="left:1644.5px;top:282.5px" width="11" height="11" viewBox="0 0 16 16"><path d="M4 6L8 10L12 6" fill="none" stroke="#9a9a9a" stroke-width="1.5" stroke-linecap="round" stroke-linejoin="round"/></svg>
<svg class="i" style="left:1890.0px;top:307.0px" width="14" height="14" viewBox="0 0 16 16"><path d="M3.5 6A5 5 0 1 1 5 12" fill="none" stroke="#e0e0e0" stroke-width="2"/><path d="M0.8 4.8L4 9L6.8 4.5Z" fill="#e0e0e0"/></svg>
<svg class="i" style="left:1887.0px;top:366.0px" width="14" height="14" viewBox="0 0 16 16"><path d="M4 6L8 2L12 6M4 10L8 14L12 10" fill="none" stroke="#cfcfcf" stroke-width="1.8" stroke-linecap="round" stroke-linejoin="round"/></svg>
<svg class="i" style="left:1788.5px;top:396.5px" width="15" height="15" viewBox="0 0 16 16"><rect x="0.8" y="0.8" width="14.4" height="14.4" rx="2.2" fill="#5aa7f5"/><path d="M3.6 8.2L6.7 11.2L12.5 4.6" fill="none" stroke="#fff" stroke-width="2.3" stroke-linecap="round" stroke-linejoin="round"/></svg>
<svg class="i" style="left:1788.5px;top:427.0px" width="15" height="15" viewBox="0 0 16 16"><rect x="0.8" y="0.8" width="14.4" height="14.4" rx="2.2" fill="#5aa7f5"/><path d="M3.6 8.2L6.7 11.2L12.5 4.6" fill="none" stroke="#fff" stroke-width="2.3" stroke-linecap="round" stroke-linejoin="round"/></svg>
<svg class="i" style="left:1788.5px;top:457.5px" width="15" height="15" viewBox="0 0 16 16"><rect x="0.8" y="0.8" width="14.4" height="14.4" rx="2.2" fill="#5aa7f5"/><path d="M3.6 8.2L6.7 11.2L12.5 4.6" fill="none" stroke="#fff" stroke-width="2.3" stroke-linecap="round" stroke-linejoin="round"/></svg>
<svg class="i" style="left:1644.5px;top:516.5px" width="11" height="11" viewBox="0 0 16 16"><path d="M6 4L10 8L6 12" fill="none" stroke="#a8a8a8" stroke-width="1.9" stroke-linecap="round" stroke-linejoin="round"/></svg>
<svg class="i" style="left:1644.5px;top:541.0px" width="11" height="11" viewBox="0 0 16 16"><path d="M6 4L10 8L6 12" fill="none" stroke="#a8a8a8" stroke-width="1.9" stroke-linecap="round" stroke-linejoin="round"/></svg>
<svg class="i" style="left:1644.5px;top:602.0px" width="11" height="11" viewBox="0 0 16 16"><path d="M6 4L10 8L6 12" fill="none" stroke="#a8a8a8" stroke-width="1.9" stroke-linecap="round" stroke-linejoin="round"/></svg>
<svg class="i" style="left:1644.5px;top:626.5px" width="11" height="11" viewBox="0 0 16 16"><path d="M6 4L10 8L6 12" fill="none" stroke="#a8a8a8" stroke-width="1.9" stroke-linecap="round" stroke-linejoin="round"/></svg>
<svg class="i" style="left:1644.5px;top:687.5px" width="11" height="11" viewBox="0 0 16 16"><path d="M6 4L10 8L6 12" fill="none" stroke="#a8a8a8" stroke-width="1.9" stroke-linecap="round" stroke-linejoin="round"/></svg>
<svg class="i" style="left:1644.5px;top:712.0px" width="11" height="11" viewBox="0 0 16 16"><path d="M6 4L10 8L6 12" fill="none" stroke="#a8a8a8" stroke-width="1.9" stroke-linecap="round" stroke-linejoin="round"/></svg>
<svg class="i" style="left:1644.5px;top:736.5px" width="11" height="11" viewBox="0 0 16 16"><path d="M6 4L10 8L6 12" fill="none" stroke="#a8a8a8" stroke-width="1.9" stroke-linecap="round" stroke-linejoin="round"/></svg>
<svg class="i" style="left:1644.5px;top:761.0px" width="11" height="11" viewBox="0 0 16 16"><path d="M6 4L10 8L6 12" fill="none" stroke="#a8a8a8" stroke-width="1.9" stroke-linecap="round" stroke-linejoin="round"/></svg>
<svg class="i" style="left:1736.5px;top:570.5px" width="15" height="15" viewBox="0 0 16 16"><circle cx="8" cy="8" r="5.2" fill="none" stroke="#ff5f5f" stroke-width="2.1"/></svg>
<svg class="i" style="left:1746.0px;top:655.5px" width="15" height="15" viewBox="0 0 16 16"><circle cx="8" cy="8" r="5.2" fill="none" stroke="#e0e0e0" stroke-width="2.1"/></svg>
<svg class="i" style="left:1862.5px;top:789.5px" width="15" height="15" viewBox="0 0 16 16"><path d="M1.5 2.5H6L7.5 4H13.5V13.5H1.5Z" fill="none" stroke="#e0e0e0" stroke-width="1.5" stroke-linejoin="round"/><path d="M4 6.5H14.5L13.2 13.5H1.8Z" fill="#e0e0e0"/><path d="M11.5 7.5L8.8 11.5H10.8L9.8 15.3L13.5 10.3H11.5L12.5 7.5Z" fill="#e8c040" stroke="#1e1e1e" stroke-width="0.6"/></svg>
<svg class="i" style="left:1891.0px;top:791.5px" width="12" height="12" viewBox="0 0 16 16"><path d="M4 6L8 10L12 6" fill="none" stroke="#cfcfcf" stroke-width="2" stroke-linecap="round" stroke-linejoin="round"/></svg>
<svg class="i" style="left:1717.5px;top:832.0px" width="15" height="15" viewBox="0 0 16 16"><path d="M8 1.5V14.5M1.5 8H14.5" stroke="#e0e0e0" stroke-width="1.8" fill="none"/></svg>
<div class="r" style="left:1916.5px;top:6px;width:1px;height:950px;background:#2c2c2c;"></div>
<div class="r" style="left:1917.5px;top:0px;width:2.5px;height:956px;background:#0a0a0a;"></div>
</body></html>
